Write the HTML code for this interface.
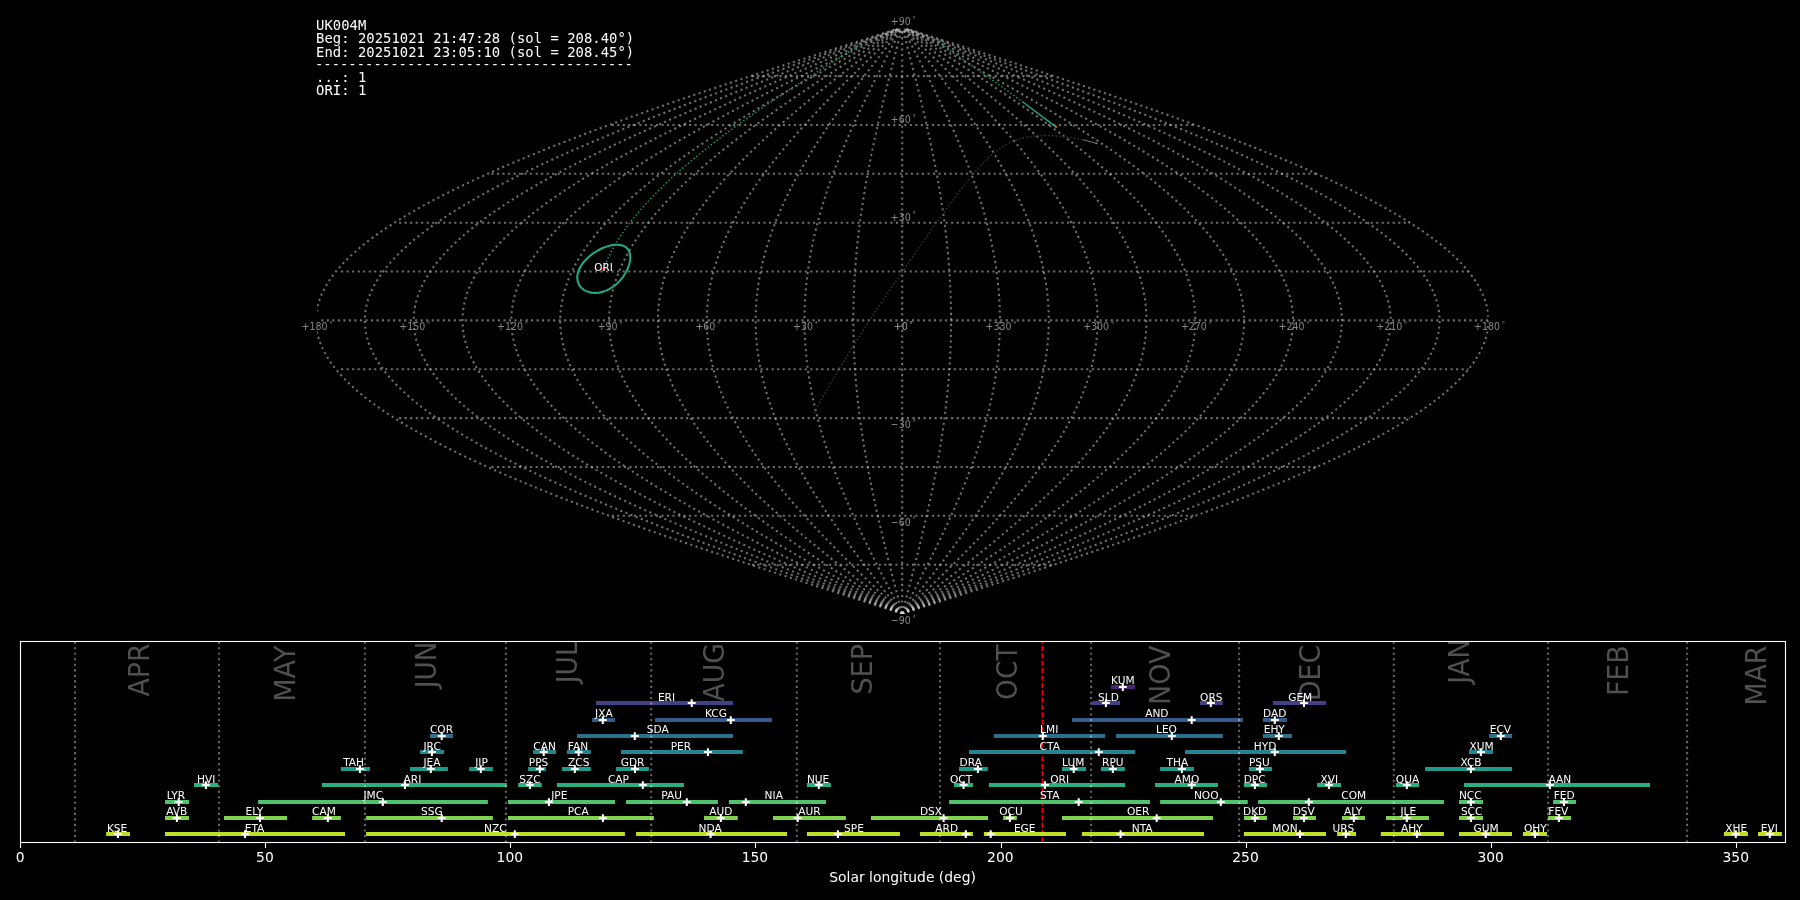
<!DOCTYPE html>
<html><head><meta charset="utf-8"><title>UK004M shower association</title>
<style>html,body{margin:0;padding:0;background:#000;overflow:hidden}svg{display:block;will-change:transform}</style></head>
<body>
<svg width="1800" height="900" viewBox="0 0 1800 900">
<rect width="1800" height="900" fill="#000"/>
<defs><clipPath id="ct"><rect x="317" y="26.8" width="1171.7" height="587.2"/></clipPath><clipPath id="cb"><rect x="20.5" y="641.5" width="1765" height="201"/></clipPath></defs>
<g clip-path="url(#ct)" fill="none" stroke="#d2d2d2" stroke-opacity="0.53" stroke-width="2.083" stroke-dasharray="2.083 3.437">
<path d="M902.20,613.53 L897.08,611.90 L891.97,610.27 L886.85,608.64 L881.74,607.02 L876.63,605.39 L871.52,603.76 L866.41,602.13 L861.30,600.50 L856.20,598.87 L851.10,597.25 L846.01,595.62 L840.92,593.99 L835.83,592.36 L830.75,590.73 L825.68,589.10 L820.61,587.47 L815.55,585.85 L810.49,584.22 L805.44,582.59 L800.40,580.96 L795.36,579.33 L790.34,577.70 L785.32,576.07 L780.31,574.45 L775.31,572.82 L770.32,571.19 L765.34,569.56 L760.37,567.93 L755.41,566.30 L750.46,564.67 L745.53,563.05 L740.60,561.42 L735.69,559.79 L730.79,558.16 L725.91,556.53 L721.04,554.90 L716.18,553.28 L711.33,551.65 L706.50,550.02 L701.69,548.39 L696.89,546.76 L692.10,545.13 L687.33,543.50 L682.58,541.88 L677.85,540.25 L673.13,538.62 L668.43,536.99 L663.75,535.36 L659.08,533.73 L654.44,532.11 L649.81,530.48 L645.20,528.85 L640.61,527.22 L636.04,525.59 L631.50,523.96 L626.97,522.33 L622.46,520.71 L617.98,519.08 L613.51,517.45 L609.07,515.82 L604.65,514.19 L600.25,512.56 L595.88,510.93 L591.53,509.31 L587.20,507.68 L582.90,506.05 L578.62,504.42 L574.37,502.79 L570.14,501.16 L565.94,499.53 L561.76,497.91 L557.61,496.28 L553.48,494.65 L549.38,493.02 L545.31,491.39 L541.26,489.76 L537.24,488.14 L533.25,486.51 L529.29,484.88 L525.36,483.25 L521.45,481.62 L517.58,479.99 L513.73,478.36 L509.92,476.74 L506.13,475.11 L502.37,473.48 L498.65,471.85 L494.95,470.22 L491.28,468.59 L487.65,466.96 L484.05,465.34 L480.48,463.71 L476.94,462.08 L473.44,460.45 L469.96,458.82 L466.52,457.19 L463.12,455.57 L459.74,453.94 L456.40,452.31 L453.10,450.68 L449.83,449.05 L446.59,447.42 L443.39,445.79 L440.22,444.17 L437.09,442.54 L433.99,440.91 L430.93,439.28 L427.91,437.65 L424.92,436.02 L421.96,434.39 L419.05,432.77 L416.17,431.14 L413.33,429.51 L410.52,427.88 L407.75,426.25 L405.02,424.62 L402.33,423.00 L399.68,421.37 L397.06,419.74 L394.48,418.11 L391.95,416.48 L389.45,414.85 L386.98,413.22 L384.56,411.60 L382.18,409.97 L379.84,408.34 L377.54,406.71 L375.27,405.08 L373.05,403.45 L370.87,401.82 L368.73,400.20 L366.62,398.57 L364.56,396.94 L362.54,395.31 L360.57,393.68 L358.63,392.05 L356.73,390.43 L354.88,388.80 L353.07,387.17 L351.30,385.54 L349.57,383.91 L347.88,382.28 L346.24,380.65 L344.63,379.03 L343.07,377.40 L341.56,375.77 L340.08,374.14 L338.65,372.51 L337.26,370.88 L335.92,369.25 L334.61,367.63 L333.35,366.00 L332.14,364.37 L330.97,362.74 L329.84,361.11 L328.75,359.48 L327.71,357.86 L326.71,356.23 L325.76,354.60 L324.85,352.97 L323.98,351.34 L323.16,349.71 L322.38,348.08 L321.65,346.46 L320.96,344.83 L320.31,343.20 L319.71,341.57 L319.15,339.94 L318.64,338.31 L318.17,336.69 L317.75,335.06 L317.37,333.43 L317.03,331.80 L316.74,330.17 L316.50,328.54 L316.30,326.91 L316.14,325.29 L316.03,323.66 L315.96,322.03 L315.94,320.40 L315.96,318.77 L316.03,317.14 L316.14,315.51 L316.30,313.89 L316.50,312.26 L316.74,310.63 L317.03,309.00 L317.37,307.37 L317.75,305.74 L318.17,304.11 L318.64,302.49 L319.15,300.86 L319.71,299.23 L320.31,297.60 L320.96,295.97 L321.65,294.34 L322.38,292.72 L323.16,291.09 L323.98,289.46 L324.85,287.83 L325.76,286.20 L326.71,284.57 L327.71,282.94 L328.75,281.32 L329.84,279.69 L330.97,278.06 L332.14,276.43 L333.35,274.80 L334.61,273.17 L335.92,271.54 L337.26,269.92 L338.65,268.29 L340.08,266.66 L341.56,265.03 L343.07,263.40 L344.63,261.77 L346.24,260.15 L347.88,258.52 L349.57,256.89 L351.30,255.26 L353.07,253.63 L354.88,252.00 L356.73,250.37 L358.63,248.75 L360.57,247.12 L362.54,245.49 L364.56,243.86 L366.62,242.23 L368.73,240.60 L370.87,238.97 L373.05,237.35 L375.27,235.72 L377.54,234.09 L379.84,232.46 L382.18,230.83 L384.56,229.20 L386.98,227.58 L389.45,225.95 L391.95,224.32 L394.48,222.69 L397.06,221.06 L399.68,219.43 L402.33,217.80 L405.02,216.18 L407.75,214.55 L410.52,212.92 L413.33,211.29 L416.17,209.66 L419.05,208.03 L421.96,206.40 L424.92,204.78 L427.91,203.15 L430.93,201.52 L433.99,199.89 L437.09,198.26 L440.22,196.63 L443.39,195.01 L446.59,193.38 L449.83,191.75 L453.10,190.12 L456.40,188.49 L459.74,186.86 L463.12,185.23 L466.52,183.61 L469.96,181.98 L473.44,180.35 L476.94,178.72 L480.48,177.09 L484.05,175.46 L487.65,173.83 L491.28,172.21 L494.95,170.58 L498.65,168.95 L502.37,167.32 L506.13,165.69 L509.92,164.06 L513.73,162.44 L517.58,160.81 L521.45,159.18 L525.36,157.55 L529.29,155.92 L533.25,154.29 L537.24,152.66 L541.26,151.04 L545.31,149.41 L549.38,147.78 L553.48,146.15 L557.61,144.52 L561.76,142.89 L565.94,141.26 L570.14,139.64 L574.37,138.01 L578.62,136.38 L582.90,134.75 L587.20,133.12 L591.53,131.49 L595.88,129.87 L600.25,128.24 L604.65,126.61 L609.07,124.98 L613.51,123.35 L617.98,121.72 L622.46,120.09 L626.97,118.47 L631.50,116.84 L636.04,115.21 L640.61,113.58 L645.20,111.95 L649.81,110.32 L654.44,108.69 L659.08,107.07 L663.75,105.44 L668.43,103.81 L673.13,102.18 L677.85,100.55 L682.58,98.92 L687.33,97.30 L692.10,95.67 L696.89,94.04 L701.69,92.41 L706.50,90.78 L711.33,89.15 L716.18,87.52 L721.04,85.90 L725.91,84.27 L730.79,82.64 L735.69,81.01 L740.60,79.38 L745.53,77.75 L750.46,76.12 L755.41,74.50 L760.37,72.87 L765.34,71.24 L770.32,69.61 L775.31,67.98 L780.31,66.35 L785.32,64.73 L790.34,63.10 L795.36,61.47 L800.40,59.84 L805.44,58.21 L810.49,56.58 L815.55,54.95 L820.61,53.33 L825.68,51.70 L830.75,50.07 L835.83,48.44 L840.92,46.81 L846.01,45.18 L851.10,43.55 L856.20,41.93 L861.30,40.30 L866.41,38.67 L871.52,37.04 L876.63,35.41 L881.74,33.78 L886.85,32.16 L891.97,30.53 L897.08,28.90"/>
<path d="M902.20,613.53 L897.51,611.90 L892.82,610.27 L888.13,608.64 L883.44,607.02 L878.76,605.39 L874.07,603.76 L869.39,602.13 L864.71,600.50 L860.04,598.87 L855.36,597.25 L850.69,595.62 L846.03,593.99 L841.36,592.36 L836.71,590.73 L832.05,589.10 L827.41,587.47 L822.77,585.85 L818.13,584.22 L813.50,582.59 L808.88,580.96 L804.27,579.33 L799.66,577.70 L795.06,576.07 L790.47,574.45 L785.88,572.82 L781.31,571.19 L776.75,569.56 L772.19,567.93 L767.64,566.30 L763.11,564.67 L758.58,563.05 L754.07,561.42 L749.57,559.79 L745.08,558.16 L740.60,556.53 L736.13,554.90 L731.68,553.28 L727.24,551.65 L722.81,550.02 L718.40,548.39 L714.00,546.76 L709.61,545.13 L705.24,543.50 L700.88,541.88 L696.54,540.25 L692.22,538.62 L687.91,536.99 L683.62,535.36 L679.34,533.73 L675.08,532.11 L670.84,530.48 L666.62,528.85 L662.41,527.22 L658.22,525.59 L654.05,523.96 L649.90,522.33 L645.77,520.71 L641.66,519.08 L637.57,517.45 L633.50,515.82 L629.45,514.19 L625.42,512.56 L621.41,510.93 L617.42,509.31 L613.45,507.68 L609.51,506.05 L605.59,504.42 L601.69,502.79 L597.81,501.16 L593.96,499.53 L590.13,497.91 L586.32,496.28 L582.54,494.65 L578.78,493.02 L575.05,491.39 L571.34,489.76 L567.66,488.14 L564.00,486.51 L560.37,484.88 L556.76,483.25 L553.18,481.62 L549.63,479.99 L546.10,478.36 L542.61,476.74 L539.13,475.11 L535.69,473.48 L532.27,471.85 L528.89,470.22 L525.53,468.59 L522.20,466.96 L518.90,465.34 L515.62,463.71 L512.38,462.08 L509.17,460.45 L505.98,458.82 L502.83,457.19 L499.71,455.57 L496.62,453.94 L493.55,452.31 L490.52,450.68 L487.53,449.05 L484.56,447.42 L481.62,445.79 L478.72,444.17 L475.85,442.54 L473.01,440.91 L470.20,439.28 L467.43,437.65 L464.69,436.02 L461.98,434.39 L459.31,432.77 L456.67,431.14 L454.07,429.51 L451.49,427.88 L448.96,426.25 L446.45,424.62 L443.99,423.00 L441.55,421.37 L439.16,419.74 L436.79,418.11 L434.47,416.48 L432.17,414.85 L429.92,413.22 L427.70,411.60 L425.52,409.97 L423.37,408.34 L421.26,406.71 L419.18,405.08 L417.15,403.45 L415.15,401.82 L413.18,400.20 L411.26,398.57 L409.37,396.94 L407.52,395.31 L405.70,393.68 L403.93,392.05 L402.19,390.43 L400.49,388.80 L398.83,387.17 L397.20,385.54 L395.62,383.91 L394.07,382.28 L392.57,380.65 L391.10,379.03 L389.67,377.40 L388.28,375.77 L386.93,374.14 L385.61,372.51 L384.34,370.88 L383.11,369.25 L381.91,367.63 L380.76,366.00 L379.64,364.37 L378.57,362.74 L377.53,361.11 L376.54,359.48 L375.58,357.86 L374.67,356.23 L373.79,354.60 L372.96,352.97 L372.17,351.34 L371.41,349.71 L370.70,348.08 L370.02,346.46 L369.39,344.83 L368.80,343.20 L368.25,341.57 L367.74,339.94 L367.27,338.31 L366.84,336.69 L366.45,335.06 L366.10,333.43 L365.80,331.80 L365.53,330.17 L365.31,328.54 L365.12,326.91 L364.98,325.29 L364.88,323.66 L364.82,322.03 L364.80,320.40 L364.82,318.77 L364.88,317.14 L364.98,315.51 L365.12,313.89 L365.31,312.26 L365.53,310.63 L365.80,309.00 L366.10,307.37 L366.45,305.74 L366.84,304.11 L367.27,302.49 L367.74,300.86 L368.25,299.23 L368.80,297.60 L369.39,295.97 L370.02,294.34 L370.70,292.72 L371.41,291.09 L372.17,289.46 L372.96,287.83 L373.79,286.20 L374.67,284.57 L375.58,282.94 L376.54,281.32 L377.53,279.69 L378.57,278.06 L379.64,276.43 L380.76,274.80 L381.91,273.17 L383.11,271.54 L384.34,269.92 L385.61,268.29 L386.93,266.66 L388.28,265.03 L389.67,263.40 L391.10,261.77 L392.57,260.15 L394.07,258.52 L395.62,256.89 L397.20,255.26 L398.83,253.63 L400.49,252.00 L402.19,250.37 L403.93,248.75 L405.70,247.12 L407.52,245.49 L409.37,243.86 L411.26,242.23 L413.18,240.60 L415.15,238.97 L417.15,237.35 L419.18,235.72 L421.26,234.09 L423.37,232.46 L425.52,230.83 L427.70,229.20 L429.92,227.58 L432.17,225.95 L434.47,224.32 L436.79,222.69 L439.16,221.06 L441.55,219.43 L443.99,217.80 L446.45,216.18 L448.96,214.55 L451.49,212.92 L454.07,211.29 L456.67,209.66 L459.31,208.03 L461.98,206.40 L464.69,204.78 L467.43,203.15 L470.20,201.52 L473.01,199.89 L475.85,198.26 L478.72,196.63 L481.62,195.01 L484.56,193.38 L487.53,191.75 L490.52,190.12 L493.55,188.49 L496.62,186.86 L499.71,185.23 L502.83,183.61 L505.98,181.98 L509.17,180.35 L512.38,178.72 L515.62,177.09 L518.90,175.46 L522.20,173.83 L525.53,172.21 L528.89,170.58 L532.27,168.95 L535.69,167.32 L539.13,165.69 L542.61,164.06 L546.10,162.44 L549.63,160.81 L553.18,159.18 L556.76,157.55 L560.37,155.92 L564.00,154.29 L567.66,152.66 L571.34,151.04 L575.05,149.41 L578.78,147.78 L582.54,146.15 L586.32,144.52 L590.13,142.89 L593.96,141.26 L597.81,139.64 L601.69,138.01 L605.59,136.38 L609.51,134.75 L613.45,133.12 L617.42,131.49 L621.41,129.87 L625.42,128.24 L629.45,126.61 L633.50,124.98 L637.57,123.35 L641.66,121.72 L645.77,120.09 L649.90,118.47 L654.05,116.84 L658.22,115.21 L662.41,113.58 L666.62,111.95 L670.84,110.32 L675.08,108.69 L679.34,107.07 L683.62,105.44 L687.91,103.81 L692.22,102.18 L696.54,100.55 L700.88,98.92 L705.24,97.30 L709.61,95.67 L714.00,94.04 L718.40,92.41 L722.81,90.78 L727.24,89.15 L731.68,87.52 L736.13,85.90 L740.60,84.27 L745.08,82.64 L749.57,81.01 L754.07,79.38 L758.58,77.75 L763.11,76.12 L767.64,74.50 L772.19,72.87 L776.75,71.24 L781.31,69.61 L785.88,67.98 L790.47,66.35 L795.06,64.73 L799.66,63.10 L804.27,61.47 L808.88,59.84 L813.50,58.21 L818.13,56.58 L822.77,54.95 L827.41,53.33 L832.05,51.70 L836.71,50.07 L841.36,48.44 L846.03,46.81 L850.69,45.18 L855.36,43.55 L860.04,41.93 L864.71,40.30 L869.39,38.67 L874.07,37.04 L878.76,35.41 L883.44,33.78 L888.13,32.16 L892.82,30.53 L897.51,28.90"/>
<path d="M902.20,613.53 L897.94,611.90 L893.67,610.27 L889.41,608.64 L885.15,607.02 L880.89,605.39 L876.63,603.76 L872.37,602.13 L868.12,600.50 L863.87,598.87 L859.62,597.25 L855.37,595.62 L851.13,593.99 L846.89,592.36 L842.66,590.73 L838.43,589.10 L834.21,587.47 L829.99,585.85 L825.77,584.22 L821.57,582.59 L817.36,580.96 L813.17,579.33 L808.98,577.70 L804.80,576.07 L800.62,574.45 L796.46,572.82 L792.30,571.19 L788.15,569.56 L784.01,567.93 L779.88,566.30 L775.75,564.67 L771.64,563.05 L767.54,561.42 L763.44,559.79 L759.36,558.16 L755.29,556.53 L751.23,554.90 L747.18,553.28 L743.14,551.65 L739.12,550.02 L735.11,548.39 L731.11,546.76 L727.12,545.13 L723.15,543.50 L719.19,541.88 L715.24,540.25 L711.31,538.62 L707.39,536.99 L703.49,535.36 L699.60,533.73 L695.73,532.11 L691.87,530.48 L688.03,528.85 L684.21,527.22 L680.40,525.59 L676.61,523.96 L672.84,522.33 L669.08,520.71 L665.35,519.08 L661.63,517.45 L657.92,515.82 L654.24,514.19 L650.58,512.56 L646.93,510.93 L643.31,509.31 L639.70,507.68 L636.12,506.05 L632.55,504.42 L629.01,502.79 L625.48,501.16 L621.98,499.53 L618.50,497.91 L615.04,496.28 L611.60,494.65 L608.18,493.02 L604.79,491.39 L601.42,489.76 L598.07,488.14 L594.75,486.51 L591.44,484.88 L588.17,483.25 L584.91,481.62 L581.68,479.99 L578.48,478.36 L575.30,476.74 L572.14,475.11 L569.01,473.48 L565.90,471.85 L562.82,470.22 L559.77,468.59 L556.74,466.96 L553.74,465.34 L550.77,463.71 L547.82,462.08 L544.90,460.45 L542.00,458.82 L539.14,457.19 L536.30,455.57 L533.49,453.94 L530.70,452.31 L527.95,450.68 L525.22,449.05 L522.53,447.42 L519.86,445.79 L517.22,444.17 L514.61,442.54 L512.03,440.91 L509.48,439.28 L506.95,437.65 L504.46,436.02 L502.00,434.39 L499.57,432.77 L497.17,431.14 L494.81,429.51 L492.47,427.88 L490.16,426.25 L487.89,424.62 L485.64,423.00 L483.43,421.37 L481.25,419.74 L479.10,418.11 L476.99,416.48 L474.90,414.85 L472.85,413.22 L470.84,411.60 L468.85,409.97 L466.90,408.34 L464.98,406.71 L463.09,405.08 L461.24,403.45 L459.42,401.82 L457.64,400.20 L455.89,398.57 L454.17,396.94 L452.49,395.31 L450.84,393.68 L449.22,392.05 L447.64,390.43 L446.10,388.80 L444.59,387.17 L443.11,385.54 L441.67,383.91 L440.27,382.28 L438.90,380.65 L437.56,379.03 L436.26,377.40 L435.00,375.77 L433.77,374.14 L432.58,372.51 L431.42,370.88 L430.30,369.25 L429.21,367.63 L428.16,366.00 L427.15,364.37 L426.17,362.74 L425.23,361.11 L424.33,359.48 L423.46,357.86 L422.63,356.23 L421.83,354.60 L421.07,352.97 L420.35,351.34 L419.66,349.71 L419.02,348.08 L418.40,346.46 L417.83,344.83 L417.29,343.20 L416.79,341.57 L416.33,339.94 L415.90,338.31 L415.51,336.69 L415.16,335.06 L414.84,333.43 L414.56,331.80 L414.32,330.17 L414.11,328.54 L413.95,326.91 L413.82,325.29 L413.72,323.66 L413.67,322.03 L413.65,320.40 L413.67,318.77 L413.72,317.14 L413.82,315.51 L413.95,313.89 L414.11,312.26 L414.32,310.63 L414.56,309.00 L414.84,307.37 L415.16,305.74 L415.51,304.11 L415.90,302.49 L416.33,300.86 L416.79,299.23 L417.29,297.60 L417.83,295.97 L418.40,294.34 L419.02,292.72 L419.66,291.09 L420.35,289.46 L421.07,287.83 L421.83,286.20 L422.63,284.57 L423.46,282.94 L424.33,281.32 L425.23,279.69 L426.17,278.06 L427.15,276.43 L428.16,274.80 L429.21,273.17 L430.30,271.54 L431.42,269.92 L432.58,268.29 L433.77,266.66 L435.00,265.03 L436.26,263.40 L437.56,261.77 L438.90,260.15 L440.27,258.52 L441.67,256.89 L443.11,255.26 L444.59,253.63 L446.10,252.00 L447.64,250.37 L449.22,248.75 L450.84,247.12 L452.49,245.49 L454.17,243.86 L455.89,242.23 L457.64,240.60 L459.42,238.97 L461.24,237.35 L463.09,235.72 L464.98,234.09 L466.90,232.46 L468.85,230.83 L470.84,229.20 L472.85,227.58 L474.90,225.95 L476.99,224.32 L479.10,222.69 L481.25,221.06 L483.43,219.43 L485.64,217.80 L487.89,216.18 L490.16,214.55 L492.47,212.92 L494.81,211.29 L497.17,209.66 L499.57,208.03 L502.00,206.40 L504.46,204.78 L506.95,203.15 L509.48,201.52 L512.03,199.89 L514.61,198.26 L517.22,196.63 L519.86,195.01 L522.53,193.38 L525.22,191.75 L527.95,190.12 L530.70,188.49 L533.49,186.86 L536.30,185.23 L539.14,183.61 L542.00,181.98 L544.90,180.35 L547.82,178.72 L550.77,177.09 L553.74,175.46 L556.74,173.83 L559.77,172.21 L562.82,170.58 L565.90,168.95 L569.01,167.32 L572.14,165.69 L575.30,164.06 L578.48,162.44 L581.68,160.81 L584.91,159.18 L588.17,157.55 L591.44,155.92 L594.75,154.29 L598.07,152.66 L601.42,151.04 L604.79,149.41 L608.18,147.78 L611.60,146.15 L615.04,144.52 L618.50,142.89 L621.98,141.26 L625.48,139.64 L629.01,138.01 L632.55,136.38 L636.12,134.75 L639.70,133.12 L643.31,131.49 L646.93,129.87 L650.58,128.24 L654.24,126.61 L657.92,124.98 L661.63,123.35 L665.35,121.72 L669.08,120.09 L672.84,118.47 L676.61,116.84 L680.40,115.21 L684.21,113.58 L688.03,111.95 L691.87,110.32 L695.73,108.69 L699.60,107.07 L703.49,105.44 L707.39,103.81 L711.31,102.18 L715.24,100.55 L719.19,98.92 L723.15,97.30 L727.12,95.67 L731.11,94.04 L735.11,92.41 L739.12,90.78 L743.14,89.15 L747.18,87.52 L751.23,85.90 L755.29,84.27 L759.36,82.64 L763.44,81.01 L767.54,79.38 L771.64,77.75 L775.75,76.12 L779.88,74.50 L784.01,72.87 L788.15,71.24 L792.30,69.61 L796.46,67.98 L800.62,66.35 L804.80,64.73 L808.98,63.10 L813.17,61.47 L817.36,59.84 L821.57,58.21 L825.77,56.58 L829.99,54.95 L834.21,53.33 L838.43,51.70 L842.66,50.07 L846.89,48.44 L851.13,46.81 L855.37,45.18 L859.62,43.55 L863.87,41.93 L868.12,40.30 L872.37,38.67 L876.63,37.04 L880.89,35.41 L885.15,33.78 L889.41,32.16 L893.67,30.53 L897.94,28.90"/>
<path d="M902.20,613.53 L898.36,611.90 L894.53,610.27 L890.69,608.64 L886.85,607.02 L883.02,605.39 L879.19,603.76 L875.36,602.13 L871.53,600.50 L867.70,598.87 L863.88,597.25 L860.06,595.62 L856.24,593.99 L852.43,592.36 L848.61,590.73 L844.81,589.10 L841.01,587.47 L837.21,585.85 L833.42,584.22 L829.63,582.59 L825.85,580.96 L822.07,579.33 L818.30,577.70 L814.54,576.07 L810.78,574.45 L807.03,572.82 L803.29,571.19 L799.56,569.56 L795.83,567.93 L792.11,566.30 L788.40,564.67 L784.70,563.05 L781.00,561.42 L777.32,559.79 L773.65,558.16 L769.98,556.53 L766.33,554.90 L762.68,553.28 L759.05,551.65 L755.43,550.02 L751.82,548.39 L748.22,546.76 L744.63,545.13 L741.05,543.50 L737.49,541.88 L733.94,540.25 L730.40,538.62 L726.87,536.99 L723.36,535.36 L719.86,533.73 L716.38,532.11 L712.91,530.48 L709.45,528.85 L706.01,527.22 L702.58,525.59 L699.17,523.96 L695.78,522.33 L692.40,520.71 L689.03,519.08 L685.68,517.45 L682.35,515.82 L679.04,514.19 L675.74,512.56 L672.46,510.93 L669.20,509.31 L665.95,507.68 L662.72,506.05 L659.52,504.42 L656.33,502.79 L653.15,501.16 L650.00,499.53 L646.87,497.91 L643.75,496.28 L640.66,494.65 L637.58,493.02 L634.53,491.39 L631.50,489.76 L628.48,488.14 L625.49,486.51 L622.52,484.88 L619.57,483.25 L616.64,481.62 L613.73,479.99 L610.85,478.36 L607.99,476.74 L605.15,475.11 L602.33,473.48 L599.53,471.85 L596.76,470.22 L594.01,468.59 L591.29,466.96 L588.59,465.34 L585.91,463.71 L583.26,462.08 L580.63,460.45 L578.02,458.82 L575.44,457.19 L572.89,455.57 L570.36,453.94 L567.85,452.31 L565.37,450.68 L562.92,449.05 L560.49,447.42 L558.09,445.79 L555.72,444.17 L553.37,442.54 L551.04,440.91 L548.75,439.28 L546.48,437.65 L544.24,436.02 L542.02,434.39 L539.84,432.77 L537.68,431.14 L535.54,429.51 L533.44,427.88 L531.36,426.25 L529.32,424.62 L527.30,423.00 L525.31,421.37 L523.35,419.74 L521.41,418.11 L519.51,416.48 L517.63,414.85 L515.79,413.22 L513.97,411.60 L512.19,409.97 L510.43,408.34 L508.70,406.71 L507.00,405.08 L505.34,403.45 L503.70,401.82 L502.09,400.20 L500.52,398.57 L498.97,396.94 L497.46,395.31 L495.97,393.68 L494.52,392.05 L493.10,390.43 L491.71,388.80 L490.35,387.17 L489.02,385.54 L487.73,383.91 L486.46,382.28 L485.23,380.65 L484.03,379.03 L482.86,377.40 L481.72,375.77 L480.61,374.14 L479.54,372.51 L478.50,370.88 L477.49,369.25 L476.51,367.63 L475.57,366.00 L474.65,364.37 L473.77,362.74 L472.93,361.11 L472.11,359.48 L471.33,357.86 L470.58,356.23 L469.87,354.60 L469.18,352.97 L468.54,351.34 L467.92,349.71 L467.33,348.08 L466.78,346.46 L466.27,344.83 L465.78,343.20 L465.33,341.57 L464.91,339.94 L464.53,338.31 L464.18,336.69 L463.86,335.06 L463.58,333.43 L463.33,331.80 L463.11,330.17 L462.92,328.54 L462.77,326.91 L462.66,325.29 L462.57,323.66 L462.52,322.03 L462.51,320.40 L462.52,318.77 L462.57,317.14 L462.66,315.51 L462.77,313.89 L462.92,312.26 L463.11,310.63 L463.33,309.00 L463.58,307.37 L463.86,305.74 L464.18,304.11 L464.53,302.49 L464.91,300.86 L465.33,299.23 L465.78,297.60 L466.27,295.97 L466.78,294.34 L467.33,292.72 L467.92,291.09 L468.54,289.46 L469.18,287.83 L469.87,286.20 L470.58,284.57 L471.33,282.94 L472.11,281.32 L472.93,279.69 L473.77,278.06 L474.65,276.43 L475.57,274.80 L476.51,273.17 L477.49,271.54 L478.50,269.92 L479.54,268.29 L480.61,266.66 L481.72,265.03 L482.86,263.40 L484.03,261.77 L485.23,260.15 L486.46,258.52 L487.73,256.89 L489.02,255.26 L490.35,253.63 L491.71,252.00 L493.10,250.37 L494.52,248.75 L495.97,247.12 L497.46,245.49 L498.97,243.86 L500.52,242.23 L502.09,240.60 L503.70,238.97 L505.34,237.35 L507.00,235.72 L508.70,234.09 L510.43,232.46 L512.19,230.83 L513.97,229.20 L515.79,227.58 L517.63,225.95 L519.51,224.32 L521.41,222.69 L523.35,221.06 L525.31,219.43 L527.30,217.80 L529.32,216.18 L531.36,214.55 L533.44,212.92 L535.54,211.29 L537.68,209.66 L539.84,208.03 L542.02,206.40 L544.24,204.78 L546.48,203.15 L548.75,201.52 L551.04,199.89 L553.37,198.26 L555.72,196.63 L558.09,195.01 L560.49,193.38 L562.92,191.75 L565.37,190.12 L567.85,188.49 L570.36,186.86 L572.89,185.23 L575.44,183.61 L578.02,181.98 L580.63,180.35 L583.26,178.72 L585.91,177.09 L588.59,175.46 L591.29,173.83 L594.01,172.21 L596.76,170.58 L599.53,168.95 L602.33,167.32 L605.15,165.69 L607.99,164.06 L610.85,162.44 L613.73,160.81 L616.64,159.18 L619.57,157.55 L622.52,155.92 L625.49,154.29 L628.48,152.66 L631.50,151.04 L634.53,149.41 L637.58,147.78 L640.66,146.15 L643.75,144.52 L646.87,142.89 L650.00,141.26 L653.15,139.64 L656.33,138.01 L659.52,136.38 L662.72,134.75 L665.95,133.12 L669.20,131.49 L672.46,129.87 L675.74,128.24 L679.04,126.61 L682.35,124.98 L685.68,123.35 L689.03,121.72 L692.40,120.09 L695.78,118.47 L699.17,116.84 L702.58,115.21 L706.01,113.58 L709.45,111.95 L712.91,110.32 L716.38,108.69 L719.86,107.07 L723.36,105.44 L726.87,103.81 L730.40,102.18 L733.94,100.55 L737.49,98.92 L741.05,97.30 L744.63,95.67 L748.22,94.04 L751.82,92.41 L755.43,90.78 L759.05,89.15 L762.68,87.52 L766.33,85.90 L769.98,84.27 L773.65,82.64 L777.32,81.01 L781.00,79.38 L784.70,77.75 L788.40,76.12 L792.11,74.50 L795.83,72.87 L799.56,71.24 L803.29,69.61 L807.03,67.98 L810.78,66.35 L814.54,64.73 L818.30,63.10 L822.07,61.47 L825.85,59.84 L829.63,58.21 L833.42,56.58 L837.21,54.95 L841.01,53.33 L844.81,51.70 L848.61,50.07 L852.43,48.44 L856.24,46.81 L860.06,45.18 L863.88,43.55 L867.70,41.93 L871.53,40.30 L875.36,38.67 L879.19,37.04 L883.02,35.41 L886.85,33.78 L890.69,32.16 L894.53,30.53 L898.36,28.90"/>
<path d="M902.20,613.53 L898.79,611.90 L895.38,610.27 L891.97,608.64 L888.56,607.02 L885.15,605.39 L881.75,603.76 L878.34,602.13 L874.94,600.50 L871.54,598.87 L868.14,597.25 L864.74,595.62 L861.35,593.99 L857.96,592.36 L854.57,590.73 L851.19,589.10 L847.81,587.47 L844.43,585.85 L841.06,584.22 L837.69,582.59 L834.33,580.96 L830.98,579.33 L827.62,577.70 L824.28,576.07 L820.94,574.45 L817.61,572.82 L814.28,571.19 L810.96,569.56 L807.65,567.93 L804.34,566.30 L801.04,564.67 L797.75,563.05 L794.47,561.42 L791.20,559.79 L787.93,558.16 L784.67,556.53 L781.42,554.90 L778.18,553.28 L774.95,551.65 L771.73,550.02 L768.52,548.39 L765.32,546.76 L762.14,545.13 L758.96,543.50 L755.79,541.88 L752.63,540.25 L749.49,538.62 L746.35,536.99 L743.23,535.36 L740.12,533.73 L737.02,532.11 L733.94,530.48 L730.87,528.85 L727.81,527.22 L724.76,525.59 L721.73,523.96 L718.71,522.33 L715.71,520.71 L712.72,519.08 L709.74,517.45 L706.78,515.82 L703.83,514.19 L700.90,512.56 L697.99,510.93 L695.09,509.31 L692.20,507.68 L689.33,506.05 L686.48,504.42 L683.65,502.79 L680.83,501.16 L678.02,499.53 L675.24,497.91 L672.47,496.28 L669.72,494.65 L666.99,493.02 L664.27,491.39 L661.57,489.76 L658.90,488.14 L656.24,486.51 L653.60,484.88 L650.97,483.25 L648.37,481.62 L645.79,479.99 L643.22,478.36 L640.68,476.74 L638.15,475.11 L635.65,473.48 L633.16,471.85 L630.70,470.22 L628.26,468.59 L625.83,466.96 L623.43,465.34 L621.05,463.71 L618.69,462.08 L616.36,460.45 L614.04,458.82 L611.75,457.19 L609.48,455.57 L607.23,453.94 L605.00,452.31 L602.80,450.68 L600.62,449.05 L598.46,447.42 L596.33,445.79 L594.21,444.17 L592.13,442.54 L590.06,440.91 L588.02,439.28 L586.00,437.65 L584.01,436.02 L582.04,434.39 L580.10,432.77 L578.18,431.14 L576.28,429.51 L574.41,427.88 L572.57,426.25 L570.75,424.62 L568.95,423.00 L567.18,421.37 L565.44,419.74 L563.72,418.11 L562.03,416.48 L560.36,414.85 L558.72,413.22 L557.11,411.60 L555.52,409.97 L553.96,408.34 L552.42,406.71 L550.92,405.08 L549.43,403.45 L547.98,401.82 L546.55,400.20 L545.15,398.57 L543.78,396.94 L542.43,395.31 L541.11,393.68 L539.82,392.05 L538.56,390.43 L537.32,388.80 L536.11,387.17 L534.93,385.54 L533.78,383.91 L532.65,382.28 L531.56,380.65 L530.49,379.03 L529.45,377.40 L528.44,375.77 L527.45,374.14 L526.50,372.51 L525.57,370.88 L524.68,369.25 L523.81,367.63 L522.97,366.00 L522.16,364.37 L521.38,362.74 L520.62,361.11 L519.90,359.48 L519.21,357.86 L518.54,356.23 L517.90,354.60 L517.30,352.97 L516.72,351.34 L516.17,349.71 L515.65,348.08 L515.16,346.46 L514.70,344.83 L514.27,343.20 L513.87,341.57 L513.50,339.94 L513.16,338.31 L512.85,336.69 L512.56,335.06 L512.31,333.43 L512.09,331.80 L511.90,330.17 L511.73,328.54 L511.60,326.91 L511.49,325.29 L511.42,323.66 L511.37,322.03 L511.36,320.40 L511.37,318.77 L511.42,317.14 L511.49,315.51 L511.60,313.89 L511.73,312.26 L511.90,310.63 L512.09,309.00 L512.31,307.37 L512.56,305.74 L512.85,304.11 L513.16,302.49 L513.50,300.86 L513.87,299.23 L514.27,297.60 L514.70,295.97 L515.16,294.34 L515.65,292.72 L516.17,291.09 L516.72,289.46 L517.30,287.83 L517.90,286.20 L518.54,284.57 L519.21,282.94 L519.90,281.32 L520.62,279.69 L521.38,278.06 L522.16,276.43 L522.97,274.80 L523.81,273.17 L524.68,271.54 L525.57,269.92 L526.50,268.29 L527.45,266.66 L528.44,265.03 L529.45,263.40 L530.49,261.77 L531.56,260.15 L532.65,258.52 L533.78,256.89 L534.93,255.26 L536.11,253.63 L537.32,252.00 L538.56,250.37 L539.82,248.75 L541.11,247.12 L542.43,245.49 L543.78,243.86 L545.15,242.23 L546.55,240.60 L547.98,238.97 L549.43,237.35 L550.92,235.72 L552.42,234.09 L553.96,232.46 L555.52,230.83 L557.11,229.20 L558.72,227.58 L560.36,225.95 L562.03,224.32 L563.72,222.69 L565.44,221.06 L567.18,219.43 L568.95,217.80 L570.75,216.18 L572.57,214.55 L574.41,212.92 L576.28,211.29 L578.18,209.66 L580.10,208.03 L582.04,206.40 L584.01,204.78 L586.00,203.15 L588.02,201.52 L590.06,199.89 L592.13,198.26 L594.21,196.63 L596.33,195.01 L598.46,193.38 L600.62,191.75 L602.80,190.12 L605.00,188.49 L607.23,186.86 L609.48,185.23 L611.75,183.61 L614.04,181.98 L616.36,180.35 L618.69,178.72 L621.05,177.09 L623.43,175.46 L625.83,173.83 L628.26,172.21 L630.70,170.58 L633.16,168.95 L635.65,167.32 L638.15,165.69 L640.68,164.06 L643.22,162.44 L645.79,160.81 L648.37,159.18 L650.97,157.55 L653.60,155.92 L656.24,154.29 L658.90,152.66 L661.57,151.04 L664.27,149.41 L666.99,147.78 L669.72,146.15 L672.47,144.52 L675.24,142.89 L678.02,141.26 L680.83,139.64 L683.65,138.01 L686.48,136.38 L689.33,134.75 L692.20,133.12 L695.09,131.49 L697.99,129.87 L700.90,128.24 L703.83,126.61 L706.78,124.98 L709.74,123.35 L712.72,121.72 L715.71,120.09 L718.71,118.47 L721.73,116.84 L724.76,115.21 L727.81,113.58 L730.87,111.95 L733.94,110.32 L737.02,108.69 L740.12,107.07 L743.23,105.44 L746.35,103.81 L749.49,102.18 L752.63,100.55 L755.79,98.92 L758.96,97.30 L762.14,95.67 L765.32,94.04 L768.52,92.41 L771.73,90.78 L774.95,89.15 L778.18,87.52 L781.42,85.90 L784.67,84.27 L787.93,82.64 L791.20,81.01 L794.47,79.38 L797.75,77.75 L801.04,76.12 L804.34,74.50 L807.65,72.87 L810.96,71.24 L814.28,69.61 L817.61,67.98 L820.94,66.35 L824.28,64.73 L827.62,63.10 L830.98,61.47 L834.33,59.84 L837.69,58.21 L841.06,56.58 L844.43,54.95 L847.81,53.33 L851.19,51.70 L854.57,50.07 L857.96,48.44 L861.35,46.81 L864.74,45.18 L868.14,43.55 L871.54,41.93 L874.94,40.30 L878.34,38.67 L881.75,37.04 L885.15,35.41 L888.56,33.78 L891.97,32.16 L895.38,30.53 L898.79,28.90"/>
<path d="M902.20,613.53 L899.22,611.90 L896.23,610.27 L893.25,608.64 L890.26,607.02 L887.28,605.39 L884.30,603.76 L881.32,602.13 L878.34,600.50 L875.37,598.87 L872.39,597.25 L869.42,595.62 L866.45,593.99 L863.49,592.36 L860.52,590.73 L857.56,589.10 L854.60,587.47 L851.65,585.85 L848.70,584.22 L845.76,582.59 L842.81,580.96 L839.88,579.33 L836.95,577.70 L834.02,576.07 L831.10,574.45 L828.18,572.82 L825.27,571.19 L822.37,569.56 L819.47,567.93 L816.57,566.30 L813.69,564.67 L810.81,563.05 L807.94,561.42 L805.07,559.79 L802.21,558.16 L799.36,556.53 L796.52,554.90 L793.69,553.28 L790.86,551.65 L788.04,550.02 L785.23,548.39 L782.43,546.76 L779.64,545.13 L776.86,543.50 L774.09,541.88 L771.33,540.25 L768.58,538.62 L765.83,536.99 L763.10,535.36 L760.38,533.73 L757.67,532.11 L754.97,530.48 L752.28,528.85 L749.61,527.22 L746.94,525.59 L744.29,523.96 L741.65,522.33 L739.02,520.71 L736.40,519.08 L733.80,517.45 L731.21,515.82 L728.63,514.19 L726.06,512.56 L723.51,510.93 L720.98,509.31 L718.45,507.68 L715.94,506.05 L713.45,504.42 L710.96,502.79 L708.50,501.16 L706.05,499.53 L703.61,497.91 L701.19,496.28 L698.78,494.65 L696.39,493.02 L694.01,491.39 L691.65,489.76 L689.31,488.14 L686.98,486.51 L684.67,484.88 L682.38,483.25 L680.10,481.62 L677.84,479.99 L675.59,478.36 L673.37,476.74 L671.16,475.11 L668.97,473.48 L666.79,471.85 L664.64,470.22 L662.50,468.59 L660.38,466.96 L658.28,465.34 L656.20,463.71 L654.13,462.08 L652.09,460.45 L650.06,458.82 L648.06,457.19 L646.07,455.57 L644.10,453.94 L642.15,452.31 L640.22,450.68 L638.32,449.05 L636.43,447.42 L634.56,445.79 L632.71,444.17 L630.89,442.54 L629.08,440.91 L627.29,439.28 L625.53,437.65 L623.78,436.02 L622.06,434.39 L620.36,432.77 L618.68,431.14 L617.02,429.51 L615.39,427.88 L613.77,426.25 L612.18,424.62 L610.61,423.00 L609.06,421.37 L607.54,419.74 L606.03,418.11 L604.55,416.48 L603.09,414.85 L601.66,413.22 L600.25,411.60 L598.86,409.97 L597.49,408.34 L596.15,406.71 L594.83,405.08 L593.53,403.45 L592.26,401.82 L591.01,400.20 L589.78,398.57 L588.58,396.94 L587.40,395.31 L586.25,393.68 L585.12,392.05 L584.01,390.43 L582.93,388.80 L581.87,387.17 L580.84,385.54 L579.83,383.91 L578.85,382.28 L577.89,380.65 L576.95,379.03 L576.04,377.40 L575.16,375.77 L574.30,374.14 L573.46,372.51 L572.65,370.88 L571.87,369.25 L571.11,367.63 L570.37,366.00 L569.66,364.37 L568.98,362.74 L568.32,361.11 L567.69,359.48 L567.08,357.86 L566.50,356.23 L565.94,354.60 L565.41,352.97 L564.91,351.34 L564.43,349.71 L563.97,348.08 L563.54,346.46 L563.14,344.83 L562.76,343.20 L562.41,341.57 L562.09,339.94 L561.79,338.31 L561.52,336.69 L561.27,335.06 L561.05,333.43 L560.85,331.80 L560.68,330.17 L560.54,328.54 L560.42,326.91 L560.33,325.29 L560.27,323.66 L560.23,322.03 L560.22,320.40 L560.23,318.77 L560.27,317.14 L560.33,315.51 L560.42,313.89 L560.54,312.26 L560.68,310.63 L560.85,309.00 L561.05,307.37 L561.27,305.74 L561.52,304.11 L561.79,302.49 L562.09,300.86 L562.41,299.23 L562.76,297.60 L563.14,295.97 L563.54,294.34 L563.97,292.72 L564.43,291.09 L564.91,289.46 L565.41,287.83 L565.94,286.20 L566.50,284.57 L567.08,282.94 L567.69,281.32 L568.32,279.69 L568.98,278.06 L569.66,276.43 L570.37,274.80 L571.11,273.17 L571.87,271.54 L572.65,269.92 L573.46,268.29 L574.30,266.66 L575.16,265.03 L576.04,263.40 L576.95,261.77 L577.89,260.15 L578.85,258.52 L579.83,256.89 L580.84,255.26 L581.87,253.63 L582.93,252.00 L584.01,250.37 L585.12,248.75 L586.25,247.12 L587.40,245.49 L588.58,243.86 L589.78,242.23 L591.01,240.60 L592.26,238.97 L593.53,237.35 L594.83,235.72 L596.15,234.09 L597.49,232.46 L598.86,230.83 L600.25,229.20 L601.66,227.58 L603.09,225.95 L604.55,224.32 L606.03,222.69 L607.54,221.06 L609.06,219.43 L610.61,217.80 L612.18,216.18 L613.77,214.55 L615.39,212.92 L617.02,211.29 L618.68,209.66 L620.36,208.03 L622.06,206.40 L623.78,204.78 L625.53,203.15 L627.29,201.52 L629.08,199.89 L630.89,198.26 L632.71,196.63 L634.56,195.01 L636.43,193.38 L638.32,191.75 L640.22,190.12 L642.15,188.49 L644.10,186.86 L646.07,185.23 L648.06,183.61 L650.06,181.98 L652.09,180.35 L654.13,178.72 L656.20,177.09 L658.28,175.46 L660.38,173.83 L662.50,172.21 L664.64,170.58 L666.79,168.95 L668.97,167.32 L671.16,165.69 L673.37,164.06 L675.59,162.44 L677.84,160.81 L680.10,159.18 L682.38,157.55 L684.67,155.92 L686.98,154.29 L689.31,152.66 L691.65,151.04 L694.01,149.41 L696.39,147.78 L698.78,146.15 L701.19,144.52 L703.61,142.89 L706.05,141.26 L708.50,139.64 L710.96,138.01 L713.45,136.38 L715.94,134.75 L718.45,133.12 L720.98,131.49 L723.51,129.87 L726.06,128.24 L728.63,126.61 L731.21,124.98 L733.80,123.35 L736.40,121.72 L739.02,120.09 L741.65,118.47 L744.29,116.84 L746.94,115.21 L749.61,113.58 L752.28,111.95 L754.97,110.32 L757.67,108.69 L760.38,107.07 L763.10,105.44 L765.83,103.81 L768.58,102.18 L771.33,100.55 L774.09,98.92 L776.86,97.30 L779.64,95.67 L782.43,94.04 L785.23,92.41 L788.04,90.78 L790.86,89.15 L793.69,87.52 L796.52,85.90 L799.36,84.27 L802.21,82.64 L805.07,81.01 L807.94,79.38 L810.81,77.75 L813.69,76.12 L816.57,74.50 L819.47,72.87 L822.37,71.24 L825.27,69.61 L828.18,67.98 L831.10,66.35 L834.02,64.73 L836.95,63.10 L839.88,61.47 L842.81,59.84 L845.76,58.21 L848.70,56.58 L851.65,54.95 L854.60,53.33 L857.56,51.70 L860.52,50.07 L863.49,48.44 L866.45,46.81 L869.42,45.18 L872.39,43.55 L875.37,41.93 L878.34,40.30 L881.32,38.67 L884.30,37.04 L887.28,35.41 L890.26,33.78 L893.25,32.16 L896.23,30.53 L899.22,28.90"/>
<path d="M902.20,613.53 L899.64,611.90 L897.08,610.27 L894.53,608.64 L891.97,607.02 L889.41,605.39 L886.86,603.76 L884.30,602.13 L881.75,600.50 L879.20,598.87 L876.65,597.25 L874.10,595.62 L871.56,593.99 L869.02,592.36 L866.48,590.73 L863.94,589.10 L861.40,587.47 L858.87,585.85 L856.34,584.22 L853.82,582.59 L851.30,580.96 L848.78,579.33 L846.27,577.70 L843.76,576.07 L841.25,574.45 L838.76,572.82 L836.26,571.19 L833.77,569.56 L831.29,567.93 L828.81,566.30 L826.33,564.67 L823.86,563.05 L821.40,561.42 L818.95,559.79 L816.50,558.16 L814.05,556.53 L811.62,554.90 L809.19,553.28 L806.77,551.65 L804.35,550.02 L801.94,548.39 L799.54,546.76 L797.15,545.13 L794.77,543.50 L792.39,541.88 L790.02,540.25 L787.66,538.62 L785.31,536.99 L782.97,535.36 L780.64,533.73 L778.32,532.11 L776.00,530.48 L773.70,528.85 L771.41,527.22 L769.12,525.59 L766.85,523.96 L764.58,522.33 L762.33,520.71 L760.09,519.08 L757.86,517.45 L755.63,515.82 L753.43,514.19 L751.23,512.56 L749.04,510.93 L746.86,509.31 L744.70,507.68 L742.55,506.05 L740.41,504.42 L738.28,502.79 L736.17,501.16 L734.07,499.53 L731.98,497.91 L729.90,496.28 L727.84,494.65 L725.79,493.02 L723.75,491.39 L721.73,489.76 L719.72,488.14 L717.73,486.51 L715.75,484.88 L713.78,483.25 L711.83,481.62 L709.89,479.99 L707.97,478.36 L706.06,476.74 L704.16,475.11 L702.29,473.48 L700.42,471.85 L698.57,470.22 L696.74,468.59 L694.93,466.96 L693.12,465.34 L691.34,463.71 L689.57,462.08 L687.82,460.45 L686.08,458.82 L684.36,457.19 L682.66,455.57 L680.97,453.94 L679.30,452.31 L677.65,450.68 L676.01,449.05 L674.40,447.42 L672.79,445.79 L671.21,444.17 L669.64,442.54 L668.10,440.91 L666.57,439.28 L665.05,437.65 L663.56,436.02 L662.08,434.39 L660.62,432.77 L659.18,431.14 L657.76,429.51 L656.36,427.88 L654.98,426.25 L653.61,424.62 L652.27,423.00 L650.94,421.37 L649.63,419.74 L648.34,418.11 L647.07,416.48 L645.82,414.85 L644.59,413.22 L643.38,411.60 L642.19,409.97 L641.02,408.34 L639.87,406.71 L638.74,405.08 L637.63,403.45 L636.53,401.82 L635.46,400.20 L634.41,398.57 L633.38,396.94 L632.37,395.31 L631.38,393.68 L630.41,392.05 L629.47,390.43 L628.54,388.80 L627.63,387.17 L626.75,385.54 L625.88,383.91 L625.04,382.28 L624.22,380.65 L623.42,379.03 L622.64,377.40 L621.88,375.77 L621.14,374.14 L620.43,372.51 L619.73,370.88 L619.06,369.25 L618.41,367.63 L617.78,366.00 L617.17,364.37 L616.58,362.74 L616.02,361.11 L615.48,359.48 L614.95,357.86 L614.46,356.23 L613.98,354.60 L613.52,352.97 L613.09,351.34 L612.68,349.71 L612.29,348.08 L611.92,346.46 L611.58,344.83 L611.25,343.20 L610.95,341.57 L610.68,339.94 L610.42,338.31 L610.19,336.69 L609.97,335.06 L609.78,333.43 L609.62,331.80 L609.47,330.17 L609.35,328.54 L609.25,326.91 L609.17,325.29 L609.11,323.66 L609.08,322.03 L609.07,320.40 L609.08,318.77 L609.11,317.14 L609.17,315.51 L609.25,313.89 L609.35,312.26 L609.47,310.63 L609.62,309.00 L609.78,307.37 L609.97,305.74 L610.19,304.11 L610.42,302.49 L610.68,300.86 L610.95,299.23 L611.25,297.60 L611.58,295.97 L611.92,294.34 L612.29,292.72 L612.68,291.09 L613.09,289.46 L613.52,287.83 L613.98,286.20 L614.46,284.57 L614.95,282.94 L615.48,281.32 L616.02,279.69 L616.58,278.06 L617.17,276.43 L617.78,274.80 L618.41,273.17 L619.06,271.54 L619.73,269.92 L620.43,268.29 L621.14,266.66 L621.88,265.03 L622.64,263.40 L623.42,261.77 L624.22,260.15 L625.04,258.52 L625.88,256.89 L626.75,255.26 L627.63,253.63 L628.54,252.00 L629.47,250.37 L630.41,248.75 L631.38,247.12 L632.37,245.49 L633.38,243.86 L634.41,242.23 L635.46,240.60 L636.53,238.97 L637.63,237.35 L638.74,235.72 L639.87,234.09 L641.02,232.46 L642.19,230.83 L643.38,229.20 L644.59,227.58 L645.82,225.95 L647.07,224.32 L648.34,222.69 L649.63,221.06 L650.94,219.43 L652.27,217.80 L653.61,216.18 L654.98,214.55 L656.36,212.92 L657.76,211.29 L659.18,209.66 L660.62,208.03 L662.08,206.40 L663.56,204.78 L665.05,203.15 L666.57,201.52 L668.10,199.89 L669.64,198.26 L671.21,196.63 L672.79,195.01 L674.40,193.38 L676.01,191.75 L677.65,190.12 L679.30,188.49 L680.97,186.86 L682.66,185.23 L684.36,183.61 L686.08,181.98 L687.82,180.35 L689.57,178.72 L691.34,177.09 L693.12,175.46 L694.93,173.83 L696.74,172.21 L698.57,170.58 L700.42,168.95 L702.29,167.32 L704.16,165.69 L706.06,164.06 L707.97,162.44 L709.89,160.81 L711.83,159.18 L713.78,157.55 L715.75,155.92 L717.73,154.29 L719.72,152.66 L721.73,151.04 L723.75,149.41 L725.79,147.78 L727.84,146.15 L729.90,144.52 L731.98,142.89 L734.07,141.26 L736.17,139.64 L738.28,138.01 L740.41,136.38 L742.55,134.75 L744.70,133.12 L746.86,131.49 L749.04,129.87 L751.23,128.24 L753.43,126.61 L755.63,124.98 L757.86,123.35 L760.09,121.72 L762.33,120.09 L764.58,118.47 L766.85,116.84 L769.12,115.21 L771.41,113.58 L773.70,111.95 L776.00,110.32 L778.32,108.69 L780.64,107.07 L782.97,105.44 L785.31,103.81 L787.66,102.18 L790.02,100.55 L792.39,98.92 L794.77,97.30 L797.15,95.67 L799.54,94.04 L801.94,92.41 L804.35,90.78 L806.77,89.15 L809.19,87.52 L811.62,85.90 L814.05,84.27 L816.50,82.64 L818.95,81.01 L821.40,79.38 L823.86,77.75 L826.33,76.12 L828.81,74.50 L831.29,72.87 L833.77,71.24 L836.26,69.61 L838.76,67.98 L841.25,66.35 L843.76,64.73 L846.27,63.10 L848.78,61.47 L851.30,59.84 L853.82,58.21 L856.34,56.58 L858.87,54.95 L861.40,53.33 L863.94,51.70 L866.48,50.07 L869.02,48.44 L871.56,46.81 L874.10,45.18 L876.65,43.55 L879.20,41.93 L881.75,40.30 L884.30,38.67 L886.86,37.04 L889.41,35.41 L891.97,33.78 L894.53,32.16 L897.08,30.53 L899.64,28.90"/>
<path d="M902.20,613.53 L900.07,611.90 L897.94,610.27 L895.81,608.64 L893.67,607.02 L891.54,605.39 L889.42,603.76 L887.29,602.13 L885.16,600.50 L883.03,598.87 L880.91,597.25 L878.79,595.62 L876.67,593.99 L874.55,592.36 L872.43,590.73 L870.32,589.10 L868.20,587.47 L866.09,585.85 L863.99,584.22 L861.88,582.59 L859.78,580.96 L857.68,579.33 L855.59,577.70 L853.50,576.07 L851.41,574.45 L849.33,572.82 L847.25,571.19 L845.18,569.56 L843.10,567.93 L841.04,566.30 L838.98,564.67 L836.92,563.05 L834.87,561.42 L832.82,559.79 L830.78,558.16 L828.75,556.53 L826.71,554.90 L824.69,553.28 L822.67,551.65 L820.66,550.02 L818.65,548.39 L816.65,546.76 L814.66,545.13 L812.67,543.50 L810.69,541.88 L808.72,540.25 L806.75,538.62 L804.80,536.99 L802.84,535.36 L800.90,533.73 L798.96,532.11 L797.04,530.48 L795.12,528.85 L793.21,527.22 L791.30,525.59 L789.41,523.96 L787.52,522.33 L785.64,520.71 L783.77,519.08 L781.91,517.45 L780.06,515.82 L778.22,514.19 L776.39,512.56 L774.57,510.93 L772.75,509.31 L770.95,507.68 L769.16,506.05 L767.38,504.42 L765.60,502.79 L763.84,501.16 L762.09,499.53 L760.35,497.91 L758.62,496.28 L756.90,494.65 L755.19,493.02 L753.49,491.39 L751.81,489.76 L750.14,488.14 L748.47,486.51 L746.82,484.88 L745.18,483.25 L743.56,481.62 L741.94,479.99 L740.34,478.36 L738.75,476.74 L737.17,475.11 L735.60,473.48 L734.05,471.85 L732.51,470.22 L730.99,468.59 L729.47,466.96 L727.97,465.34 L726.48,463.71 L725.01,462.08 L723.55,460.45 L722.10,458.82 L720.67,457.19 L719.25,455.57 L717.84,453.94 L716.45,452.31 L715.07,450.68 L713.71,449.05 L712.36,447.42 L711.03,445.79 L709.71,444.17 L708.40,442.54 L707.11,440.91 L705.84,439.28 L704.58,437.65 L703.33,436.02 L702.10,434.39 L700.89,432.77 L699.69,431.14 L698.50,429.51 L697.33,427.88 L696.18,426.25 L695.04,424.62 L693.92,423.00 L692.82,421.37 L691.73,419.74 L690.65,418.11 L689.59,416.48 L688.55,414.85 L687.53,413.22 L686.52,411.60 L685.53,409.97 L684.55,408.34 L683.59,406.71 L682.65,405.08 L681.72,403.45 L680.81,401.82 L679.92,400.20 L679.04,398.57 L678.19,396.94 L677.34,395.31 L676.52,393.68 L675.71,392.05 L674.92,390.43 L674.15,388.80 L673.39,387.17 L672.66,385.54 L671.94,383.91 L671.23,382.28 L670.55,380.65 L669.88,379.03 L669.23,377.40 L668.60,375.77 L667.98,374.14 L667.39,372.51 L666.81,370.88 L666.25,369.25 L665.71,367.63 L665.18,366.00 L664.67,364.37 L664.19,362.74 L663.72,361.11 L663.26,359.48 L662.83,357.86 L662.41,356.23 L662.02,354.60 L661.64,352.97 L661.28,351.34 L660.93,349.71 L660.61,348.08 L660.30,346.46 L660.01,344.83 L659.75,343.20 L659.50,341.57 L659.26,339.94 L659.05,338.31 L658.85,336.69 L658.68,335.06 L658.52,333.43 L658.38,331.80 L658.26,330.17 L658.16,328.54 L658.07,326.91 L658.01,325.29 L657.96,323.66 L657.93,322.03 L657.93,320.40 L657.93,318.77 L657.96,317.14 L658.01,315.51 L658.07,313.89 L658.16,312.26 L658.26,310.63 L658.38,309.00 L658.52,307.37 L658.68,305.74 L658.85,304.11 L659.05,302.49 L659.26,300.86 L659.50,299.23 L659.75,297.60 L660.01,295.97 L660.30,294.34 L660.61,292.72 L660.93,291.09 L661.28,289.46 L661.64,287.83 L662.02,286.20 L662.41,284.57 L662.83,282.94 L663.26,281.32 L663.72,279.69 L664.19,278.06 L664.67,276.43 L665.18,274.80 L665.71,273.17 L666.25,271.54 L666.81,269.92 L667.39,268.29 L667.98,266.66 L668.60,265.03 L669.23,263.40 L669.88,261.77 L670.55,260.15 L671.23,258.52 L671.94,256.89 L672.66,255.26 L673.39,253.63 L674.15,252.00 L674.92,250.37 L675.71,248.75 L676.52,247.12 L677.34,245.49 L678.19,243.86 L679.04,242.23 L679.92,240.60 L680.81,238.97 L681.72,237.35 L682.65,235.72 L683.59,234.09 L684.55,232.46 L685.53,230.83 L686.52,229.20 L687.53,227.58 L688.55,225.95 L689.59,224.32 L690.65,222.69 L691.73,221.06 L692.82,219.43 L693.92,217.80 L695.04,216.18 L696.18,214.55 L697.33,212.92 L698.50,211.29 L699.69,209.66 L700.89,208.03 L702.10,206.40 L703.33,204.78 L704.58,203.15 L705.84,201.52 L707.11,199.89 L708.40,198.26 L709.71,196.63 L711.03,195.01 L712.36,193.38 L713.71,191.75 L715.07,190.12 L716.45,188.49 L717.84,186.86 L719.25,185.23 L720.67,183.61 L722.10,181.98 L723.55,180.35 L725.01,178.72 L726.48,177.09 L727.97,175.46 L729.47,173.83 L730.99,172.21 L732.51,170.58 L734.05,168.95 L735.60,167.32 L737.17,165.69 L738.75,164.06 L740.34,162.44 L741.94,160.81 L743.56,159.18 L745.18,157.55 L746.82,155.92 L748.47,154.29 L750.14,152.66 L751.81,151.04 L753.49,149.41 L755.19,147.78 L756.90,146.15 L758.62,144.52 L760.35,142.89 L762.09,141.26 L763.84,139.64 L765.60,138.01 L767.38,136.38 L769.16,134.75 L770.95,133.12 L772.75,131.49 L774.57,129.87 L776.39,128.24 L778.22,126.61 L780.06,124.98 L781.91,123.35 L783.77,121.72 L785.64,120.09 L787.52,118.47 L789.41,116.84 L791.30,115.21 L793.21,113.58 L795.12,111.95 L797.04,110.32 L798.96,108.69 L800.90,107.07 L802.84,105.44 L804.80,103.81 L806.75,102.18 L808.72,100.55 L810.69,98.92 L812.67,97.30 L814.66,95.67 L816.65,94.04 L818.65,92.41 L820.66,90.78 L822.67,89.15 L824.69,87.52 L826.71,85.90 L828.75,84.27 L830.78,82.64 L832.82,81.01 L834.87,79.38 L836.92,77.75 L838.98,76.12 L841.04,74.50 L843.10,72.87 L845.18,71.24 L847.25,69.61 L849.33,67.98 L851.41,66.35 L853.50,64.73 L855.59,63.10 L857.68,61.47 L859.78,59.84 L861.88,58.21 L863.99,56.58 L866.09,54.95 L868.20,53.33 L870.32,51.70 L872.43,50.07 L874.55,48.44 L876.67,46.81 L878.79,45.18 L880.91,43.55 L883.03,41.93 L885.16,40.30 L887.29,38.67 L889.42,37.04 L891.54,35.41 L893.67,33.78 L895.81,32.16 L897.94,30.53 L900.07,28.90"/>
<path d="M902.20,613.53 L900.49,611.90 L898.79,610.27 L897.08,608.64 L895.38,607.02 L893.68,605.39 L891.97,603.76 L890.27,602.13 L888.57,600.50 L886.87,598.87 L885.17,597.25 L883.47,595.62 L881.77,593.99 L880.08,592.36 L878.38,590.73 L876.69,589.10 L875.00,587.47 L873.32,585.85 L871.63,584.22 L869.95,582.59 L868.27,580.96 L866.59,579.33 L864.91,577.70 L863.24,576.07 L861.57,574.45 L859.90,572.82 L858.24,571.19 L856.58,569.56 L854.92,567.93 L853.27,566.30 L851.62,564.67 L849.98,563.05 L848.33,561.42 L846.70,559.79 L845.06,558.16 L843.44,556.53 L841.81,554.90 L840.19,553.28 L838.58,551.65 L836.97,550.02 L835.36,548.39 L833.76,546.76 L832.17,545.13 L830.58,543.50 L828.99,541.88 L827.42,540.25 L825.84,538.62 L824.28,536.99 L822.72,535.36 L821.16,533.73 L819.61,532.11 L818.07,530.48 L816.53,528.85 L815.00,527.22 L813.48,525.59 L811.97,523.96 L810.46,522.33 L808.95,520.71 L807.46,519.08 L805.97,517.45 L804.49,515.82 L803.02,514.19 L801.55,512.56 L800.09,510.93 L798.64,509.31 L797.20,507.68 L795.77,506.05 L794.34,504.42 L792.92,502.79 L791.51,501.16 L790.11,499.53 L788.72,497.91 L787.34,496.28 L785.96,494.65 L784.59,493.02 L783.24,491.39 L781.89,489.76 L780.55,488.14 L779.22,486.51 L777.90,484.88 L776.59,483.25 L775.28,481.62 L773.99,479.99 L772.71,478.36 L771.44,476.74 L770.18,475.11 L768.92,473.48 L767.68,471.85 L766.45,470.22 L765.23,468.59 L764.02,466.96 L762.82,465.34 L761.63,463.71 L760.45,462.08 L759.28,460.45 L758.12,458.82 L756.97,457.19 L755.84,455.57 L754.71,453.94 L753.60,452.31 L752.50,450.68 L751.41,449.05 L750.33,447.42 L749.26,445.79 L748.21,444.17 L747.16,442.54 L746.13,440.91 L745.11,439.28 L744.10,437.65 L743.11,436.02 L742.12,434.39 L741.15,432.77 L740.19,431.14 L739.24,429.51 L738.31,427.88 L737.38,426.25 L736.47,424.62 L735.58,423.00 L734.69,421.37 L733.82,419.74 L732.96,418.11 L732.12,416.48 L731.28,414.85 L730.46,413.22 L729.65,411.60 L728.86,409.97 L728.08,408.34 L727.31,406.71 L726.56,405.08 L725.82,403.45 L725.09,401.82 L724.38,400.20 L723.67,398.57 L722.99,396.94 L722.31,395.31 L721.66,393.68 L721.01,392.05 L720.38,390.43 L719.76,388.80 L719.16,387.17 L718.57,385.54 L717.99,383.91 L717.43,382.28 L716.88,380.65 L716.34,379.03 L715.82,377.40 L715.32,375.77 L714.83,374.14 L714.35,372.51 L713.89,370.88 L713.44,369.25 L713.00,367.63 L712.58,366.00 L712.18,364.37 L711.79,362.74 L711.41,361.11 L711.05,359.48 L710.70,357.86 L710.37,356.23 L710.05,354.60 L709.75,352.97 L709.46,351.34 L709.19,349.71 L708.93,348.08 L708.68,346.46 L708.45,344.83 L708.24,343.20 L708.04,341.57 L707.85,339.94 L707.68,338.31 L707.52,336.69 L707.38,335.06 L707.26,333.43 L707.14,331.80 L707.05,330.17 L706.97,328.54 L706.90,326.91 L706.85,325.29 L706.81,323.66 L706.79,322.03 L706.78,320.40 L706.79,318.77 L706.81,317.14 L706.85,315.51 L706.90,313.89 L706.97,312.26 L707.05,310.63 L707.14,309.00 L707.26,307.37 L707.38,305.74 L707.52,304.11 L707.68,302.49 L707.85,300.86 L708.04,299.23 L708.24,297.60 L708.45,295.97 L708.68,294.34 L708.93,292.72 L709.19,291.09 L709.46,289.46 L709.75,287.83 L710.05,286.20 L710.37,284.57 L710.70,282.94 L711.05,281.32 L711.41,279.69 L711.79,278.06 L712.18,276.43 L712.58,274.80 L713.00,273.17 L713.44,271.54 L713.89,269.92 L714.35,268.29 L714.83,266.66 L715.32,265.03 L715.82,263.40 L716.34,261.77 L716.88,260.15 L717.43,258.52 L717.99,256.89 L718.57,255.26 L719.16,253.63 L719.76,252.00 L720.38,250.37 L721.01,248.75 L721.66,247.12 L722.31,245.49 L722.99,243.86 L723.67,242.23 L724.38,240.60 L725.09,238.97 L725.82,237.35 L726.56,235.72 L727.31,234.09 L728.08,232.46 L728.86,230.83 L729.65,229.20 L730.46,227.58 L731.28,225.95 L732.12,224.32 L732.96,222.69 L733.82,221.06 L734.69,219.43 L735.58,217.80 L736.47,216.18 L737.38,214.55 L738.31,212.92 L739.24,211.29 L740.19,209.66 L741.15,208.03 L742.12,206.40 L743.11,204.78 L744.10,203.15 L745.11,201.52 L746.13,199.89 L747.16,198.26 L748.21,196.63 L749.26,195.01 L750.33,193.38 L751.41,191.75 L752.50,190.12 L753.60,188.49 L754.71,186.86 L755.84,185.23 L756.97,183.61 L758.12,181.98 L759.28,180.35 L760.45,178.72 L761.63,177.09 L762.82,175.46 L764.02,173.83 L765.23,172.21 L766.45,170.58 L767.68,168.95 L768.92,167.32 L770.18,165.69 L771.44,164.06 L772.71,162.44 L773.99,160.81 L775.28,159.18 L776.59,157.55 L777.90,155.92 L779.22,154.29 L780.55,152.66 L781.89,151.04 L783.24,149.41 L784.59,147.78 L785.96,146.15 L787.34,144.52 L788.72,142.89 L790.11,141.26 L791.51,139.64 L792.92,138.01 L794.34,136.38 L795.77,134.75 L797.20,133.12 L798.64,131.49 L800.09,129.87 L801.55,128.24 L803.02,126.61 L804.49,124.98 L805.97,123.35 L807.46,121.72 L808.95,120.09 L810.46,118.47 L811.97,116.84 L813.48,115.21 L815.00,113.58 L816.53,111.95 L818.07,110.32 L819.61,108.69 L821.16,107.07 L822.72,105.44 L824.28,103.81 L825.84,102.18 L827.42,100.55 L828.99,98.92 L830.58,97.30 L832.17,95.67 L833.76,94.04 L835.36,92.41 L836.97,90.78 L838.58,89.15 L840.19,87.52 L841.81,85.90 L843.44,84.27 L845.06,82.64 L846.70,81.01 L848.33,79.38 L849.98,77.75 L851.62,76.12 L853.27,74.50 L854.92,72.87 L856.58,71.24 L858.24,69.61 L859.90,67.98 L861.57,66.35 L863.24,64.73 L864.91,63.10 L866.59,61.47 L868.27,59.84 L869.95,58.21 L871.63,56.58 L873.32,54.95 L875.00,53.33 L876.69,51.70 L878.38,50.07 L880.08,48.44 L881.77,46.81 L883.47,45.18 L885.17,43.55 L886.87,41.93 L888.57,40.30 L890.27,38.67 L891.97,37.04 L893.68,35.41 L895.38,33.78 L897.08,32.16 L898.79,30.53 L900.49,28.90"/>
<path d="M902.20,613.53 L900.92,611.90 L899.64,610.27 L898.36,608.64 L897.08,607.02 L895.81,605.39 L894.53,603.76 L893.25,602.13 L891.98,600.50 L890.70,598.87 L889.43,597.25 L888.15,595.62 L886.88,593.99 L885.61,592.36 L884.34,590.73 L883.07,589.10 L881.80,587.47 L880.54,585.85 L879.27,584.22 L878.01,582.59 L876.75,580.96 L875.49,579.33 L874.23,577.70 L872.98,576.07 L871.73,574.45 L870.48,572.82 L869.23,571.19 L867.99,569.56 L866.74,567.93 L865.50,566.30 L864.27,564.67 L863.03,563.05 L861.80,561.42 L860.57,559.79 L859.35,558.16 L858.13,556.53 L856.91,554.90 L855.69,553.28 L854.48,551.65 L853.28,550.02 L852.07,548.39 L850.87,546.76 L849.68,545.13 L848.48,543.50 L847.30,541.88 L846.11,540.25 L844.93,538.62 L843.76,536.99 L842.59,535.36 L841.42,533.73 L840.26,532.11 L839.10,530.48 L837.95,528.85 L836.80,527.22 L835.66,525.59 L834.52,523.96 L833.39,522.33 L832.27,520.71 L831.14,519.08 L830.03,517.45 L828.92,515.82 L827.81,514.19 L826.71,512.56 L825.62,510.93 L824.53,509.31 L823.45,507.68 L822.37,506.05 L821.31,504.42 L820.24,502.79 L819.18,501.16 L818.13,499.53 L817.09,497.91 L816.05,496.28 L815.02,494.65 L813.99,493.02 L812.98,491.39 L811.97,489.76 L810.96,488.14 L809.96,486.51 L808.97,484.88 L807.99,483.25 L807.01,481.62 L806.04,479.99 L805.08,478.36 L804.13,476.74 L803.18,475.11 L802.24,473.48 L801.31,471.85 L800.39,470.22 L799.47,468.59 L798.56,466.96 L797.66,465.34 L796.77,463.71 L795.89,462.08 L795.01,460.45 L794.14,458.82 L793.28,457.19 L792.43,455.57 L791.59,453.94 L790.75,452.31 L789.92,450.68 L789.11,449.05 L788.30,447.42 L787.50,445.79 L786.71,444.17 L785.92,442.54 L785.15,440.91 L784.38,439.28 L783.63,437.65 L782.88,436.02 L782.14,434.39 L781.41,432.77 L780.69,431.14 L779.98,429.51 L779.28,427.88 L778.59,426.25 L777.91,424.62 L777.23,423.00 L776.57,421.37 L775.92,419.74 L775.27,418.11 L774.64,416.48 L774.01,414.85 L773.40,413.22 L772.79,411.60 L772.20,409.97 L771.61,408.34 L771.03,406.71 L770.47,405.08 L769.91,403.45 L769.37,401.82 L768.83,400.20 L768.31,398.57 L767.79,396.94 L767.29,395.31 L766.79,393.68 L766.31,392.05 L765.83,390.43 L765.37,388.80 L764.92,387.17 L764.47,385.54 L764.04,383.91 L763.62,382.28 L763.21,380.65 L762.81,379.03 L762.42,377.40 L762.04,375.77 L761.67,374.14 L761.31,372.51 L760.97,370.88 L760.63,369.25 L760.30,367.63 L759.99,366.00 L759.68,364.37 L759.39,362.74 L759.11,361.11 L758.84,359.48 L758.58,357.86 L758.33,356.23 L758.09,354.60 L757.86,352.97 L757.65,351.34 L757.44,349.71 L757.24,348.08 L757.06,346.46 L756.89,344.83 L756.73,343.20 L756.58,341.57 L756.44,339.94 L756.31,338.31 L756.19,336.69 L756.09,335.06 L755.99,333.43 L755.91,331.80 L755.84,330.17 L755.77,328.54 L755.72,326.91 L755.69,325.29 L755.66,323.66 L755.64,322.03 L755.63,320.40 L755.64,318.77 L755.66,317.14 L755.69,315.51 L755.72,313.89 L755.77,312.26 L755.84,310.63 L755.91,309.00 L755.99,307.37 L756.09,305.74 L756.19,304.11 L756.31,302.49 L756.44,300.86 L756.58,299.23 L756.73,297.60 L756.89,295.97 L757.06,294.34 L757.24,292.72 L757.44,291.09 L757.65,289.46 L757.86,287.83 L758.09,286.20 L758.33,284.57 L758.58,282.94 L758.84,281.32 L759.11,279.69 L759.39,278.06 L759.68,276.43 L759.99,274.80 L760.30,273.17 L760.63,271.54 L760.97,269.92 L761.31,268.29 L761.67,266.66 L762.04,265.03 L762.42,263.40 L762.81,261.77 L763.21,260.15 L763.62,258.52 L764.04,256.89 L764.47,255.26 L764.92,253.63 L765.37,252.00 L765.83,250.37 L766.31,248.75 L766.79,247.12 L767.29,245.49 L767.79,243.86 L768.31,242.23 L768.83,240.60 L769.37,238.97 L769.91,237.35 L770.47,235.72 L771.03,234.09 L771.61,232.46 L772.20,230.83 L772.79,229.20 L773.40,227.58 L774.01,225.95 L774.64,224.32 L775.27,222.69 L775.92,221.06 L776.57,219.43 L777.23,217.80 L777.91,216.18 L778.59,214.55 L779.28,212.92 L779.98,211.29 L780.69,209.66 L781.41,208.03 L782.14,206.40 L782.88,204.78 L783.63,203.15 L784.38,201.52 L785.15,199.89 L785.92,198.26 L786.71,196.63 L787.50,195.01 L788.30,193.38 L789.11,191.75 L789.92,190.12 L790.75,188.49 L791.59,186.86 L792.43,185.23 L793.28,183.61 L794.14,181.98 L795.01,180.35 L795.89,178.72 L796.77,177.09 L797.66,175.46 L798.56,173.83 L799.47,172.21 L800.39,170.58 L801.31,168.95 L802.24,167.32 L803.18,165.69 L804.13,164.06 L805.08,162.44 L806.04,160.81 L807.01,159.18 L807.99,157.55 L808.97,155.92 L809.96,154.29 L810.96,152.66 L811.97,151.04 L812.98,149.41 L813.99,147.78 L815.02,146.15 L816.05,144.52 L817.09,142.89 L818.13,141.26 L819.18,139.64 L820.24,138.01 L821.31,136.38 L822.37,134.75 L823.45,133.12 L824.53,131.49 L825.62,129.87 L826.71,128.24 L827.81,126.61 L828.92,124.98 L830.03,123.35 L831.14,121.72 L832.27,120.09 L833.39,118.47 L834.52,116.84 L835.66,115.21 L836.80,113.58 L837.95,111.95 L839.10,110.32 L840.26,108.69 L841.42,107.07 L842.59,105.44 L843.76,103.81 L844.93,102.18 L846.11,100.55 L847.30,98.92 L848.48,97.30 L849.68,95.67 L850.87,94.04 L852.07,92.41 L853.28,90.78 L854.48,89.15 L855.69,87.52 L856.91,85.90 L858.13,84.27 L859.35,82.64 L860.57,81.01 L861.80,79.38 L863.03,77.75 L864.27,76.12 L865.50,74.50 L866.74,72.87 L867.99,71.24 L869.23,69.61 L870.48,67.98 L871.73,66.35 L872.98,64.73 L874.23,63.10 L875.49,61.47 L876.75,59.84 L878.01,58.21 L879.27,56.58 L880.54,54.95 L881.80,53.33 L883.07,51.70 L884.34,50.07 L885.61,48.44 L886.88,46.81 L888.15,45.18 L889.43,43.55 L890.70,41.93 L891.98,40.30 L893.25,38.67 L894.53,37.04 L895.81,35.41 L897.08,33.78 L898.36,32.16 L899.64,30.53 L900.92,28.90"/>
<path d="M902.20,613.53 L901.35,611.90 L900.49,610.27 L899.64,608.64 L898.79,607.02 L897.94,605.39 L897.09,603.76 L896.23,602.13 L895.38,600.50 L894.53,598.87 L893.68,597.25 L892.83,595.62 L891.99,593.99 L891.14,592.36 L890.29,590.73 L889.45,589.10 L888.60,587.47 L887.76,585.85 L886.91,584.22 L886.07,582.59 L885.23,580.96 L884.39,579.33 L883.56,577.70 L882.72,576.07 L881.88,574.45 L881.05,572.82 L880.22,571.19 L879.39,569.56 L878.56,567.93 L877.74,566.30 L876.91,564.67 L876.09,563.05 L875.27,561.42 L874.45,559.79 L873.63,558.16 L872.82,556.53 L872.01,554.90 L871.20,553.28 L870.39,551.65 L869.58,550.02 L868.78,548.39 L867.98,546.76 L867.18,545.13 L866.39,543.50 L865.60,541.88 L864.81,540.25 L864.02,538.62 L863.24,536.99 L862.46,535.36 L861.68,533.73 L860.91,532.11 L860.13,530.48 L859.37,528.85 L858.60,527.22 L857.84,525.59 L857.08,523.96 L856.33,522.33 L855.58,520.71 L854.83,519.08 L854.09,517.45 L853.35,515.82 L852.61,514.19 L851.88,512.56 L851.15,510.93 L850.42,509.31 L849.70,507.68 L848.98,506.05 L848.27,504.42 L847.56,502.79 L846.86,501.16 L846.16,499.53 L845.46,497.91 L844.77,496.28 L844.08,494.65 L843.40,493.02 L842.72,491.39 L842.04,489.76 L841.37,488.14 L840.71,486.51 L840.05,484.88 L839.39,483.25 L838.74,481.62 L838.10,479.99 L837.46,478.36 L836.82,476.74 L836.19,475.11 L835.56,473.48 L834.94,471.85 L834.32,470.22 L833.71,468.59 L833.11,466.96 L832.51,465.34 L831.91,463.71 L831.32,462.08 L830.74,460.45 L830.16,458.82 L829.59,457.19 L829.02,455.57 L828.46,453.94 L827.90,452.31 L827.35,450.68 L826.80,449.05 L826.27,447.42 L825.73,445.79 L825.20,444.17 L824.68,442.54 L824.17,440.91 L823.66,439.28 L823.15,437.65 L822.65,436.02 L822.16,434.39 L821.67,432.77 L821.19,431.14 L820.72,429.51 L820.25,427.88 L819.79,426.25 L819.34,424.62 L818.89,423.00 L818.45,421.37 L818.01,419.74 L817.58,418.11 L817.16,416.48 L816.74,414.85 L816.33,413.22 L815.93,411.60 L815.53,409.97 L815.14,408.34 L814.76,406.71 L814.38,405.08 L814.01,403.45 L813.64,401.82 L813.29,400.20 L812.94,398.57 L812.59,396.94 L812.26,395.31 L811.93,393.68 L811.60,392.05 L811.29,390.43 L810.98,388.80 L810.68,387.17 L810.38,385.54 L810.09,383.91 L809.81,382.28 L809.54,380.65 L809.27,379.03 L809.01,377.40 L808.76,375.77 L808.51,374.14 L808.28,372.51 L808.04,370.88 L807.82,369.25 L807.60,367.63 L807.39,366.00 L807.19,364.37 L806.99,362.74 L806.81,361.11 L806.63,359.48 L806.45,357.86 L806.29,356.23 L806.13,354.60 L805.97,352.97 L805.83,351.34 L805.69,349.71 L805.56,348.08 L805.44,346.46 L805.33,344.83 L805.22,343.20 L805.12,341.57 L805.03,339.94 L804.94,338.31 L804.86,336.69 L804.79,335.06 L804.73,333.43 L804.67,331.80 L804.62,330.17 L804.58,328.54 L804.55,326.91 L804.52,325.29 L804.50,323.66 L804.49,322.03 L804.49,320.40 L804.49,318.77 L804.50,317.14 L804.52,315.51 L804.55,313.89 L804.58,312.26 L804.62,310.63 L804.67,309.00 L804.73,307.37 L804.79,305.74 L804.86,304.11 L804.94,302.49 L805.03,300.86 L805.12,299.23 L805.22,297.60 L805.33,295.97 L805.44,294.34 L805.56,292.72 L805.69,291.09 L805.83,289.46 L805.97,287.83 L806.13,286.20 L806.29,284.57 L806.45,282.94 L806.63,281.32 L806.81,279.69 L806.99,278.06 L807.19,276.43 L807.39,274.80 L807.60,273.17 L807.82,271.54 L808.04,269.92 L808.28,268.29 L808.51,266.66 L808.76,265.03 L809.01,263.40 L809.27,261.77 L809.54,260.15 L809.81,258.52 L810.09,256.89 L810.38,255.26 L810.68,253.63 L810.98,252.00 L811.29,250.37 L811.60,248.75 L811.93,247.12 L812.26,245.49 L812.59,243.86 L812.94,242.23 L813.29,240.60 L813.64,238.97 L814.01,237.35 L814.38,235.72 L814.76,234.09 L815.14,232.46 L815.53,230.83 L815.93,229.20 L816.33,227.58 L816.74,225.95 L817.16,224.32 L817.58,222.69 L818.01,221.06 L818.45,219.43 L818.89,217.80 L819.34,216.18 L819.79,214.55 L820.25,212.92 L820.72,211.29 L821.19,209.66 L821.67,208.03 L822.16,206.40 L822.65,204.78 L823.15,203.15 L823.66,201.52 L824.17,199.89 L824.68,198.26 L825.20,196.63 L825.73,195.01 L826.27,193.38 L826.80,191.75 L827.35,190.12 L827.90,188.49 L828.46,186.86 L829.02,185.23 L829.59,183.61 L830.16,181.98 L830.74,180.35 L831.32,178.72 L831.91,177.09 L832.51,175.46 L833.11,173.83 L833.71,172.21 L834.32,170.58 L834.94,168.95 L835.56,167.32 L836.19,165.69 L836.82,164.06 L837.46,162.44 L838.10,160.81 L838.74,159.18 L839.39,157.55 L840.05,155.92 L840.71,154.29 L841.37,152.66 L842.04,151.04 L842.72,149.41 L843.40,147.78 L844.08,146.15 L844.77,144.52 L845.46,142.89 L846.16,141.26 L846.86,139.64 L847.56,138.01 L848.27,136.38 L848.98,134.75 L849.70,133.12 L850.42,131.49 L851.15,129.87 L851.88,128.24 L852.61,126.61 L853.35,124.98 L854.09,123.35 L854.83,121.72 L855.58,120.09 L856.33,118.47 L857.08,116.84 L857.84,115.21 L858.60,113.58 L859.37,111.95 L860.13,110.32 L860.91,108.69 L861.68,107.07 L862.46,105.44 L863.24,103.81 L864.02,102.18 L864.81,100.55 L865.60,98.92 L866.39,97.30 L867.18,95.67 L867.98,94.04 L868.78,92.41 L869.58,90.78 L870.39,89.15 L871.20,87.52 L872.01,85.90 L872.82,84.27 L873.63,82.64 L874.45,81.01 L875.27,79.38 L876.09,77.75 L876.91,76.12 L877.74,74.50 L878.56,72.87 L879.39,71.24 L880.22,69.61 L881.05,67.98 L881.88,66.35 L882.72,64.73 L883.56,63.10 L884.39,61.47 L885.23,59.84 L886.07,58.21 L886.91,56.58 L887.76,54.95 L888.60,53.33 L889.45,51.70 L890.29,50.07 L891.14,48.44 L891.99,46.81 L892.83,45.18 L893.68,43.55 L894.53,41.93 L895.38,40.30 L896.23,38.67 L897.09,37.04 L897.94,35.41 L898.79,33.78 L899.64,32.16 L900.49,30.53 L901.35,28.90"/>
<path d="M902.20,613.53 L901.77,611.90 L901.35,610.27 L900.92,608.64 L900.49,607.02 L900.07,605.39 L899.64,603.76 L899.22,602.13 L898.79,600.50 L898.37,598.87 L897.94,597.25 L897.52,595.62 L897.09,593.99 L896.67,592.36 L896.25,590.73 L895.82,589.10 L895.40,587.47 L894.98,585.85 L894.56,584.22 L894.14,582.59 L893.72,580.96 L893.30,579.33 L892.88,577.70 L892.46,576.07 L892.04,574.45 L891.63,572.82 L891.21,571.19 L890.80,569.56 L890.38,567.93 L889.97,566.30 L889.56,564.67 L889.14,563.05 L888.73,561.42 L888.32,559.79 L887.92,558.16 L887.51,556.53 L887.10,554.90 L886.70,553.28 L886.29,551.65 L885.89,550.02 L885.49,548.39 L885.09,546.76 L884.69,545.13 L884.29,543.50 L883.90,541.88 L883.50,540.25 L883.11,538.62 L882.72,536.99 L882.33,535.36 L881.94,533.73 L881.55,532.11 L881.17,530.48 L880.78,528.85 L880.40,527.22 L880.02,525.59 L879.64,523.96 L879.26,522.33 L878.89,520.71 L878.51,519.08 L878.14,517.45 L877.77,515.82 L877.40,514.19 L877.04,512.56 L876.67,510.93 L876.31,509.31 L875.95,507.68 L875.59,506.05 L875.24,504.42 L874.88,502.79 L874.53,501.16 L874.18,499.53 L873.83,497.91 L873.48,496.28 L873.14,494.65 L872.80,493.02 L872.46,491.39 L872.12,489.76 L871.79,488.14 L871.45,486.51 L871.12,484.88 L870.80,483.25 L870.47,481.62 L870.15,479.99 L869.83,478.36 L869.51,476.74 L869.19,475.11 L868.88,473.48 L868.57,471.85 L868.26,470.22 L867.96,468.59 L867.65,466.96 L867.35,465.34 L867.06,463.71 L866.76,462.08 L866.47,460.45 L866.18,458.82 L865.89,457.19 L865.61,455.57 L865.33,453.94 L865.05,452.31 L864.77,450.68 L864.50,449.05 L864.23,447.42 L863.97,445.79 L863.70,444.17 L863.44,442.54 L863.18,440.91 L862.93,439.28 L862.68,437.65 L862.43,436.02 L862.18,434.39 L861.94,432.77 L861.70,431.14 L861.46,429.51 L861.23,427.88 L861.00,426.25 L860.77,424.62 L860.54,423.00 L860.32,421.37 L860.11,419.74 L859.89,418.11 L859.68,416.48 L859.47,414.85 L859.27,413.22 L859.06,411.60 L858.87,409.97 L858.67,408.34 L858.48,406.71 L858.29,405.08 L858.10,403.45 L857.92,401.82 L857.74,400.20 L857.57,398.57 L857.40,396.94 L857.23,395.31 L857.06,393.68 L856.90,392.05 L856.74,390.43 L856.59,388.80 L856.44,387.17 L856.29,385.54 L856.15,383.91 L856.01,382.28 L855.87,380.65 L855.74,379.03 L855.61,377.40 L855.48,375.77 L855.36,374.14 L855.24,372.51 L855.12,370.88 L855.01,369.25 L854.90,367.63 L854.80,366.00 L854.69,364.37 L854.60,362.74 L854.50,361.11 L854.41,359.48 L854.33,357.86 L854.24,356.23 L854.16,354.60 L854.09,352.97 L854.02,351.34 L853.95,349.71 L853.88,348.08 L853.82,346.46 L853.76,344.83 L853.71,343.20 L853.66,341.57 L853.61,339.94 L853.57,338.31 L853.53,336.69 L853.50,335.06 L853.46,333.43 L853.44,331.80 L853.41,330.17 L853.39,328.54 L853.37,326.91 L853.36,325.29 L853.35,323.66 L853.35,322.03 L853.35,320.40 L853.35,318.77 L853.35,317.14 L853.36,315.51 L853.37,313.89 L853.39,312.26 L853.41,310.63 L853.44,309.00 L853.46,307.37 L853.50,305.74 L853.53,304.11 L853.57,302.49 L853.61,300.86 L853.66,299.23 L853.71,297.60 L853.76,295.97 L853.82,294.34 L853.88,292.72 L853.95,291.09 L854.02,289.46 L854.09,287.83 L854.16,286.20 L854.24,284.57 L854.33,282.94 L854.41,281.32 L854.50,279.69 L854.60,278.06 L854.69,276.43 L854.80,274.80 L854.90,273.17 L855.01,271.54 L855.12,269.92 L855.24,268.29 L855.36,266.66 L855.48,265.03 L855.61,263.40 L855.74,261.77 L855.87,260.15 L856.01,258.52 L856.15,256.89 L856.29,255.26 L856.44,253.63 L856.59,252.00 L856.74,250.37 L856.90,248.75 L857.06,247.12 L857.23,245.49 L857.40,243.86 L857.57,242.23 L857.74,240.60 L857.92,238.97 L858.10,237.35 L858.29,235.72 L858.48,234.09 L858.67,232.46 L858.87,230.83 L859.06,229.20 L859.27,227.58 L859.47,225.95 L859.68,224.32 L859.89,222.69 L860.11,221.06 L860.32,219.43 L860.54,217.80 L860.77,216.18 L861.00,214.55 L861.23,212.92 L861.46,211.29 L861.70,209.66 L861.94,208.03 L862.18,206.40 L862.43,204.78 L862.68,203.15 L862.93,201.52 L863.18,199.89 L863.44,198.26 L863.70,196.63 L863.97,195.01 L864.23,193.38 L864.50,191.75 L864.77,190.12 L865.05,188.49 L865.33,186.86 L865.61,185.23 L865.89,183.61 L866.18,181.98 L866.47,180.35 L866.76,178.72 L867.06,177.09 L867.35,175.46 L867.65,173.83 L867.96,172.21 L868.26,170.58 L868.57,168.95 L868.88,167.32 L869.19,165.69 L869.51,164.06 L869.83,162.44 L870.15,160.81 L870.47,159.18 L870.80,157.55 L871.12,155.92 L871.45,154.29 L871.79,152.66 L872.12,151.04 L872.46,149.41 L872.80,147.78 L873.14,146.15 L873.48,144.52 L873.83,142.89 L874.18,141.26 L874.53,139.64 L874.88,138.01 L875.24,136.38 L875.59,134.75 L875.95,133.12 L876.31,131.49 L876.67,129.87 L877.04,128.24 L877.40,126.61 L877.77,124.98 L878.14,123.35 L878.51,121.72 L878.89,120.09 L879.26,118.47 L879.64,116.84 L880.02,115.21 L880.40,113.58 L880.78,111.95 L881.17,110.32 L881.55,108.69 L881.94,107.07 L882.33,105.44 L882.72,103.81 L883.11,102.18 L883.50,100.55 L883.90,98.92 L884.29,97.30 L884.69,95.67 L885.09,94.04 L885.49,92.41 L885.89,90.78 L886.29,89.15 L886.70,87.52 L887.10,85.90 L887.51,84.27 L887.92,82.64 L888.32,81.01 L888.73,79.38 L889.14,77.75 L889.56,76.12 L889.97,74.50 L890.38,72.87 L890.80,71.24 L891.21,69.61 L891.63,67.98 L892.04,66.35 L892.46,64.73 L892.88,63.10 L893.30,61.47 L893.72,59.84 L894.14,58.21 L894.56,56.58 L894.98,54.95 L895.40,53.33 L895.82,51.70 L896.25,50.07 L896.67,48.44 L897.09,46.81 L897.52,45.18 L897.94,43.55 L898.37,41.93 L898.79,40.30 L899.22,38.67 L899.64,37.04 L900.07,35.41 L900.49,33.78 L900.92,32.16 L901.35,30.53 L901.77,28.90"/>
<path d="M902.20,613.53 L902.20,611.90 L902.20,610.27 L902.20,608.64 L902.20,607.02 L902.20,605.39 L902.20,603.76 L902.20,602.13 L902.20,600.50 L902.20,598.87 L902.20,597.25 L902.20,595.62 L902.20,593.99 L902.20,592.36 L902.20,590.73 L902.20,589.10 L902.20,587.47 L902.20,585.85 L902.20,584.22 L902.20,582.59 L902.20,580.96 L902.20,579.33 L902.20,577.70 L902.20,576.07 L902.20,574.45 L902.20,572.82 L902.20,571.19 L902.20,569.56 L902.20,567.93 L902.20,566.30 L902.20,564.67 L902.20,563.05 L902.20,561.42 L902.20,559.79 L902.20,558.16 L902.20,556.53 L902.20,554.90 L902.20,553.28 L902.20,551.65 L902.20,550.02 L902.20,548.39 L902.20,546.76 L902.20,545.13 L902.20,543.50 L902.20,541.88 L902.20,540.25 L902.20,538.62 L902.20,536.99 L902.20,535.36 L902.20,533.73 L902.20,532.11 L902.20,530.48 L902.20,528.85 L902.20,527.22 L902.20,525.59 L902.20,523.96 L902.20,522.33 L902.20,520.71 L902.20,519.08 L902.20,517.45 L902.20,515.82 L902.20,514.19 L902.20,512.56 L902.20,510.93 L902.20,509.31 L902.20,507.68 L902.20,506.05 L902.20,504.42 L902.20,502.79 L902.20,501.16 L902.20,499.53 L902.20,497.91 L902.20,496.28 L902.20,494.65 L902.20,493.02 L902.20,491.39 L902.20,489.76 L902.20,488.14 L902.20,486.51 L902.20,484.88 L902.20,483.25 L902.20,481.62 L902.20,479.99 L902.20,478.36 L902.20,476.74 L902.20,475.11 L902.20,473.48 L902.20,471.85 L902.20,470.22 L902.20,468.59 L902.20,466.96 L902.20,465.34 L902.20,463.71 L902.20,462.08 L902.20,460.45 L902.20,458.82 L902.20,457.19 L902.20,455.57 L902.20,453.94 L902.20,452.31 L902.20,450.68 L902.20,449.05 L902.20,447.42 L902.20,445.79 L902.20,444.17 L902.20,442.54 L902.20,440.91 L902.20,439.28 L902.20,437.65 L902.20,436.02 L902.20,434.39 L902.20,432.77 L902.20,431.14 L902.20,429.51 L902.20,427.88 L902.20,426.25 L902.20,424.62 L902.20,423.00 L902.20,421.37 L902.20,419.74 L902.20,418.11 L902.20,416.48 L902.20,414.85 L902.20,413.22 L902.20,411.60 L902.20,409.97 L902.20,408.34 L902.20,406.71 L902.20,405.08 L902.20,403.45 L902.20,401.82 L902.20,400.20 L902.20,398.57 L902.20,396.94 L902.20,395.31 L902.20,393.68 L902.20,392.05 L902.20,390.43 L902.20,388.80 L902.20,387.17 L902.20,385.54 L902.20,383.91 L902.20,382.28 L902.20,380.65 L902.20,379.03 L902.20,377.40 L902.20,375.77 L902.20,374.14 L902.20,372.51 L902.20,370.88 L902.20,369.25 L902.20,367.63 L902.20,366.00 L902.20,364.37 L902.20,362.74 L902.20,361.11 L902.20,359.48 L902.20,357.86 L902.20,356.23 L902.20,354.60 L902.20,352.97 L902.20,351.34 L902.20,349.71 L902.20,348.08 L902.20,346.46 L902.20,344.83 L902.20,343.20 L902.20,341.57 L902.20,339.94 L902.20,338.31 L902.20,336.69 L902.20,335.06 L902.20,333.43 L902.20,331.80 L902.20,330.17 L902.20,328.54 L902.20,326.91 L902.20,325.29 L902.20,323.66 L902.20,322.03 L902.20,320.40 L902.20,318.77 L902.20,317.14 L902.20,315.51 L902.20,313.89 L902.20,312.26 L902.20,310.63 L902.20,309.00 L902.20,307.37 L902.20,305.74 L902.20,304.11 L902.20,302.49 L902.20,300.86 L902.20,299.23 L902.20,297.60 L902.20,295.97 L902.20,294.34 L902.20,292.72 L902.20,291.09 L902.20,289.46 L902.20,287.83 L902.20,286.20 L902.20,284.57 L902.20,282.94 L902.20,281.32 L902.20,279.69 L902.20,278.06 L902.20,276.43 L902.20,274.80 L902.20,273.17 L902.20,271.54 L902.20,269.92 L902.20,268.29 L902.20,266.66 L902.20,265.03 L902.20,263.40 L902.20,261.77 L902.20,260.15 L902.20,258.52 L902.20,256.89 L902.20,255.26 L902.20,253.63 L902.20,252.00 L902.20,250.37 L902.20,248.75 L902.20,247.12 L902.20,245.49 L902.20,243.86 L902.20,242.23 L902.20,240.60 L902.20,238.97 L902.20,237.35 L902.20,235.72 L902.20,234.09 L902.20,232.46 L902.20,230.83 L902.20,229.20 L902.20,227.58 L902.20,225.95 L902.20,224.32 L902.20,222.69 L902.20,221.06 L902.20,219.43 L902.20,217.80 L902.20,216.18 L902.20,214.55 L902.20,212.92 L902.20,211.29 L902.20,209.66 L902.20,208.03 L902.20,206.40 L902.20,204.78 L902.20,203.15 L902.20,201.52 L902.20,199.89 L902.20,198.26 L902.20,196.63 L902.20,195.01 L902.20,193.38 L902.20,191.75 L902.20,190.12 L902.20,188.49 L902.20,186.86 L902.20,185.23 L902.20,183.61 L902.20,181.98 L902.20,180.35 L902.20,178.72 L902.20,177.09 L902.20,175.46 L902.20,173.83 L902.20,172.21 L902.20,170.58 L902.20,168.95 L902.20,167.32 L902.20,165.69 L902.20,164.06 L902.20,162.44 L902.20,160.81 L902.20,159.18 L902.20,157.55 L902.20,155.92 L902.20,154.29 L902.20,152.66 L902.20,151.04 L902.20,149.41 L902.20,147.78 L902.20,146.15 L902.20,144.52 L902.20,142.89 L902.20,141.26 L902.20,139.64 L902.20,138.01 L902.20,136.38 L902.20,134.75 L902.20,133.12 L902.20,131.49 L902.20,129.87 L902.20,128.24 L902.20,126.61 L902.20,124.98 L902.20,123.35 L902.20,121.72 L902.20,120.09 L902.20,118.47 L902.20,116.84 L902.20,115.21 L902.20,113.58 L902.20,111.95 L902.20,110.32 L902.20,108.69 L902.20,107.07 L902.20,105.44 L902.20,103.81 L902.20,102.18 L902.20,100.55 L902.20,98.92 L902.20,97.30 L902.20,95.67 L902.20,94.04 L902.20,92.41 L902.20,90.78 L902.20,89.15 L902.20,87.52 L902.20,85.90 L902.20,84.27 L902.20,82.64 L902.20,81.01 L902.20,79.38 L902.20,77.75 L902.20,76.12 L902.20,74.50 L902.20,72.87 L902.20,71.24 L902.20,69.61 L902.20,67.98 L902.20,66.35 L902.20,64.73 L902.20,63.10 L902.20,61.47 L902.20,59.84 L902.20,58.21 L902.20,56.58 L902.20,54.95 L902.20,53.33 L902.20,51.70 L902.20,50.07 L902.20,48.44 L902.20,46.81 L902.20,45.18 L902.20,43.55 L902.20,41.93 L902.20,40.30 L902.20,38.67 L902.20,37.04 L902.20,35.41 L902.20,33.78 L902.20,32.16 L902.20,30.53 L902.20,28.90"/>
<path d="M902.20,613.53 L902.63,611.90 L903.05,610.27 L903.48,608.64 L903.91,607.02 L904.33,605.39 L904.76,603.76 L905.18,602.13 L905.61,600.50 L906.03,598.87 L906.46,597.25 L906.88,595.62 L907.31,593.99 L907.73,592.36 L908.15,590.73 L908.58,589.10 L909.00,587.47 L909.42,585.85 L909.84,584.22 L910.26,582.59 L910.68,580.96 L911.10,579.33 L911.52,577.70 L911.94,576.07 L912.36,574.45 L912.77,572.82 L913.19,571.19 L913.60,569.56 L914.02,567.93 L914.43,566.30 L914.84,564.67 L915.26,563.05 L915.67,561.42 L916.08,559.79 L916.48,558.16 L916.89,556.53 L917.30,554.90 L917.70,553.28 L918.11,551.65 L918.51,550.02 L918.91,548.39 L919.31,546.76 L919.71,545.13 L920.11,543.50 L920.50,541.88 L920.90,540.25 L921.29,538.62 L921.68,536.99 L922.07,535.36 L922.46,533.73 L922.85,532.11 L923.23,530.48 L923.62,528.85 L924.00,527.22 L924.38,525.59 L924.76,523.96 L925.14,522.33 L925.51,520.71 L925.89,519.08 L926.26,517.45 L926.63,515.82 L927.00,514.19 L927.36,512.56 L927.73,510.93 L928.09,509.31 L928.45,507.68 L928.81,506.05 L929.16,504.42 L929.52,502.79 L929.87,501.16 L930.22,499.53 L930.57,497.91 L930.92,496.28 L931.26,494.65 L931.60,493.02 L931.94,491.39 L932.28,489.76 L932.61,488.14 L932.95,486.51 L933.28,484.88 L933.60,483.25 L933.93,481.62 L934.25,479.99 L934.57,478.36 L934.89,476.74 L935.21,475.11 L935.52,473.48 L935.83,471.85 L936.14,470.22 L936.44,468.59 L936.75,466.96 L937.05,465.34 L937.34,463.71 L937.64,462.08 L937.93,460.45 L938.22,458.82 L938.51,457.19 L938.79,455.57 L939.07,453.94 L939.35,452.31 L939.63,450.68 L939.90,449.05 L940.17,447.42 L940.43,445.79 L940.70,444.17 L940.96,442.54 L941.22,440.91 L941.47,439.28 L941.72,437.65 L941.97,436.02 L942.22,434.39 L942.46,432.77 L942.70,431.14 L942.94,429.51 L943.17,427.88 L943.40,426.25 L943.63,424.62 L943.86,423.00 L944.08,421.37 L944.29,419.74 L944.51,418.11 L944.72,416.48 L944.93,414.85 L945.13,413.22 L945.34,411.60 L945.53,409.97 L945.73,408.34 L945.92,406.71 L946.11,405.08 L946.30,403.45 L946.48,401.82 L946.66,400.20 L946.83,398.57 L947.00,396.94 L947.17,395.31 L947.34,393.68 L947.50,392.05 L947.66,390.43 L947.81,388.80 L947.96,387.17 L948.11,385.54 L948.25,383.91 L948.39,382.28 L948.53,380.65 L948.66,379.03 L948.79,377.40 L948.92,375.77 L949.04,374.14 L949.16,372.51 L949.28,370.88 L949.39,369.25 L949.50,367.63 L949.60,366.00 L949.71,364.37 L949.80,362.74 L949.90,361.11 L949.99,359.48 L950.07,357.86 L950.16,356.23 L950.24,354.60 L950.31,352.97 L950.38,351.34 L950.45,349.71 L950.52,348.08 L950.58,346.46 L950.64,344.83 L950.69,343.20 L950.74,341.57 L950.79,339.94 L950.83,338.31 L950.87,336.69 L950.90,335.06 L950.94,333.43 L950.96,331.80 L950.99,330.17 L951.01,328.54 L951.03,326.91 L951.04,325.29 L951.05,323.66 L951.05,322.03 L951.06,320.40 L951.05,318.77 L951.05,317.14 L951.04,315.51 L951.03,313.89 L951.01,312.26 L950.99,310.63 L950.96,309.00 L950.94,307.37 L950.90,305.74 L950.87,304.11 L950.83,302.49 L950.79,300.86 L950.74,299.23 L950.69,297.60 L950.64,295.97 L950.58,294.34 L950.52,292.72 L950.45,291.09 L950.38,289.46 L950.31,287.83 L950.24,286.20 L950.16,284.57 L950.07,282.94 L949.99,281.32 L949.90,279.69 L949.80,278.06 L949.71,276.43 L949.60,274.80 L949.50,273.17 L949.39,271.54 L949.28,269.92 L949.16,268.29 L949.04,266.66 L948.92,265.03 L948.79,263.40 L948.66,261.77 L948.53,260.15 L948.39,258.52 L948.25,256.89 L948.11,255.26 L947.96,253.63 L947.81,252.00 L947.66,250.37 L947.50,248.75 L947.34,247.12 L947.17,245.49 L947.00,243.86 L946.83,242.23 L946.66,240.60 L946.48,238.97 L946.30,237.35 L946.11,235.72 L945.92,234.09 L945.73,232.46 L945.53,230.83 L945.34,229.20 L945.13,227.58 L944.93,225.95 L944.72,224.32 L944.51,222.69 L944.29,221.06 L944.08,219.43 L943.86,217.80 L943.63,216.18 L943.40,214.55 L943.17,212.92 L942.94,211.29 L942.70,209.66 L942.46,208.03 L942.22,206.40 L941.97,204.78 L941.72,203.15 L941.47,201.52 L941.22,199.89 L940.96,198.26 L940.70,196.63 L940.43,195.01 L940.17,193.38 L939.90,191.75 L939.63,190.12 L939.35,188.49 L939.07,186.86 L938.79,185.23 L938.51,183.61 L938.22,181.98 L937.93,180.35 L937.64,178.72 L937.34,177.09 L937.05,175.46 L936.75,173.83 L936.44,172.21 L936.14,170.58 L935.83,168.95 L935.52,167.32 L935.21,165.69 L934.89,164.06 L934.57,162.44 L934.25,160.81 L933.93,159.18 L933.60,157.55 L933.28,155.92 L932.95,154.29 L932.61,152.66 L932.28,151.04 L931.94,149.41 L931.60,147.78 L931.26,146.15 L930.92,144.52 L930.57,142.89 L930.22,141.26 L929.87,139.64 L929.52,138.01 L929.16,136.38 L928.81,134.75 L928.45,133.12 L928.09,131.49 L927.73,129.87 L927.36,128.24 L927.00,126.61 L926.63,124.98 L926.26,123.35 L925.89,121.72 L925.51,120.09 L925.14,118.47 L924.76,116.84 L924.38,115.21 L924.00,113.58 L923.62,111.95 L923.23,110.32 L922.85,108.69 L922.46,107.07 L922.07,105.44 L921.68,103.81 L921.29,102.18 L920.90,100.55 L920.50,98.92 L920.11,97.30 L919.71,95.67 L919.31,94.04 L918.91,92.41 L918.51,90.78 L918.11,89.15 L917.70,87.52 L917.30,85.90 L916.89,84.27 L916.48,82.64 L916.08,81.01 L915.67,79.38 L915.26,77.75 L914.84,76.12 L914.43,74.50 L914.02,72.87 L913.60,71.24 L913.19,69.61 L912.77,67.98 L912.36,66.35 L911.94,64.73 L911.52,63.10 L911.10,61.47 L910.68,59.84 L910.26,58.21 L909.84,56.58 L909.42,54.95 L909.00,53.33 L908.58,51.70 L908.15,50.07 L907.73,48.44 L907.31,46.81 L906.88,45.18 L906.46,43.55 L906.03,41.93 L905.61,40.30 L905.18,38.67 L904.76,37.04 L904.33,35.41 L903.91,33.78 L903.48,32.16 L903.05,30.53 L902.63,28.90"/>
<path d="M902.20,613.53 L903.05,611.90 L903.91,610.27 L904.76,608.64 L905.61,607.02 L906.46,605.39 L907.31,603.76 L908.17,602.13 L909.02,600.50 L909.87,598.87 L910.72,597.25 L911.57,595.62 L912.41,593.99 L913.26,592.36 L914.11,590.73 L914.95,589.10 L915.80,587.47 L916.64,585.85 L917.49,584.22 L918.33,582.59 L919.17,580.96 L920.01,579.33 L920.84,577.70 L921.68,576.07 L922.52,574.45 L923.35,572.82 L924.18,571.19 L925.01,569.56 L925.84,567.93 L926.66,566.30 L927.49,564.67 L928.31,563.05 L929.13,561.42 L929.95,559.79 L930.77,558.16 L931.58,556.53 L932.39,554.90 L933.20,553.28 L934.01,551.65 L934.82,550.02 L935.62,548.39 L936.42,546.76 L937.22,545.13 L938.01,543.50 L938.80,541.88 L939.59,540.25 L940.38,538.62 L941.16,536.99 L941.94,535.36 L942.72,533.73 L943.49,532.11 L944.27,530.48 L945.03,528.85 L945.80,527.22 L946.56,525.59 L947.32,523.96 L948.07,522.33 L948.82,520.71 L949.57,519.08 L950.31,517.45 L951.06,515.82 L951.79,514.19 L952.52,512.56 L953.25,510.93 L953.98,509.31 L954.70,507.68 L955.42,506.05 L956.13,504.42 L956.84,502.79 L957.54,501.16 L958.24,499.53 L958.94,497.91 L959.63,496.28 L960.32,494.65 L961.00,493.02 L961.68,491.39 L962.36,489.76 L963.03,488.14 L963.69,486.51 L964.35,484.88 L965.01,483.25 L965.66,481.62 L966.30,479.99 L966.94,478.36 L967.58,476.74 L968.21,475.11 L968.84,473.48 L969.46,471.85 L970.08,470.22 L970.69,468.59 L971.29,466.96 L971.89,465.34 L972.49,463.71 L973.08,462.08 L973.66,460.45 L974.24,458.82 L974.81,457.19 L975.38,455.57 L975.94,453.94 L976.50,452.31 L977.05,450.68 L977.60,449.05 L978.13,447.42 L978.67,445.79 L979.20,444.17 L979.72,442.54 L980.23,440.91 L980.74,439.28 L981.25,437.65 L981.75,436.02 L982.24,434.39 L982.73,432.77 L983.21,431.14 L983.68,429.51 L984.15,427.88 L984.61,426.25 L985.06,424.62 L985.51,423.00 L985.95,421.37 L986.39,419.74 L986.82,418.11 L987.24,416.48 L987.66,414.85 L988.07,413.22 L988.47,411.60 L988.87,409.97 L989.26,408.34 L989.64,406.71 L990.02,405.08 L990.39,403.45 L990.76,401.82 L991.11,400.20 L991.46,398.57 L991.81,396.94 L992.14,395.31 L992.47,393.68 L992.80,392.05 L993.11,390.43 L993.42,388.80 L993.72,387.17 L994.02,385.54 L994.31,383.91 L994.59,382.28 L994.86,380.65 L995.13,379.03 L995.39,377.40 L995.64,375.77 L995.89,374.14 L996.12,372.51 L996.36,370.88 L996.58,369.25 L996.80,367.63 L997.01,366.00 L997.21,364.37 L997.41,362.74 L997.59,361.11 L997.77,359.48 L997.95,357.86 L998.11,356.23 L998.27,354.60 L998.43,352.97 L998.57,351.34 L998.71,349.71 L998.84,348.08 L998.96,346.46 L999.07,344.83 L999.18,343.20 L999.28,341.57 L999.37,339.94 L999.46,338.31 L999.54,336.69 L999.61,335.06 L999.67,333.43 L999.73,331.80 L999.78,330.17 L999.82,328.54 L999.85,326.91 L999.88,325.29 L999.90,323.66 L999.91,322.03 L999.91,320.40 L999.91,318.77 L999.90,317.14 L999.88,315.51 L999.85,313.89 L999.82,312.26 L999.78,310.63 L999.73,309.00 L999.67,307.37 L999.61,305.74 L999.54,304.11 L999.46,302.49 L999.37,300.86 L999.28,299.23 L999.18,297.60 L999.07,295.97 L998.96,294.34 L998.84,292.72 L998.71,291.09 L998.57,289.46 L998.43,287.83 L998.27,286.20 L998.11,284.57 L997.95,282.94 L997.77,281.32 L997.59,279.69 L997.41,278.06 L997.21,276.43 L997.01,274.80 L996.80,273.17 L996.58,271.54 L996.36,269.92 L996.12,268.29 L995.89,266.66 L995.64,265.03 L995.39,263.40 L995.13,261.77 L994.86,260.15 L994.59,258.52 L994.31,256.89 L994.02,255.26 L993.72,253.63 L993.42,252.00 L993.11,250.37 L992.80,248.75 L992.47,247.12 L992.14,245.49 L991.81,243.86 L991.46,242.23 L991.11,240.60 L990.76,238.97 L990.39,237.35 L990.02,235.72 L989.64,234.09 L989.26,232.46 L988.87,230.83 L988.47,229.20 L988.07,227.58 L987.66,225.95 L987.24,224.32 L986.82,222.69 L986.39,221.06 L985.95,219.43 L985.51,217.80 L985.06,216.18 L984.61,214.55 L984.15,212.92 L983.68,211.29 L983.21,209.66 L982.73,208.03 L982.24,206.40 L981.75,204.78 L981.25,203.15 L980.74,201.52 L980.23,199.89 L979.72,198.26 L979.20,196.63 L978.67,195.01 L978.13,193.38 L977.60,191.75 L977.05,190.12 L976.50,188.49 L975.94,186.86 L975.38,185.23 L974.81,183.61 L974.24,181.98 L973.66,180.35 L973.08,178.72 L972.49,177.09 L971.89,175.46 L971.29,173.83 L970.69,172.21 L970.08,170.58 L969.46,168.95 L968.84,167.32 L968.21,165.69 L967.58,164.06 L966.94,162.44 L966.30,160.81 L965.66,159.18 L965.01,157.55 L964.35,155.92 L963.69,154.29 L963.03,152.66 L962.36,151.04 L961.68,149.41 L961.00,147.78 L960.32,146.15 L959.63,144.52 L958.94,142.89 L958.24,141.26 L957.54,139.64 L956.84,138.01 L956.13,136.38 L955.42,134.75 L954.70,133.12 L953.98,131.49 L953.25,129.87 L952.52,128.24 L951.79,126.61 L951.06,124.98 L950.31,123.35 L949.57,121.72 L948.82,120.09 L948.07,118.47 L947.32,116.84 L946.56,115.21 L945.80,113.58 L945.03,111.95 L944.27,110.32 L943.49,108.69 L942.72,107.07 L941.94,105.44 L941.16,103.81 L940.38,102.18 L939.59,100.55 L938.80,98.92 L938.01,97.30 L937.22,95.67 L936.42,94.04 L935.62,92.41 L934.82,90.78 L934.01,89.15 L933.20,87.52 L932.39,85.90 L931.58,84.27 L930.77,82.64 L929.95,81.01 L929.13,79.38 L928.31,77.75 L927.49,76.12 L926.66,74.50 L925.84,72.87 L925.01,71.24 L924.18,69.61 L923.35,67.98 L922.52,66.35 L921.68,64.73 L920.84,63.10 L920.01,61.47 L919.17,59.84 L918.33,58.21 L917.49,56.58 L916.64,54.95 L915.80,53.33 L914.95,51.70 L914.11,50.07 L913.26,48.44 L912.41,46.81 L911.57,45.18 L910.72,43.55 L909.87,41.93 L909.02,40.30 L908.17,38.67 L907.31,37.04 L906.46,35.41 L905.61,33.78 L904.76,32.16 L903.91,30.53 L903.05,28.90"/>
<path d="M902.20,613.53 L903.48,611.90 L904.76,610.27 L906.04,608.64 L907.32,607.02 L908.59,605.39 L909.87,603.76 L911.15,602.13 L912.42,600.50 L913.70,598.87 L914.97,597.25 L916.25,595.62 L917.52,593.99 L918.79,592.36 L920.06,590.73 L921.33,589.10 L922.60,587.47 L923.86,585.85 L925.13,584.22 L926.39,582.59 L927.65,580.96 L928.91,579.33 L930.17,577.70 L931.42,576.07 L932.67,574.45 L933.92,572.82 L935.17,571.19 L936.41,569.56 L937.66,567.93 L938.90,566.30 L940.13,564.67 L941.37,563.05 L942.60,561.42 L943.83,559.79 L945.05,558.16 L946.27,556.53 L947.49,554.90 L948.71,553.28 L949.92,551.65 L951.12,550.02 L952.33,548.39 L953.53,546.76 L954.72,545.13 L955.92,543.50 L957.10,541.88 L958.29,540.25 L959.47,538.62 L960.64,536.99 L961.81,535.36 L962.98,533.73 L964.14,532.11 L965.30,530.48 L966.45,528.85 L967.60,527.22 L968.74,525.59 L969.88,523.96 L971.01,522.33 L972.13,520.71 L973.26,519.08 L974.37,517.45 L975.48,515.82 L976.59,514.19 L977.69,512.56 L978.78,510.93 L979.87,509.31 L980.95,507.68 L982.03,506.05 L983.09,504.42 L984.16,502.79 L985.22,501.16 L986.27,499.53 L987.31,497.91 L988.35,496.28 L989.38,494.65 L990.41,493.02 L991.42,491.39 L992.43,489.76 L993.44,488.14 L994.44,486.51 L995.43,484.88 L996.41,483.25 L997.39,481.62 L998.36,479.99 L999.32,478.36 L1000.27,476.74 L1001.22,475.11 L1002.16,473.48 L1003.09,471.85 L1004.01,470.22 L1004.93,468.59 L1005.84,466.96 L1006.74,465.34 L1007.63,463.71 L1008.51,462.08 L1009.39,460.45 L1010.26,458.82 L1011.12,457.19 L1011.97,455.57 L1012.81,453.94 L1013.65,452.31 L1014.48,450.68 L1015.29,449.05 L1016.10,447.42 L1016.90,445.79 L1017.69,444.17 L1018.48,442.54 L1019.25,440.91 L1020.02,439.28 L1020.77,437.65 L1021.52,436.02 L1022.26,434.39 L1022.99,432.77 L1023.71,431.14 L1024.42,429.51 L1025.12,427.88 L1025.81,426.25 L1026.49,424.62 L1027.17,423.00 L1027.83,421.37 L1028.48,419.74 L1029.13,418.11 L1029.76,416.48 L1030.39,414.85 L1031.00,413.22 L1031.61,411.60 L1032.20,409.97 L1032.79,408.34 L1033.37,406.71 L1033.93,405.08 L1034.49,403.45 L1035.03,401.82 L1035.57,400.20 L1036.09,398.57 L1036.61,396.94 L1037.11,395.31 L1037.61,393.68 L1038.09,392.05 L1038.57,390.43 L1039.03,388.80 L1039.48,387.17 L1039.93,385.54 L1040.36,383.91 L1040.78,382.28 L1041.19,380.65 L1041.59,379.03 L1041.98,377.40 L1042.36,375.77 L1042.73,374.14 L1043.09,372.51 L1043.43,370.88 L1043.77,369.25 L1044.10,367.63 L1044.41,366.00 L1044.72,364.37 L1045.01,362.74 L1045.29,361.11 L1045.56,359.48 L1045.82,357.86 L1046.07,356.23 L1046.31,354.60 L1046.54,352.97 L1046.75,351.34 L1046.96,349.71 L1047.16,348.08 L1047.34,346.46 L1047.51,344.83 L1047.67,343.20 L1047.82,341.57 L1047.96,339.94 L1048.09,338.31 L1048.21,336.69 L1048.31,335.06 L1048.41,333.43 L1048.49,331.80 L1048.56,330.17 L1048.63,328.54 L1048.68,326.91 L1048.71,325.29 L1048.74,323.66 L1048.76,322.03 L1048.77,320.40 L1048.76,318.77 L1048.74,317.14 L1048.71,315.51 L1048.68,313.89 L1048.63,312.26 L1048.56,310.63 L1048.49,309.00 L1048.41,307.37 L1048.31,305.74 L1048.21,304.11 L1048.09,302.49 L1047.96,300.86 L1047.82,299.23 L1047.67,297.60 L1047.51,295.97 L1047.34,294.34 L1047.16,292.72 L1046.96,291.09 L1046.75,289.46 L1046.54,287.83 L1046.31,286.20 L1046.07,284.57 L1045.82,282.94 L1045.56,281.32 L1045.29,279.69 L1045.01,278.06 L1044.72,276.43 L1044.41,274.80 L1044.10,273.17 L1043.77,271.54 L1043.43,269.92 L1043.09,268.29 L1042.73,266.66 L1042.36,265.03 L1041.98,263.40 L1041.59,261.77 L1041.19,260.15 L1040.78,258.52 L1040.36,256.89 L1039.93,255.26 L1039.48,253.63 L1039.03,252.00 L1038.57,250.37 L1038.09,248.75 L1037.61,247.12 L1037.11,245.49 L1036.61,243.86 L1036.09,242.23 L1035.57,240.60 L1035.03,238.97 L1034.49,237.35 L1033.93,235.72 L1033.37,234.09 L1032.79,232.46 L1032.20,230.83 L1031.61,229.20 L1031.00,227.58 L1030.39,225.95 L1029.76,224.32 L1029.13,222.69 L1028.48,221.06 L1027.83,219.43 L1027.17,217.80 L1026.49,216.18 L1025.81,214.55 L1025.12,212.92 L1024.42,211.29 L1023.71,209.66 L1022.99,208.03 L1022.26,206.40 L1021.52,204.78 L1020.77,203.15 L1020.02,201.52 L1019.25,199.89 L1018.48,198.26 L1017.69,196.63 L1016.90,195.01 L1016.10,193.38 L1015.29,191.75 L1014.48,190.12 L1013.65,188.49 L1012.81,186.86 L1011.97,185.23 L1011.12,183.61 L1010.26,181.98 L1009.39,180.35 L1008.51,178.72 L1007.63,177.09 L1006.74,175.46 L1005.84,173.83 L1004.93,172.21 L1004.01,170.58 L1003.09,168.95 L1002.16,167.32 L1001.22,165.69 L1000.27,164.06 L999.32,162.44 L998.36,160.81 L997.39,159.18 L996.41,157.55 L995.43,155.92 L994.44,154.29 L993.44,152.66 L992.43,151.04 L991.42,149.41 L990.41,147.78 L989.38,146.15 L988.35,144.52 L987.31,142.89 L986.27,141.26 L985.22,139.64 L984.16,138.01 L983.09,136.38 L982.03,134.75 L980.95,133.12 L979.87,131.49 L978.78,129.87 L977.69,128.24 L976.59,126.61 L975.48,124.98 L974.37,123.35 L973.26,121.72 L972.13,120.09 L971.01,118.47 L969.88,116.84 L968.74,115.21 L967.60,113.58 L966.45,111.95 L965.30,110.32 L964.14,108.69 L962.98,107.07 L961.81,105.44 L960.64,103.81 L959.47,102.18 L958.29,100.55 L957.10,98.92 L955.92,97.30 L954.72,95.67 L953.53,94.04 L952.33,92.41 L951.12,90.78 L949.92,89.15 L948.71,87.52 L947.49,85.90 L946.27,84.27 L945.05,82.64 L943.83,81.01 L942.60,79.38 L941.37,77.75 L940.13,76.12 L938.90,74.50 L937.66,72.87 L936.41,71.24 L935.17,69.61 L933.92,67.98 L932.67,66.35 L931.42,64.73 L930.17,63.10 L928.91,61.47 L927.65,59.84 L926.39,58.21 L925.13,56.58 L923.86,54.95 L922.60,53.33 L921.33,51.70 L920.06,50.07 L918.79,48.44 L917.52,46.81 L916.25,45.18 L914.97,43.55 L913.70,41.93 L912.42,40.30 L911.15,38.67 L909.87,37.04 L908.59,35.41 L907.32,33.78 L906.04,32.16 L904.76,30.53 L903.48,28.90"/>
<path d="M902.20,613.53 L903.91,611.90 L905.61,610.27 L907.32,608.64 L909.02,607.02 L910.72,605.39 L912.43,603.76 L914.13,602.13 L915.83,600.50 L917.53,598.87 L919.23,597.25 L920.93,595.62 L922.63,593.99 L924.32,592.36 L926.02,590.73 L927.71,589.10 L929.40,587.47 L931.08,585.85 L932.77,584.22 L934.45,582.59 L936.13,580.96 L937.81,579.33 L939.49,577.70 L941.16,576.07 L942.83,574.45 L944.50,572.82 L946.16,571.19 L947.82,569.56 L949.48,567.93 L951.13,566.30 L952.78,564.67 L954.42,563.05 L956.07,561.42 L957.70,559.79 L959.34,558.16 L960.96,556.53 L962.59,554.90 L964.21,553.28 L965.82,551.65 L967.43,550.02 L969.04,548.39 L970.64,546.76 L972.23,545.13 L973.82,543.50 L975.41,541.88 L976.98,540.25 L978.56,538.62 L980.12,536.99 L981.68,535.36 L983.24,533.73 L984.79,532.11 L986.33,530.48 L987.87,528.85 L989.40,527.22 L990.92,525.59 L992.43,523.96 L993.94,522.33 L995.45,520.71 L996.94,519.08 L998.43,517.45 L999.91,515.82 L1001.38,514.19 L1002.85,512.56 L1004.31,510.93 L1005.76,509.31 L1007.20,507.68 L1008.63,506.05 L1010.06,504.42 L1011.48,502.79 L1012.89,501.16 L1014.29,499.53 L1015.68,497.91 L1017.06,496.28 L1018.44,494.65 L1019.81,493.02 L1021.16,491.39 L1022.51,489.76 L1023.85,488.14 L1025.18,486.51 L1026.50,484.88 L1027.81,483.25 L1029.12,481.62 L1030.41,479.99 L1031.69,478.36 L1032.96,476.74 L1034.22,475.11 L1035.48,473.48 L1036.72,471.85 L1037.95,470.22 L1039.17,468.59 L1040.38,466.96 L1041.58,465.34 L1042.77,463.71 L1043.95,462.08 L1045.12,460.45 L1046.28,458.82 L1047.43,457.19 L1048.56,455.57 L1049.69,453.94 L1050.80,452.31 L1051.90,450.68 L1052.99,449.05 L1054.07,447.42 L1055.14,445.79 L1056.19,444.17 L1057.24,442.54 L1058.27,440.91 L1059.29,439.28 L1060.30,437.65 L1061.29,436.02 L1062.28,434.39 L1063.25,432.77 L1064.21,431.14 L1065.16,429.51 L1066.09,427.88 L1067.02,426.25 L1067.93,424.62 L1068.82,423.00 L1069.71,421.37 L1070.58,419.74 L1071.44,418.11 L1072.28,416.48 L1073.12,414.85 L1073.94,413.22 L1074.75,411.60 L1075.54,409.97 L1076.32,408.34 L1077.09,406.71 L1077.84,405.08 L1078.58,403.45 L1079.31,401.82 L1080.02,400.20 L1080.73,398.57 L1081.41,396.94 L1082.09,395.31 L1082.74,393.68 L1083.39,392.05 L1084.02,390.43 L1084.64,388.80 L1085.24,387.17 L1085.83,385.54 L1086.41,383.91 L1086.97,382.28 L1087.52,380.65 L1088.06,379.03 L1088.58,377.40 L1089.08,375.77 L1089.57,374.14 L1090.05,372.51 L1090.51,370.88 L1090.96,369.25 L1091.40,367.63 L1091.82,366.00 L1092.22,364.37 L1092.61,362.74 L1092.99,361.11 L1093.35,359.48 L1093.70,357.86 L1094.03,356.23 L1094.35,354.60 L1094.65,352.97 L1094.94,351.34 L1095.21,349.71 L1095.47,348.08 L1095.72,346.46 L1095.95,344.83 L1096.16,343.20 L1096.36,341.57 L1096.55,339.94 L1096.72,338.31 L1096.88,336.69 L1097.02,335.06 L1097.14,333.43 L1097.26,331.80 L1097.35,330.17 L1097.43,328.54 L1097.50,326.91 L1097.55,325.29 L1097.59,323.66 L1097.61,322.03 L1097.62,320.40 L1097.61,318.77 L1097.59,317.14 L1097.55,315.51 L1097.50,313.89 L1097.43,312.26 L1097.35,310.63 L1097.26,309.00 L1097.14,307.37 L1097.02,305.74 L1096.88,304.11 L1096.72,302.49 L1096.55,300.86 L1096.36,299.23 L1096.16,297.60 L1095.95,295.97 L1095.72,294.34 L1095.47,292.72 L1095.21,291.09 L1094.94,289.46 L1094.65,287.83 L1094.35,286.20 L1094.03,284.57 L1093.70,282.94 L1093.35,281.32 L1092.99,279.69 L1092.61,278.06 L1092.22,276.43 L1091.82,274.80 L1091.40,273.17 L1090.96,271.54 L1090.51,269.92 L1090.05,268.29 L1089.57,266.66 L1089.08,265.03 L1088.58,263.40 L1088.06,261.77 L1087.52,260.15 L1086.97,258.52 L1086.41,256.89 L1085.83,255.26 L1085.24,253.63 L1084.64,252.00 L1084.02,250.37 L1083.39,248.75 L1082.74,247.12 L1082.09,245.49 L1081.41,243.86 L1080.73,242.23 L1080.02,240.60 L1079.31,238.97 L1078.58,237.35 L1077.84,235.72 L1077.09,234.09 L1076.32,232.46 L1075.54,230.83 L1074.75,229.20 L1073.94,227.58 L1073.12,225.95 L1072.28,224.32 L1071.44,222.69 L1070.58,221.06 L1069.71,219.43 L1068.82,217.80 L1067.93,216.18 L1067.02,214.55 L1066.09,212.92 L1065.16,211.29 L1064.21,209.66 L1063.25,208.03 L1062.28,206.40 L1061.29,204.78 L1060.30,203.15 L1059.29,201.52 L1058.27,199.89 L1057.24,198.26 L1056.19,196.63 L1055.14,195.01 L1054.07,193.38 L1052.99,191.75 L1051.90,190.12 L1050.80,188.49 L1049.69,186.86 L1048.56,185.23 L1047.43,183.61 L1046.28,181.98 L1045.12,180.35 L1043.95,178.72 L1042.77,177.09 L1041.58,175.46 L1040.38,173.83 L1039.17,172.21 L1037.95,170.58 L1036.72,168.95 L1035.48,167.32 L1034.22,165.69 L1032.96,164.06 L1031.69,162.44 L1030.41,160.81 L1029.12,159.18 L1027.81,157.55 L1026.50,155.92 L1025.18,154.29 L1023.85,152.66 L1022.51,151.04 L1021.16,149.41 L1019.81,147.78 L1018.44,146.15 L1017.06,144.52 L1015.68,142.89 L1014.29,141.26 L1012.89,139.64 L1011.48,138.01 L1010.06,136.38 L1008.63,134.75 L1007.20,133.12 L1005.76,131.49 L1004.31,129.87 L1002.85,128.24 L1001.38,126.61 L999.91,124.98 L998.43,123.35 L996.94,121.72 L995.45,120.09 L993.94,118.47 L992.43,116.84 L990.92,115.21 L989.40,113.58 L987.87,111.95 L986.33,110.32 L984.79,108.69 L983.24,107.07 L981.68,105.44 L980.12,103.81 L978.56,102.18 L976.98,100.55 L975.41,98.92 L973.82,97.30 L972.23,95.67 L970.64,94.04 L969.04,92.41 L967.43,90.78 L965.82,89.15 L964.21,87.52 L962.59,85.90 L960.96,84.27 L959.34,82.64 L957.70,81.01 L956.07,79.38 L954.42,77.75 L952.78,76.12 L951.13,74.50 L949.48,72.87 L947.82,71.24 L946.16,69.61 L944.50,67.98 L942.83,66.35 L941.16,64.73 L939.49,63.10 L937.81,61.47 L936.13,59.84 L934.45,58.21 L932.77,56.58 L931.08,54.95 L929.40,53.33 L927.71,51.70 L926.02,50.07 L924.32,48.44 L922.63,46.81 L920.93,45.18 L919.23,43.55 L917.53,41.93 L915.83,40.30 L914.13,38.67 L912.43,37.04 L910.72,35.41 L909.02,33.78 L907.32,32.16 L905.61,30.53 L903.91,28.90"/>
<path d="M902.20,613.53 L904.33,611.90 L906.46,610.27 L908.59,608.64 L910.73,607.02 L912.86,605.39 L914.98,603.76 L917.11,602.13 L919.24,600.50 L921.37,598.87 L923.49,597.25 L925.61,595.62 L927.73,593.99 L929.85,592.36 L931.97,590.73 L934.08,589.10 L936.20,587.47 L938.31,585.85 L940.41,584.22 L942.52,582.59 L944.62,580.96 L946.72,579.33 L948.81,577.70 L950.90,576.07 L952.99,574.45 L955.07,572.82 L957.15,571.19 L959.22,569.56 L961.30,567.93 L963.36,566.30 L965.42,564.67 L967.48,563.05 L969.53,561.42 L971.58,559.79 L973.62,558.16 L975.65,556.53 L977.69,554.90 L979.71,553.28 L981.73,551.65 L983.74,550.02 L985.75,548.39 L987.75,546.76 L989.74,545.13 L991.73,543.50 L993.71,541.88 L995.68,540.25 L997.65,538.62 L999.60,536.99 L1001.56,535.36 L1003.50,533.73 L1005.44,532.11 L1007.36,530.48 L1009.28,528.85 L1011.19,527.22 L1013.10,525.59 L1014.99,523.96 L1016.88,522.33 L1018.76,520.71 L1020.63,519.08 L1022.49,517.45 L1024.34,515.82 L1026.18,514.19 L1028.01,512.56 L1029.83,510.93 L1031.65,509.31 L1033.45,507.68 L1035.24,506.05 L1037.02,504.42 L1038.80,502.79 L1040.56,501.16 L1042.31,499.53 L1044.05,497.91 L1045.78,496.28 L1047.50,494.65 L1049.21,493.02 L1050.91,491.39 L1052.59,489.76 L1054.26,488.14 L1055.93,486.51 L1057.58,484.88 L1059.22,483.25 L1060.84,481.62 L1062.46,479.99 L1064.06,478.36 L1065.65,476.74 L1067.23,475.11 L1068.80,473.48 L1070.35,471.85 L1071.89,470.22 L1073.41,468.59 L1074.93,466.96 L1076.43,465.34 L1077.92,463.71 L1079.39,462.08 L1080.85,460.45 L1082.30,458.82 L1083.73,457.19 L1085.15,455.57 L1086.56,453.94 L1087.95,452.31 L1089.33,450.68 L1090.69,449.05 L1092.04,447.42 L1093.37,445.79 L1094.69,444.17 L1096.00,442.54 L1097.29,440.91 L1098.56,439.28 L1099.82,437.65 L1101.07,436.02 L1102.30,434.39 L1103.51,432.77 L1104.71,431.14 L1105.90,429.51 L1107.07,427.88 L1108.22,426.25 L1109.36,424.62 L1110.48,423.00 L1111.58,421.37 L1112.67,419.74 L1113.75,418.11 L1114.81,416.48 L1115.85,414.85 L1116.87,413.22 L1117.88,411.60 L1118.87,409.97 L1119.85,408.34 L1120.81,406.71 L1121.75,405.08 L1122.68,403.45 L1123.59,401.82 L1124.48,400.20 L1125.36,398.57 L1126.21,396.94 L1127.06,395.31 L1127.88,393.68 L1128.69,392.05 L1129.48,390.43 L1130.25,388.80 L1131.01,387.17 L1131.74,385.54 L1132.46,383.91 L1133.17,382.28 L1133.85,380.65 L1134.52,379.03 L1135.17,377.40 L1135.80,375.77 L1136.42,374.14 L1137.01,372.51 L1137.59,370.88 L1138.15,369.25 L1138.69,367.63 L1139.22,366.00 L1139.73,364.37 L1140.21,362.74 L1140.68,361.11 L1141.14,359.48 L1141.57,357.86 L1141.99,356.23 L1142.38,354.60 L1142.76,352.97 L1143.12,351.34 L1143.47,349.71 L1143.79,348.08 L1144.10,346.46 L1144.39,344.83 L1144.65,343.20 L1144.90,341.57 L1145.14,339.94 L1145.35,338.31 L1145.55,336.69 L1145.72,335.06 L1145.88,333.43 L1146.02,331.80 L1146.14,330.17 L1146.24,328.54 L1146.33,326.91 L1146.39,325.29 L1146.44,323.66 L1146.47,322.03 L1146.48,320.40 L1146.47,318.77 L1146.44,317.14 L1146.39,315.51 L1146.33,313.89 L1146.24,312.26 L1146.14,310.63 L1146.02,309.00 L1145.88,307.37 L1145.72,305.74 L1145.55,304.11 L1145.35,302.49 L1145.14,300.86 L1144.90,299.23 L1144.65,297.60 L1144.39,295.97 L1144.10,294.34 L1143.79,292.72 L1143.47,291.09 L1143.12,289.46 L1142.76,287.83 L1142.38,286.20 L1141.99,284.57 L1141.57,282.94 L1141.14,281.32 L1140.68,279.69 L1140.21,278.06 L1139.73,276.43 L1139.22,274.80 L1138.69,273.17 L1138.15,271.54 L1137.59,269.92 L1137.01,268.29 L1136.42,266.66 L1135.80,265.03 L1135.17,263.40 L1134.52,261.77 L1133.85,260.15 L1133.17,258.52 L1132.46,256.89 L1131.74,255.26 L1131.01,253.63 L1130.25,252.00 L1129.48,250.37 L1128.69,248.75 L1127.88,247.12 L1127.06,245.49 L1126.21,243.86 L1125.36,242.23 L1124.48,240.60 L1123.59,238.97 L1122.68,237.35 L1121.75,235.72 L1120.81,234.09 L1119.85,232.46 L1118.87,230.83 L1117.88,229.20 L1116.87,227.58 L1115.85,225.95 L1114.81,224.32 L1113.75,222.69 L1112.67,221.06 L1111.58,219.43 L1110.48,217.80 L1109.36,216.18 L1108.22,214.55 L1107.07,212.92 L1105.90,211.29 L1104.71,209.66 L1103.51,208.03 L1102.30,206.40 L1101.07,204.78 L1099.82,203.15 L1098.56,201.52 L1097.29,199.89 L1096.00,198.26 L1094.69,196.63 L1093.37,195.01 L1092.04,193.38 L1090.69,191.75 L1089.33,190.12 L1087.95,188.49 L1086.56,186.86 L1085.15,185.23 L1083.73,183.61 L1082.30,181.98 L1080.85,180.35 L1079.39,178.72 L1077.92,177.09 L1076.43,175.46 L1074.93,173.83 L1073.41,172.21 L1071.89,170.58 L1070.35,168.95 L1068.80,167.32 L1067.23,165.69 L1065.65,164.06 L1064.06,162.44 L1062.46,160.81 L1060.84,159.18 L1059.22,157.55 L1057.58,155.92 L1055.93,154.29 L1054.26,152.66 L1052.59,151.04 L1050.91,149.41 L1049.21,147.78 L1047.50,146.15 L1045.78,144.52 L1044.05,142.89 L1042.31,141.26 L1040.56,139.64 L1038.80,138.01 L1037.02,136.38 L1035.24,134.75 L1033.45,133.12 L1031.65,131.49 L1029.83,129.87 L1028.01,128.24 L1026.18,126.61 L1024.34,124.98 L1022.49,123.35 L1020.63,121.72 L1018.76,120.09 L1016.88,118.47 L1014.99,116.84 L1013.10,115.21 L1011.19,113.58 L1009.28,111.95 L1007.36,110.32 L1005.44,108.69 L1003.50,107.07 L1001.56,105.44 L999.60,103.81 L997.65,102.18 L995.68,100.55 L993.71,98.92 L991.73,97.30 L989.74,95.67 L987.75,94.04 L985.75,92.41 L983.74,90.78 L981.73,89.15 L979.71,87.52 L977.69,85.90 L975.65,84.27 L973.62,82.64 L971.58,81.01 L969.53,79.38 L967.48,77.75 L965.42,76.12 L963.36,74.50 L961.30,72.87 L959.22,71.24 L957.15,69.61 L955.07,67.98 L952.99,66.35 L950.90,64.73 L948.81,63.10 L946.72,61.47 L944.62,59.84 L942.52,58.21 L940.41,56.58 L938.31,54.95 L936.20,53.33 L934.08,51.70 L931.97,50.07 L929.85,48.44 L927.73,46.81 L925.61,45.18 L923.49,43.55 L921.37,41.93 L919.24,40.30 L917.11,38.67 L914.98,37.04 L912.86,35.41 L910.73,33.78 L908.59,32.16 L906.46,30.53 L904.33,28.90"/>
<path d="M902.20,613.53 L904.76,611.90 L907.32,610.27 L909.87,608.64 L912.43,607.02 L914.99,605.39 L917.54,603.76 L920.10,602.13 L922.65,600.50 L925.20,598.87 L927.75,597.25 L930.30,595.62 L932.84,593.99 L935.38,592.36 L937.92,590.73 L940.46,589.10 L943.00,587.47 L945.53,585.85 L948.06,584.22 L950.58,582.59 L953.10,580.96 L955.62,579.33 L958.13,577.70 L960.64,576.07 L963.15,574.45 L965.64,572.82 L968.14,571.19 L970.63,569.56 L973.11,567.93 L975.59,566.30 L978.07,564.67 L980.54,563.05 L983.00,561.42 L985.45,559.79 L987.90,558.16 L990.35,556.53 L992.78,554.90 L995.21,553.28 L997.63,551.65 L1000.05,550.02 L1002.46,548.39 L1004.86,546.76 L1007.25,545.13 L1009.63,543.50 L1012.01,541.88 L1014.38,540.25 L1016.74,538.62 L1019.09,536.99 L1021.43,535.36 L1023.76,533.73 L1026.08,532.11 L1028.40,530.48 L1030.70,528.85 L1032.99,527.22 L1035.28,525.59 L1037.55,523.96 L1039.82,522.33 L1042.07,520.71 L1044.31,519.08 L1046.54,517.45 L1048.77,515.82 L1050.97,514.19 L1053.17,512.56 L1055.36,510.93 L1057.54,509.31 L1059.70,507.68 L1061.85,506.05 L1063.99,504.42 L1066.12,502.79 L1068.23,501.16 L1070.33,499.53 L1072.42,497.91 L1074.50,496.28 L1076.56,494.65 L1078.61,493.02 L1080.65,491.39 L1082.67,489.76 L1084.68,488.14 L1086.67,486.51 L1088.65,484.88 L1090.62,483.25 L1092.57,481.62 L1094.51,479.99 L1096.43,478.36 L1098.34,476.74 L1100.24,475.11 L1102.11,473.48 L1103.98,471.85 L1105.83,470.22 L1107.66,468.59 L1109.47,466.96 L1111.28,465.34 L1113.06,463.71 L1114.83,462.08 L1116.58,460.45 L1118.32,458.82 L1120.04,457.19 L1121.74,455.57 L1123.43,453.94 L1125.10,452.31 L1126.75,450.68 L1128.39,449.05 L1130.00,447.42 L1131.61,445.79 L1133.19,444.17 L1134.76,442.54 L1136.30,440.91 L1137.83,439.28 L1139.35,437.65 L1140.84,436.02 L1142.32,434.39 L1143.78,432.77 L1145.22,431.14 L1146.64,429.51 L1148.04,427.88 L1149.42,426.25 L1150.79,424.62 L1152.13,423.00 L1153.46,421.37 L1154.77,419.74 L1156.06,418.11 L1157.33,416.48 L1158.58,414.85 L1159.81,413.22 L1161.02,411.60 L1162.21,409.97 L1163.38,408.34 L1164.53,406.71 L1165.66,405.08 L1166.77,403.45 L1167.87,401.82 L1168.94,400.20 L1169.99,398.57 L1171.02,396.94 L1172.03,395.31 L1173.02,393.68 L1173.99,392.05 L1174.93,390.43 L1175.86,388.80 L1176.77,387.17 L1177.65,385.54 L1178.52,383.91 L1179.36,382.28 L1180.18,380.65 L1180.98,379.03 L1181.76,377.40 L1182.52,375.77 L1183.26,374.14 L1183.97,372.51 L1184.67,370.88 L1185.34,369.25 L1185.99,367.63 L1186.62,366.00 L1187.23,364.37 L1187.82,362.74 L1188.38,361.11 L1188.92,359.48 L1189.45,357.86 L1189.94,356.23 L1190.42,354.60 L1190.88,352.97 L1191.31,351.34 L1191.72,349.71 L1192.11,348.08 L1192.48,346.46 L1192.82,344.83 L1193.15,343.20 L1193.45,341.57 L1193.72,339.94 L1193.98,338.31 L1194.21,336.69 L1194.43,335.06 L1194.62,333.43 L1194.78,331.80 L1194.93,330.17 L1195.05,328.54 L1195.15,326.91 L1195.23,325.29 L1195.29,323.66 L1195.32,322.03 L1195.33,320.40 L1195.32,318.77 L1195.29,317.14 L1195.23,315.51 L1195.15,313.89 L1195.05,312.26 L1194.93,310.63 L1194.78,309.00 L1194.62,307.37 L1194.43,305.74 L1194.21,304.11 L1193.98,302.49 L1193.72,300.86 L1193.45,299.23 L1193.15,297.60 L1192.82,295.97 L1192.48,294.34 L1192.11,292.72 L1191.72,291.09 L1191.31,289.46 L1190.88,287.83 L1190.42,286.20 L1189.94,284.57 L1189.45,282.94 L1188.92,281.32 L1188.38,279.69 L1187.82,278.06 L1187.23,276.43 L1186.62,274.80 L1185.99,273.17 L1185.34,271.54 L1184.67,269.92 L1183.97,268.29 L1183.26,266.66 L1182.52,265.03 L1181.76,263.40 L1180.98,261.77 L1180.18,260.15 L1179.36,258.52 L1178.52,256.89 L1177.65,255.26 L1176.77,253.63 L1175.86,252.00 L1174.93,250.37 L1173.99,248.75 L1173.02,247.12 L1172.03,245.49 L1171.02,243.86 L1169.99,242.23 L1168.94,240.60 L1167.87,238.97 L1166.77,237.35 L1165.66,235.72 L1164.53,234.09 L1163.38,232.46 L1162.21,230.83 L1161.02,229.20 L1159.81,227.58 L1158.58,225.95 L1157.33,224.32 L1156.06,222.69 L1154.77,221.06 L1153.46,219.43 L1152.13,217.80 L1150.79,216.18 L1149.42,214.55 L1148.04,212.92 L1146.64,211.29 L1145.22,209.66 L1143.78,208.03 L1142.32,206.40 L1140.84,204.78 L1139.35,203.15 L1137.83,201.52 L1136.30,199.89 L1134.76,198.26 L1133.19,196.63 L1131.61,195.01 L1130.00,193.38 L1128.39,191.75 L1126.75,190.12 L1125.10,188.49 L1123.43,186.86 L1121.74,185.23 L1120.04,183.61 L1118.32,181.98 L1116.58,180.35 L1114.83,178.72 L1113.06,177.09 L1111.28,175.46 L1109.47,173.83 L1107.66,172.21 L1105.83,170.58 L1103.98,168.95 L1102.11,167.32 L1100.24,165.69 L1098.34,164.06 L1096.43,162.44 L1094.51,160.81 L1092.57,159.18 L1090.62,157.55 L1088.65,155.92 L1086.67,154.29 L1084.68,152.66 L1082.67,151.04 L1080.65,149.41 L1078.61,147.78 L1076.56,146.15 L1074.50,144.52 L1072.42,142.89 L1070.33,141.26 L1068.23,139.64 L1066.12,138.01 L1063.99,136.38 L1061.85,134.75 L1059.70,133.12 L1057.54,131.49 L1055.36,129.87 L1053.17,128.24 L1050.97,126.61 L1048.77,124.98 L1046.54,123.35 L1044.31,121.72 L1042.07,120.09 L1039.82,118.47 L1037.55,116.84 L1035.28,115.21 L1032.99,113.58 L1030.70,111.95 L1028.40,110.32 L1026.08,108.69 L1023.76,107.07 L1021.43,105.44 L1019.09,103.81 L1016.74,102.18 L1014.38,100.55 L1012.01,98.92 L1009.63,97.30 L1007.25,95.67 L1004.86,94.04 L1002.46,92.41 L1000.05,90.78 L997.63,89.15 L995.21,87.52 L992.78,85.90 L990.35,84.27 L987.90,82.64 L985.45,81.01 L983.00,79.38 L980.54,77.75 L978.07,76.12 L975.59,74.50 L973.11,72.87 L970.63,71.24 L968.14,69.61 L965.64,67.98 L963.15,66.35 L960.64,64.73 L958.13,63.10 L955.62,61.47 L953.10,59.84 L950.58,58.21 L948.06,56.58 L945.53,54.95 L943.00,53.33 L940.46,51.70 L937.92,50.07 L935.38,48.44 L932.84,46.81 L930.30,45.18 L927.75,43.55 L925.20,41.93 L922.65,40.30 L920.10,38.67 L917.54,37.04 L914.99,35.41 L912.43,33.78 L909.87,32.16 L907.32,30.53 L904.76,28.90"/>
<path d="M902.20,613.53 L905.18,611.90 L908.17,610.27 L911.15,608.64 L914.14,607.02 L917.12,605.39 L920.10,603.76 L923.08,602.13 L926.06,600.50 L929.03,598.87 L932.01,597.25 L934.98,595.62 L937.95,593.99 L940.91,592.36 L943.88,590.73 L946.84,589.10 L949.80,587.47 L952.75,585.85 L955.70,584.22 L958.64,582.59 L961.59,580.96 L964.52,579.33 L967.45,577.70 L970.38,576.07 L973.30,574.45 L976.22,572.82 L979.13,571.19 L982.03,569.56 L984.93,567.93 L987.83,566.30 L990.71,564.67 L993.59,563.05 L996.46,561.42 L999.33,559.79 L1002.19,558.16 L1005.04,556.53 L1007.88,554.90 L1010.71,553.28 L1013.54,551.65 L1016.36,550.02 L1019.17,548.39 L1021.97,546.76 L1024.76,545.13 L1027.54,543.50 L1030.31,541.88 L1033.07,540.25 L1035.82,538.62 L1038.57,536.99 L1041.30,535.36 L1044.02,533.73 L1046.73,532.11 L1049.43,530.48 L1052.12,528.85 L1054.79,527.22 L1057.46,525.59 L1060.11,523.96 L1062.75,522.33 L1065.38,520.71 L1068.00,519.08 L1070.60,517.45 L1073.19,515.82 L1075.77,514.19 L1078.34,512.56 L1080.89,510.93 L1083.42,509.31 L1085.95,507.68 L1088.46,506.05 L1090.95,504.42 L1093.44,502.79 L1095.90,501.16 L1098.35,499.53 L1100.79,497.91 L1103.21,496.28 L1105.62,494.65 L1108.01,493.02 L1110.39,491.39 L1112.75,489.76 L1115.09,488.14 L1117.42,486.51 L1119.73,484.88 L1122.02,483.25 L1124.30,481.62 L1126.56,479.99 L1128.81,478.36 L1131.03,476.74 L1133.24,475.11 L1135.43,473.48 L1137.61,471.85 L1139.76,470.22 L1141.90,468.59 L1144.02,466.96 L1146.12,465.34 L1148.20,463.71 L1150.27,462.08 L1152.31,460.45 L1154.34,458.82 L1156.34,457.19 L1158.33,455.57 L1160.30,453.94 L1162.25,452.31 L1164.18,450.68 L1166.08,449.05 L1167.97,447.42 L1169.84,445.79 L1171.69,444.17 L1173.51,442.54 L1175.32,440.91 L1177.11,439.28 L1178.87,437.65 L1180.62,436.02 L1182.34,434.39 L1184.04,432.77 L1185.72,431.14 L1187.38,429.51 L1189.01,427.88 L1190.63,426.25 L1192.22,424.62 L1193.79,423.00 L1195.34,421.37 L1196.86,419.74 L1198.37,418.11 L1199.85,416.48 L1201.31,414.85 L1202.74,413.22 L1204.15,411.60 L1205.54,409.97 L1206.91,408.34 L1208.25,406.71 L1209.57,405.08 L1210.87,403.45 L1212.14,401.82 L1213.39,400.20 L1214.62,398.57 L1215.82,396.94 L1217.00,395.31 L1218.15,393.68 L1219.28,392.05 L1220.39,390.43 L1221.47,388.80 L1222.53,387.17 L1223.56,385.54 L1224.57,383.91 L1225.55,382.28 L1226.51,380.65 L1227.45,379.03 L1228.36,377.40 L1229.24,375.77 L1230.10,374.14 L1230.94,372.51 L1231.75,370.88 L1232.53,369.25 L1233.29,367.63 L1234.03,366.00 L1234.74,364.37 L1235.42,362.74 L1236.08,361.11 L1236.71,359.48 L1237.32,357.86 L1237.90,356.23 L1238.46,354.60 L1238.99,352.97 L1239.49,351.34 L1239.97,349.71 L1240.43,348.08 L1240.86,346.46 L1241.26,344.83 L1241.64,343.20 L1241.99,341.57 L1242.31,339.94 L1242.61,338.31 L1242.88,336.69 L1243.13,335.06 L1243.35,333.43 L1243.55,331.80 L1243.72,330.17 L1243.86,328.54 L1243.98,326.91 L1244.07,325.29 L1244.13,323.66 L1244.17,322.03 L1244.18,320.40 L1244.17,318.77 L1244.13,317.14 L1244.07,315.51 L1243.98,313.89 L1243.86,312.26 L1243.72,310.63 L1243.55,309.00 L1243.35,307.37 L1243.13,305.74 L1242.88,304.11 L1242.61,302.49 L1242.31,300.86 L1241.99,299.23 L1241.64,297.60 L1241.26,295.97 L1240.86,294.34 L1240.43,292.72 L1239.97,291.09 L1239.49,289.46 L1238.99,287.83 L1238.46,286.20 L1237.90,284.57 L1237.32,282.94 L1236.71,281.32 L1236.08,279.69 L1235.42,278.06 L1234.74,276.43 L1234.03,274.80 L1233.29,273.17 L1232.53,271.54 L1231.75,269.92 L1230.94,268.29 L1230.10,266.66 L1229.24,265.03 L1228.36,263.40 L1227.45,261.77 L1226.51,260.15 L1225.55,258.52 L1224.57,256.89 L1223.56,255.26 L1222.53,253.63 L1221.47,252.00 L1220.39,250.37 L1219.28,248.75 L1218.15,247.12 L1217.00,245.49 L1215.82,243.86 L1214.62,242.23 L1213.39,240.60 L1212.14,238.97 L1210.87,237.35 L1209.57,235.72 L1208.25,234.09 L1206.91,232.46 L1205.54,230.83 L1204.15,229.20 L1202.74,227.58 L1201.31,225.95 L1199.85,224.32 L1198.37,222.69 L1196.86,221.06 L1195.34,219.43 L1193.79,217.80 L1192.22,216.18 L1190.63,214.55 L1189.01,212.92 L1187.38,211.29 L1185.72,209.66 L1184.04,208.03 L1182.34,206.40 L1180.62,204.78 L1178.87,203.15 L1177.11,201.52 L1175.32,199.89 L1173.51,198.26 L1171.69,196.63 L1169.84,195.01 L1167.97,193.38 L1166.08,191.75 L1164.18,190.12 L1162.25,188.49 L1160.30,186.86 L1158.33,185.23 L1156.34,183.61 L1154.34,181.98 L1152.31,180.35 L1150.27,178.72 L1148.20,177.09 L1146.12,175.46 L1144.02,173.83 L1141.90,172.21 L1139.76,170.58 L1137.61,168.95 L1135.43,167.32 L1133.24,165.69 L1131.03,164.06 L1128.81,162.44 L1126.56,160.81 L1124.30,159.18 L1122.02,157.55 L1119.73,155.92 L1117.42,154.29 L1115.09,152.66 L1112.75,151.04 L1110.39,149.41 L1108.01,147.78 L1105.62,146.15 L1103.21,144.52 L1100.79,142.89 L1098.35,141.26 L1095.90,139.64 L1093.44,138.01 L1090.95,136.38 L1088.46,134.75 L1085.95,133.12 L1083.42,131.49 L1080.89,129.87 L1078.34,128.24 L1075.77,126.61 L1073.19,124.98 L1070.60,123.35 L1068.00,121.72 L1065.38,120.09 L1062.75,118.47 L1060.11,116.84 L1057.46,115.21 L1054.79,113.58 L1052.12,111.95 L1049.43,110.32 L1046.73,108.69 L1044.02,107.07 L1041.30,105.44 L1038.57,103.81 L1035.82,102.18 L1033.07,100.55 L1030.31,98.92 L1027.54,97.30 L1024.76,95.67 L1021.97,94.04 L1019.17,92.41 L1016.36,90.78 L1013.54,89.15 L1010.71,87.52 L1007.88,85.90 L1005.04,84.27 L1002.19,82.64 L999.33,81.01 L996.46,79.38 L993.59,77.75 L990.71,76.12 L987.83,74.50 L984.93,72.87 L982.03,71.24 L979.13,69.61 L976.22,67.98 L973.30,66.35 L970.38,64.73 L967.45,63.10 L964.52,61.47 L961.59,59.84 L958.64,58.21 L955.70,56.58 L952.75,54.95 L949.80,53.33 L946.84,51.70 L943.88,50.07 L940.91,48.44 L937.95,46.81 L934.98,45.18 L932.01,43.55 L929.03,41.93 L926.06,40.30 L923.08,38.67 L920.10,37.04 L917.12,35.41 L914.14,33.78 L911.15,32.16 L908.17,30.53 L905.18,28.90"/>
<path d="M902.20,613.53 L905.61,611.90 L909.02,610.27 L912.43,608.64 L915.84,607.02 L919.25,605.39 L922.65,603.76 L926.06,602.13 L929.46,600.50 L932.86,598.87 L936.26,597.25 L939.66,595.62 L943.05,593.99 L946.44,592.36 L949.83,590.73 L953.21,589.10 L956.59,587.47 L959.97,585.85 L963.34,584.22 L966.71,582.59 L970.07,580.96 L973.42,579.33 L976.78,577.70 L980.12,576.07 L983.46,574.45 L986.79,572.82 L990.12,571.19 L993.44,569.56 L996.75,567.93 L1000.06,566.30 L1003.36,564.67 L1006.65,563.05 L1009.93,561.42 L1013.20,559.79 L1016.47,558.16 L1019.73,556.53 L1022.98,554.90 L1026.22,553.28 L1029.45,551.65 L1032.67,550.02 L1035.88,548.39 L1039.08,546.76 L1042.26,545.13 L1045.44,543.50 L1048.61,541.88 L1051.77,540.25 L1054.91,538.62 L1058.05,536.99 L1061.17,535.36 L1064.28,533.73 L1067.38,532.11 L1070.46,530.48 L1073.53,528.85 L1076.59,527.22 L1079.64,525.59 L1082.67,523.96 L1085.69,522.33 L1088.69,520.71 L1091.68,519.08 L1094.66,517.45 L1097.62,515.82 L1100.57,514.19 L1103.50,512.56 L1106.41,510.93 L1109.31,509.31 L1112.20,507.68 L1115.07,506.05 L1117.92,504.42 L1120.75,502.79 L1123.57,501.16 L1126.38,499.53 L1129.16,497.91 L1131.93,496.28 L1134.68,494.65 L1137.41,493.02 L1140.13,491.39 L1142.83,489.76 L1145.50,488.14 L1148.16,486.51 L1150.80,484.88 L1153.43,483.25 L1156.03,481.62 L1158.61,479.99 L1161.18,478.36 L1163.72,476.74 L1166.25,475.11 L1168.75,473.48 L1171.24,471.85 L1173.70,470.22 L1176.14,468.59 L1178.57,466.96 L1180.97,465.34 L1183.35,463.71 L1185.71,462.08 L1188.04,460.45 L1190.36,458.82 L1192.65,457.19 L1194.92,455.57 L1197.17,453.94 L1199.40,452.31 L1201.60,450.68 L1203.78,449.05 L1205.94,447.42 L1208.07,445.79 L1210.19,444.17 L1212.27,442.54 L1214.34,440.91 L1216.38,439.28 L1218.40,437.65 L1220.39,436.02 L1222.36,434.39 L1224.30,432.77 L1226.22,431.14 L1228.12,429.51 L1229.99,427.88 L1231.83,426.25 L1233.65,424.62 L1235.45,423.00 L1237.22,421.37 L1238.96,419.74 L1240.68,418.11 L1242.37,416.48 L1244.04,414.85 L1245.68,413.22 L1247.29,411.60 L1248.88,409.97 L1250.44,408.34 L1251.98,406.71 L1253.48,405.08 L1254.97,403.45 L1256.42,401.82 L1257.85,400.20 L1259.25,398.57 L1260.62,396.94 L1261.97,395.31 L1263.29,393.68 L1264.58,392.05 L1265.84,390.43 L1267.08,388.80 L1268.29,387.17 L1269.47,385.54 L1270.62,383.91 L1271.75,382.28 L1272.84,380.65 L1273.91,379.03 L1274.95,377.40 L1275.96,375.77 L1276.95,374.14 L1277.90,372.51 L1278.83,370.88 L1279.72,369.25 L1280.59,367.63 L1281.43,366.00 L1282.24,364.37 L1283.02,362.74 L1283.78,361.11 L1284.50,359.48 L1285.19,357.86 L1285.86,356.23 L1286.50,354.60 L1287.10,352.97 L1287.68,351.34 L1288.23,349.71 L1288.75,348.08 L1289.24,346.46 L1289.70,344.83 L1290.13,343.20 L1290.53,341.57 L1290.90,339.94 L1291.24,338.31 L1291.55,336.69 L1291.84,335.06 L1292.09,333.43 L1292.31,331.80 L1292.50,330.17 L1292.67,328.54 L1292.80,326.91 L1292.91,325.29 L1292.98,323.66 L1293.03,322.03 L1293.04,320.40 L1293.03,318.77 L1292.98,317.14 L1292.91,315.51 L1292.80,313.89 L1292.67,312.26 L1292.50,310.63 L1292.31,309.00 L1292.09,307.37 L1291.84,305.74 L1291.55,304.11 L1291.24,302.49 L1290.90,300.86 L1290.53,299.23 L1290.13,297.60 L1289.70,295.97 L1289.24,294.34 L1288.75,292.72 L1288.23,291.09 L1287.68,289.46 L1287.10,287.83 L1286.50,286.20 L1285.86,284.57 L1285.19,282.94 L1284.50,281.32 L1283.78,279.69 L1283.02,278.06 L1282.24,276.43 L1281.43,274.80 L1280.59,273.17 L1279.72,271.54 L1278.83,269.92 L1277.90,268.29 L1276.95,266.66 L1275.96,265.03 L1274.95,263.40 L1273.91,261.77 L1272.84,260.15 L1271.75,258.52 L1270.62,256.89 L1269.47,255.26 L1268.29,253.63 L1267.08,252.00 L1265.84,250.37 L1264.58,248.75 L1263.29,247.12 L1261.97,245.49 L1260.62,243.86 L1259.25,242.23 L1257.85,240.60 L1256.42,238.97 L1254.97,237.35 L1253.48,235.72 L1251.98,234.09 L1250.44,232.46 L1248.88,230.83 L1247.29,229.20 L1245.68,227.58 L1244.04,225.95 L1242.37,224.32 L1240.68,222.69 L1238.96,221.06 L1237.22,219.43 L1235.45,217.80 L1233.65,216.18 L1231.83,214.55 L1229.99,212.92 L1228.12,211.29 L1226.22,209.66 L1224.30,208.03 L1222.36,206.40 L1220.39,204.78 L1218.40,203.15 L1216.38,201.52 L1214.34,199.89 L1212.27,198.26 L1210.19,196.63 L1208.07,195.01 L1205.94,193.38 L1203.78,191.75 L1201.60,190.12 L1199.40,188.49 L1197.17,186.86 L1194.92,185.23 L1192.65,183.61 L1190.36,181.98 L1188.04,180.35 L1185.71,178.72 L1183.35,177.09 L1180.97,175.46 L1178.57,173.83 L1176.14,172.21 L1173.70,170.58 L1171.24,168.95 L1168.75,167.32 L1166.25,165.69 L1163.72,164.06 L1161.18,162.44 L1158.61,160.81 L1156.03,159.18 L1153.43,157.55 L1150.80,155.92 L1148.16,154.29 L1145.50,152.66 L1142.83,151.04 L1140.13,149.41 L1137.41,147.78 L1134.68,146.15 L1131.93,144.52 L1129.16,142.89 L1126.38,141.26 L1123.57,139.64 L1120.75,138.01 L1117.92,136.38 L1115.07,134.75 L1112.20,133.12 L1109.31,131.49 L1106.41,129.87 L1103.50,128.24 L1100.57,126.61 L1097.62,124.98 L1094.66,123.35 L1091.68,121.72 L1088.69,120.09 L1085.69,118.47 L1082.67,116.84 L1079.64,115.21 L1076.59,113.58 L1073.53,111.95 L1070.46,110.32 L1067.38,108.69 L1064.28,107.07 L1061.17,105.44 L1058.05,103.81 L1054.91,102.18 L1051.77,100.55 L1048.61,98.92 L1045.44,97.30 L1042.26,95.67 L1039.08,94.04 L1035.88,92.41 L1032.67,90.78 L1029.45,89.15 L1026.22,87.52 L1022.98,85.90 L1019.73,84.27 L1016.47,82.64 L1013.20,81.01 L1009.93,79.38 L1006.65,77.75 L1003.36,76.12 L1000.06,74.50 L996.75,72.87 L993.44,71.24 L990.12,69.61 L986.79,67.98 L983.46,66.35 L980.12,64.73 L976.78,63.10 L973.42,61.47 L970.07,59.84 L966.71,58.21 L963.34,56.58 L959.97,54.95 L956.59,53.33 L953.21,51.70 L949.83,50.07 L946.44,48.44 L943.05,46.81 L939.66,45.18 L936.26,43.55 L932.86,41.93 L929.46,40.30 L926.06,38.67 L922.65,37.04 L919.25,35.41 L915.84,33.78 L912.43,32.16 L909.02,30.53 L905.61,28.90"/>
<path d="M902.20,613.53 L906.04,611.90 L909.87,610.27 L913.71,608.64 L917.55,607.02 L921.38,605.39 L925.21,603.76 L929.04,602.13 L932.87,600.50 L936.70,598.87 L940.52,597.25 L944.34,595.62 L948.16,593.99 L951.97,592.36 L955.79,590.73 L959.59,589.10 L963.39,587.47 L967.19,585.85 L970.98,584.22 L974.77,582.59 L978.55,580.96 L982.33,579.33 L986.10,577.70 L989.86,576.07 L993.62,574.45 L997.37,572.82 L1001.11,571.19 L1004.84,569.56 L1008.57,567.93 L1012.29,566.30 L1016.00,564.67 L1019.70,563.05 L1023.40,561.42 L1027.08,559.79 L1030.75,558.16 L1034.42,556.53 L1038.07,554.90 L1041.72,553.28 L1045.35,551.65 L1048.97,550.02 L1052.58,548.39 L1056.18,546.76 L1059.77,545.13 L1063.35,543.50 L1066.91,541.88 L1070.46,540.25 L1074.00,538.62 L1077.53,536.99 L1081.04,535.36 L1084.54,533.73 L1088.02,532.11 L1091.49,530.48 L1094.95,528.85 L1098.39,527.22 L1101.82,525.59 L1105.23,523.96 L1108.62,522.33 L1112.00,520.71 L1115.37,519.08 L1118.72,517.45 L1122.05,515.82 L1125.36,514.19 L1128.66,512.56 L1131.94,510.93 L1135.20,509.31 L1138.45,507.68 L1141.68,506.05 L1144.88,504.42 L1148.07,502.79 L1151.25,501.16 L1154.40,499.53 L1157.53,497.91 L1160.65,496.28 L1163.74,494.65 L1166.82,493.02 L1169.87,491.39 L1172.90,489.76 L1175.92,488.14 L1178.91,486.51 L1181.88,484.88 L1184.83,483.25 L1187.76,481.62 L1190.67,479.99 L1193.55,478.36 L1196.41,476.74 L1199.25,475.11 L1202.07,473.48 L1204.87,471.85 L1207.64,470.22 L1210.39,468.59 L1213.11,466.96 L1215.81,465.34 L1218.49,463.71 L1221.14,462.08 L1223.77,460.45 L1226.38,458.82 L1228.96,457.19 L1231.51,455.57 L1234.04,453.94 L1236.55,452.31 L1239.03,450.68 L1241.48,449.05 L1243.91,447.42 L1246.31,445.79 L1248.68,444.17 L1251.03,442.54 L1253.36,440.91 L1255.65,439.28 L1257.92,437.65 L1260.16,436.02 L1262.38,434.39 L1264.56,432.77 L1266.72,431.14 L1268.86,429.51 L1270.96,427.88 L1273.04,426.25 L1275.08,424.62 L1277.10,423.00 L1279.09,421.37 L1281.05,419.74 L1282.99,418.11 L1284.89,416.48 L1286.77,414.85 L1288.61,413.22 L1290.43,411.60 L1292.21,409.97 L1293.97,408.34 L1295.70,406.71 L1297.40,405.08 L1299.06,403.45 L1300.70,401.82 L1302.31,400.20 L1303.88,398.57 L1305.43,396.94 L1306.94,395.31 L1308.43,393.68 L1309.88,392.05 L1311.30,390.43 L1312.69,388.80 L1314.05,387.17 L1315.38,385.54 L1316.67,383.91 L1317.94,382.28 L1319.17,380.65 L1320.37,379.03 L1321.54,377.40 L1322.68,375.77 L1323.79,374.14 L1324.86,372.51 L1325.90,370.88 L1326.91,369.25 L1327.89,367.63 L1328.83,366.00 L1329.75,364.37 L1330.63,362.74 L1331.47,361.11 L1332.29,359.48 L1333.07,357.86 L1333.82,356.23 L1334.53,354.60 L1335.22,352.97 L1335.86,351.34 L1336.48,349.71 L1337.07,348.08 L1337.62,346.46 L1338.13,344.83 L1338.62,343.20 L1339.07,341.57 L1339.49,339.94 L1339.87,338.31 L1340.22,336.69 L1340.54,335.06 L1340.82,333.43 L1341.07,331.80 L1341.29,330.17 L1341.48,328.54 L1341.63,326.91 L1341.74,325.29 L1341.83,323.66 L1341.88,322.03 L1341.89,320.40 L1341.88,318.77 L1341.83,317.14 L1341.74,315.51 L1341.63,313.89 L1341.48,312.26 L1341.29,310.63 L1341.07,309.00 L1340.82,307.37 L1340.54,305.74 L1340.22,304.11 L1339.87,302.49 L1339.49,300.86 L1339.07,299.23 L1338.62,297.60 L1338.13,295.97 L1337.62,294.34 L1337.07,292.72 L1336.48,291.09 L1335.86,289.46 L1335.22,287.83 L1334.53,286.20 L1333.82,284.57 L1333.07,282.94 L1332.29,281.32 L1331.47,279.69 L1330.63,278.06 L1329.75,276.43 L1328.83,274.80 L1327.89,273.17 L1326.91,271.54 L1325.90,269.92 L1324.86,268.29 L1323.79,266.66 L1322.68,265.03 L1321.54,263.40 L1320.37,261.77 L1319.17,260.15 L1317.94,258.52 L1316.67,256.89 L1315.38,255.26 L1314.05,253.63 L1312.69,252.00 L1311.30,250.37 L1309.88,248.75 L1308.43,247.12 L1306.94,245.49 L1305.43,243.86 L1303.88,242.23 L1302.31,240.60 L1300.70,238.97 L1299.06,237.35 L1297.40,235.72 L1295.70,234.09 L1293.97,232.46 L1292.21,230.83 L1290.43,229.20 L1288.61,227.58 L1286.77,225.95 L1284.89,224.32 L1282.99,222.69 L1281.05,221.06 L1279.09,219.43 L1277.10,217.80 L1275.08,216.18 L1273.04,214.55 L1270.96,212.92 L1268.86,211.29 L1266.72,209.66 L1264.56,208.03 L1262.38,206.40 L1260.16,204.78 L1257.92,203.15 L1255.65,201.52 L1253.36,199.89 L1251.03,198.26 L1248.68,196.63 L1246.31,195.01 L1243.91,193.38 L1241.48,191.75 L1239.03,190.12 L1236.55,188.49 L1234.04,186.86 L1231.51,185.23 L1228.96,183.61 L1226.38,181.98 L1223.77,180.35 L1221.14,178.72 L1218.49,177.09 L1215.81,175.46 L1213.11,173.83 L1210.39,172.21 L1207.64,170.58 L1204.87,168.95 L1202.07,167.32 L1199.25,165.69 L1196.41,164.06 L1193.55,162.44 L1190.67,160.81 L1187.76,159.18 L1184.83,157.55 L1181.88,155.92 L1178.91,154.29 L1175.92,152.66 L1172.90,151.04 L1169.87,149.41 L1166.82,147.78 L1163.74,146.15 L1160.65,144.52 L1157.53,142.89 L1154.40,141.26 L1151.25,139.64 L1148.07,138.01 L1144.88,136.38 L1141.68,134.75 L1138.45,133.12 L1135.20,131.49 L1131.94,129.87 L1128.66,128.24 L1125.36,126.61 L1122.05,124.98 L1118.72,123.35 L1115.37,121.72 L1112.00,120.09 L1108.62,118.47 L1105.23,116.84 L1101.82,115.21 L1098.39,113.58 L1094.95,111.95 L1091.49,110.32 L1088.02,108.69 L1084.54,107.07 L1081.04,105.44 L1077.53,103.81 L1074.00,102.18 L1070.46,100.55 L1066.91,98.92 L1063.35,97.30 L1059.77,95.67 L1056.18,94.04 L1052.58,92.41 L1048.97,90.78 L1045.35,89.15 L1041.72,87.52 L1038.07,85.90 L1034.42,84.27 L1030.75,82.64 L1027.08,81.01 L1023.40,79.38 L1019.70,77.75 L1016.00,76.12 L1012.29,74.50 L1008.57,72.87 L1004.84,71.24 L1001.11,69.61 L997.37,67.98 L993.62,66.35 L989.86,64.73 L986.10,63.10 L982.33,61.47 L978.55,59.84 L974.77,58.21 L970.98,56.58 L967.19,54.95 L963.39,53.33 L959.59,51.70 L955.79,50.07 L951.97,48.44 L948.16,46.81 L944.34,45.18 L940.52,43.55 L936.70,41.93 L932.87,40.30 L929.04,38.67 L925.21,37.04 L921.38,35.41 L917.55,33.78 L913.71,32.16 L909.87,30.53 L906.04,28.90"/>
<path d="M902.20,613.53 L906.46,611.90 L910.73,610.27 L914.99,608.64 L919.25,607.02 L923.51,605.39 L927.77,603.76 L932.03,602.13 L936.28,600.50 L940.53,598.87 L944.78,597.25 L949.03,595.62 L953.27,593.99 L957.51,592.36 L961.74,590.73 L965.97,589.10 L970.19,587.47 L974.41,585.85 L978.63,584.22 L982.83,582.59 L987.04,580.96 L991.23,579.33 L995.42,577.70 L999.60,576.07 L1003.78,574.45 L1007.94,572.82 L1012.10,571.19 L1016.25,569.56 L1020.39,567.93 L1024.52,566.30 L1028.65,564.67 L1032.76,563.05 L1036.86,561.42 L1040.96,559.79 L1045.04,558.16 L1049.11,556.53 L1053.17,554.90 L1057.22,553.28 L1061.26,551.65 L1065.28,550.02 L1069.29,548.39 L1073.29,546.76 L1077.28,545.13 L1081.25,543.50 L1085.21,541.88 L1089.16,540.25 L1093.09,538.62 L1097.01,536.99 L1100.91,535.36 L1104.80,533.73 L1108.67,532.11 L1112.53,530.48 L1116.37,528.85 L1120.19,527.22 L1124.00,525.59 L1127.79,523.96 L1131.56,522.33 L1135.32,520.71 L1139.05,519.08 L1142.77,517.45 L1146.48,515.82 L1150.16,514.19 L1153.82,512.56 L1157.47,510.93 L1161.09,509.31 L1164.70,507.68 L1168.28,506.05 L1171.85,504.42 L1175.39,502.79 L1178.92,501.16 L1182.42,499.53 L1185.90,497.91 L1189.36,496.28 L1192.80,494.65 L1196.22,493.02 L1199.61,491.39 L1202.98,489.76 L1206.33,488.14 L1209.65,486.51 L1212.96,484.88 L1216.23,483.25 L1219.49,481.62 L1222.72,479.99 L1225.92,478.36 L1229.10,476.74 L1232.26,475.11 L1235.39,473.48 L1238.50,471.85 L1241.58,470.22 L1244.63,468.59 L1247.66,466.96 L1250.66,465.34 L1253.63,463.71 L1256.58,462.08 L1259.50,460.45 L1262.40,458.82 L1265.26,457.19 L1268.10,455.57 L1270.91,453.94 L1273.70,452.31 L1276.45,450.68 L1279.18,449.05 L1281.87,447.42 L1284.54,445.79 L1287.18,444.17 L1289.79,442.54 L1292.37,440.91 L1294.92,439.28 L1297.45,437.65 L1299.94,436.02 L1302.40,434.39 L1304.83,432.77 L1307.23,431.14 L1309.59,429.51 L1311.93,427.88 L1314.24,426.25 L1316.51,424.62 L1318.76,423.00 L1320.97,421.37 L1323.15,419.74 L1325.30,418.11 L1327.41,416.48 L1329.50,414.85 L1331.55,413.22 L1333.56,411.60 L1335.55,409.97 L1337.50,408.34 L1339.42,406.71 L1341.31,405.08 L1343.16,403.45 L1344.98,401.82 L1346.76,400.20 L1348.51,398.57 L1350.23,396.94 L1351.91,395.31 L1353.56,393.68 L1355.18,392.05 L1356.76,390.43 L1358.30,388.80 L1359.81,387.17 L1361.29,385.54 L1362.73,383.91 L1364.13,382.28 L1365.50,380.65 L1366.84,379.03 L1368.14,377.40 L1369.40,375.77 L1370.63,374.14 L1371.82,372.51 L1372.98,370.88 L1374.10,369.25 L1375.19,367.63 L1376.24,366.00 L1377.25,364.37 L1378.23,362.74 L1379.17,361.11 L1380.07,359.48 L1380.94,357.86 L1381.77,356.23 L1382.57,354.60 L1383.33,352.97 L1384.05,351.34 L1384.74,349.71 L1385.38,348.08 L1386.00,346.46 L1386.57,344.83 L1387.11,343.20 L1387.61,341.57 L1388.07,339.94 L1388.50,338.31 L1388.89,336.69 L1389.24,335.06 L1389.56,333.43 L1389.84,331.80 L1390.08,330.17 L1390.29,328.54 L1390.45,326.91 L1390.58,325.29 L1390.68,323.66 L1390.73,322.03 L1390.75,320.40 L1390.73,318.77 L1390.68,317.14 L1390.58,315.51 L1390.45,313.89 L1390.29,312.26 L1390.08,310.63 L1389.84,309.00 L1389.56,307.37 L1389.24,305.74 L1388.89,304.11 L1388.50,302.49 L1388.07,300.86 L1387.61,299.23 L1387.11,297.60 L1386.57,295.97 L1386.00,294.34 L1385.38,292.72 L1384.74,291.09 L1384.05,289.46 L1383.33,287.83 L1382.57,286.20 L1381.77,284.57 L1380.94,282.94 L1380.07,281.32 L1379.17,279.69 L1378.23,278.06 L1377.25,276.43 L1376.24,274.80 L1375.19,273.17 L1374.10,271.54 L1372.98,269.92 L1371.82,268.29 L1370.63,266.66 L1369.40,265.03 L1368.14,263.40 L1366.84,261.77 L1365.50,260.15 L1364.13,258.52 L1362.73,256.89 L1361.29,255.26 L1359.81,253.63 L1358.30,252.00 L1356.76,250.37 L1355.18,248.75 L1353.56,247.12 L1351.91,245.49 L1350.23,243.86 L1348.51,242.23 L1346.76,240.60 L1344.98,238.97 L1343.16,237.35 L1341.31,235.72 L1339.42,234.09 L1337.50,232.46 L1335.55,230.83 L1333.56,229.20 L1331.55,227.58 L1329.50,225.95 L1327.41,224.32 L1325.30,222.69 L1323.15,221.06 L1320.97,219.43 L1318.76,217.80 L1316.51,216.18 L1314.24,214.55 L1311.93,212.92 L1309.59,211.29 L1307.23,209.66 L1304.83,208.03 L1302.40,206.40 L1299.94,204.78 L1297.45,203.15 L1294.92,201.52 L1292.37,199.89 L1289.79,198.26 L1287.18,196.63 L1284.54,195.01 L1281.87,193.38 L1279.18,191.75 L1276.45,190.12 L1273.70,188.49 L1270.91,186.86 L1268.10,185.23 L1265.26,183.61 L1262.40,181.98 L1259.50,180.35 L1256.58,178.72 L1253.63,177.09 L1250.66,175.46 L1247.66,173.83 L1244.63,172.21 L1241.58,170.58 L1238.50,168.95 L1235.39,167.32 L1232.26,165.69 L1229.10,164.06 L1225.92,162.44 L1222.72,160.81 L1219.49,159.18 L1216.23,157.55 L1212.96,155.92 L1209.65,154.29 L1206.33,152.66 L1202.98,151.04 L1199.61,149.41 L1196.22,147.78 L1192.80,146.15 L1189.36,144.52 L1185.90,142.89 L1182.42,141.26 L1178.92,139.64 L1175.39,138.01 L1171.85,136.38 L1168.28,134.75 L1164.70,133.12 L1161.09,131.49 L1157.47,129.87 L1153.82,128.24 L1150.16,126.61 L1146.48,124.98 L1142.77,123.35 L1139.05,121.72 L1135.32,120.09 L1131.56,118.47 L1127.79,116.84 L1124.00,115.21 L1120.19,113.58 L1116.37,111.95 L1112.53,110.32 L1108.67,108.69 L1104.80,107.07 L1100.91,105.44 L1097.01,103.81 L1093.09,102.18 L1089.16,100.55 L1085.21,98.92 L1081.25,97.30 L1077.28,95.67 L1073.29,94.04 L1069.29,92.41 L1065.28,90.78 L1061.26,89.15 L1057.22,87.52 L1053.17,85.90 L1049.11,84.27 L1045.04,82.64 L1040.96,81.01 L1036.86,79.38 L1032.76,77.75 L1028.65,76.12 L1024.52,74.50 L1020.39,72.87 L1016.25,71.24 L1012.10,69.61 L1007.94,67.98 L1003.78,66.35 L999.60,64.73 L995.42,63.10 L991.23,61.47 L987.04,59.84 L982.83,58.21 L978.63,56.58 L974.41,54.95 L970.19,53.33 L965.97,51.70 L961.74,50.07 L957.51,48.44 L953.27,46.81 L949.03,45.18 L944.78,43.55 L940.53,41.93 L936.28,40.30 L932.03,38.67 L927.77,37.04 L923.51,35.41 L919.25,33.78 L914.99,32.16 L910.73,30.53 L906.46,28.90"/>
<path d="M902.20,613.53 L906.89,611.90 L911.58,610.27 L916.27,608.64 L920.96,607.02 L925.64,605.39 L930.33,603.76 L935.01,602.13 L939.69,600.50 L944.36,598.87 L949.04,597.25 L953.71,595.62 L958.37,593.99 L963.04,592.36 L967.69,590.73 L972.35,589.10 L976.99,587.47 L981.63,585.85 L986.27,584.22 L990.90,582.59 L995.52,580.96 L1000.13,579.33 L1004.74,577.70 L1009.34,576.07 L1013.93,574.45 L1018.52,572.82 L1023.09,571.19 L1027.65,569.56 L1032.21,567.93 L1036.76,566.30 L1041.29,564.67 L1045.82,563.05 L1050.33,561.42 L1054.83,559.79 L1059.32,558.16 L1063.80,556.53 L1068.27,554.90 L1072.72,553.28 L1077.16,551.65 L1081.59,550.02 L1086.00,548.39 L1090.40,546.76 L1094.79,545.13 L1099.16,543.50 L1103.52,541.88 L1107.86,540.25 L1112.18,538.62 L1116.49,536.99 L1120.78,535.36 L1125.06,533.73 L1129.32,532.11 L1133.56,530.48 L1137.78,528.85 L1141.99,527.22 L1146.18,525.59 L1150.35,523.96 L1154.50,522.33 L1158.63,520.71 L1162.74,519.08 L1166.83,517.45 L1170.90,515.82 L1174.95,514.19 L1178.98,512.56 L1182.99,510.93 L1186.98,509.31 L1190.95,507.68 L1194.89,506.05 L1198.81,504.42 L1202.71,502.79 L1206.59,501.16 L1210.44,499.53 L1214.27,497.91 L1218.08,496.28 L1221.86,494.65 L1225.62,493.02 L1229.35,491.39 L1233.06,489.76 L1236.74,488.14 L1240.40,486.51 L1244.03,484.88 L1247.64,483.25 L1251.22,481.62 L1254.77,479.99 L1258.30,478.36 L1261.79,476.74 L1265.27,475.11 L1268.71,473.48 L1272.13,471.85 L1275.51,470.22 L1278.87,468.59 L1282.20,466.96 L1285.50,465.34 L1288.78,463.71 L1292.02,462.08 L1295.23,460.45 L1298.42,458.82 L1301.57,457.19 L1304.69,455.57 L1307.78,453.94 L1310.85,452.31 L1313.88,450.68 L1316.87,449.05 L1319.84,447.42 L1322.78,445.79 L1325.68,444.17 L1328.55,442.54 L1331.39,440.91 L1334.20,439.28 L1336.97,437.65 L1339.71,436.02 L1342.42,434.39 L1345.09,432.77 L1347.73,431.14 L1350.33,429.51 L1352.91,427.88 L1355.44,426.25 L1357.95,424.62 L1360.41,423.00 L1362.85,421.37 L1365.24,419.74 L1367.61,418.11 L1369.93,416.48 L1372.23,414.85 L1374.48,413.22 L1376.70,411.60 L1378.88,409.97 L1381.03,408.34 L1383.14,406.71 L1385.22,405.08 L1387.25,403.45 L1389.25,401.82 L1391.22,400.20 L1393.14,398.57 L1395.03,396.94 L1396.88,395.31 L1398.70,393.68 L1400.47,392.05 L1402.21,390.43 L1403.91,388.80 L1405.57,387.17 L1407.20,385.54 L1408.78,383.91 L1410.33,382.28 L1411.83,380.65 L1413.30,379.03 L1414.73,377.40 L1416.12,375.77 L1417.47,374.14 L1418.79,372.51 L1420.06,370.88 L1421.29,369.25 L1422.49,367.63 L1423.64,366.00 L1424.76,364.37 L1425.83,362.74 L1426.87,361.11 L1427.86,359.48 L1428.82,357.86 L1429.73,356.23 L1430.61,354.60 L1431.44,352.97 L1432.23,351.34 L1432.99,349.71 L1433.70,348.08 L1434.38,346.46 L1435.01,344.83 L1435.60,343.20 L1436.15,341.57 L1436.66,339.94 L1437.13,338.31 L1437.56,336.69 L1437.95,335.06 L1438.30,333.43 L1438.60,331.80 L1438.87,330.17 L1439.09,328.54 L1439.28,326.91 L1439.42,325.29 L1439.52,323.66 L1439.58,322.03 L1439.61,320.40 L1439.58,318.77 L1439.52,317.14 L1439.42,315.51 L1439.28,313.89 L1439.09,312.26 L1438.87,310.63 L1438.60,309.00 L1438.30,307.37 L1437.95,305.74 L1437.56,304.11 L1437.13,302.49 L1436.66,300.86 L1436.15,299.23 L1435.60,297.60 L1435.01,295.97 L1434.38,294.34 L1433.70,292.72 L1432.99,291.09 L1432.23,289.46 L1431.44,287.83 L1430.61,286.20 L1429.73,284.57 L1428.82,282.94 L1427.86,281.32 L1426.87,279.69 L1425.83,278.06 L1424.76,276.43 L1423.64,274.80 L1422.49,273.17 L1421.29,271.54 L1420.06,269.92 L1418.79,268.29 L1417.47,266.66 L1416.12,265.03 L1414.73,263.40 L1413.30,261.77 L1411.83,260.15 L1410.33,258.52 L1408.78,256.89 L1407.20,255.26 L1405.57,253.63 L1403.91,252.00 L1402.21,250.37 L1400.47,248.75 L1398.70,247.12 L1396.88,245.49 L1395.03,243.86 L1393.14,242.23 L1391.22,240.60 L1389.25,238.97 L1387.25,237.35 L1385.22,235.72 L1383.14,234.09 L1381.03,232.46 L1378.88,230.83 L1376.70,229.20 L1374.48,227.58 L1372.23,225.95 L1369.93,224.32 L1367.61,222.69 L1365.24,221.06 L1362.85,219.43 L1360.41,217.80 L1357.95,216.18 L1355.44,214.55 L1352.91,212.92 L1350.33,211.29 L1347.73,209.66 L1345.09,208.03 L1342.42,206.40 L1339.71,204.78 L1336.97,203.15 L1334.20,201.52 L1331.39,199.89 L1328.55,198.26 L1325.68,196.63 L1322.78,195.01 L1319.84,193.38 L1316.87,191.75 L1313.88,190.12 L1310.85,188.49 L1307.78,186.86 L1304.69,185.23 L1301.57,183.61 L1298.42,181.98 L1295.23,180.35 L1292.02,178.72 L1288.78,177.09 L1285.50,175.46 L1282.20,173.83 L1278.87,172.21 L1275.51,170.58 L1272.13,168.95 L1268.71,167.32 L1265.27,165.69 L1261.79,164.06 L1258.30,162.44 L1254.77,160.81 L1251.22,159.18 L1247.64,157.55 L1244.03,155.92 L1240.40,154.29 L1236.74,152.66 L1233.06,151.04 L1229.35,149.41 L1225.62,147.78 L1221.86,146.15 L1218.08,144.52 L1214.27,142.89 L1210.44,141.26 L1206.59,139.64 L1202.71,138.01 L1198.81,136.38 L1194.89,134.75 L1190.95,133.12 L1186.98,131.49 L1182.99,129.87 L1178.98,128.24 L1174.95,126.61 L1170.90,124.98 L1166.83,123.35 L1162.74,121.72 L1158.63,120.09 L1154.50,118.47 L1150.35,116.84 L1146.18,115.21 L1141.99,113.58 L1137.78,111.95 L1133.56,110.32 L1129.32,108.69 L1125.06,107.07 L1120.78,105.44 L1116.49,103.81 L1112.18,102.18 L1107.86,100.55 L1103.52,98.92 L1099.16,97.30 L1094.79,95.67 L1090.40,94.04 L1086.00,92.41 L1081.59,90.78 L1077.16,89.15 L1072.72,87.52 L1068.27,85.90 L1063.80,84.27 L1059.32,82.64 L1054.83,81.01 L1050.33,79.38 L1045.82,77.75 L1041.29,76.12 L1036.76,74.50 L1032.21,72.87 L1027.65,71.24 L1023.09,69.61 L1018.52,67.98 L1013.93,66.35 L1009.34,64.73 L1004.74,63.10 L1000.13,61.47 L995.52,59.84 L990.90,58.21 L986.27,56.58 L981.63,54.95 L976.99,53.33 L972.35,51.70 L967.69,50.07 L963.04,48.44 L958.37,46.81 L953.71,45.18 L949.04,43.55 L944.36,41.93 L939.69,40.30 L935.01,38.67 L930.33,37.04 L925.64,35.41 L920.96,33.78 L916.27,32.16 L911.58,30.53 L906.89,28.90"/>
<path d="M902.20,613.53 L907.32,611.90 L912.43,610.27 L917.55,608.64 L922.66,607.02 L927.77,605.39 L932.88,603.76 L937.99,602.13 L943.10,600.50 L948.20,598.87 L953.30,597.25 L958.39,595.62 L963.48,593.99 L968.57,592.36 L973.65,590.73 L978.72,589.10 L983.79,587.47 L988.85,585.85 L993.91,584.22 L998.96,582.59 L1004.00,580.96 L1009.04,579.33 L1014.06,577.70 L1019.08,576.07 L1024.09,574.45 L1029.09,572.82 L1034.08,571.19 L1039.06,569.56 L1044.03,567.93 L1048.99,566.30 L1053.94,564.67 L1058.87,563.05 L1063.80,561.42 L1068.71,559.79 L1073.61,558.16 L1078.49,556.53 L1083.36,554.90 L1088.22,553.28 L1093.07,551.65 L1097.90,550.02 L1102.71,548.39 L1107.51,546.76 L1112.30,545.13 L1117.07,543.50 L1121.82,541.88 L1126.55,540.25 L1131.27,538.62 L1135.97,536.99 L1140.65,535.36 L1145.32,533.73 L1149.96,532.11 L1154.59,530.48 L1159.20,528.85 L1163.79,527.22 L1168.36,525.59 L1172.90,523.96 L1177.43,522.33 L1181.94,520.71 L1186.42,519.08 L1190.89,517.45 L1195.33,515.82 L1199.75,514.19 L1204.15,512.56 L1208.52,510.93 L1212.87,509.31 L1217.20,507.68 L1221.50,506.05 L1225.78,504.42 L1230.03,502.79 L1234.26,501.16 L1238.46,499.53 L1242.64,497.91 L1246.79,496.28 L1250.92,494.65 L1255.02,493.02 L1259.09,491.39 L1263.14,489.76 L1267.16,488.14 L1271.15,486.51 L1275.11,484.88 L1279.04,483.25 L1282.95,481.62 L1286.82,479.99 L1290.67,478.36 L1294.48,476.74 L1298.27,475.11 L1302.03,473.48 L1305.75,471.85 L1309.45,470.22 L1313.12,468.59 L1316.75,466.96 L1320.35,465.34 L1323.92,463.71 L1327.46,462.08 L1330.96,460.45 L1334.44,458.82 L1337.88,457.19 L1341.28,455.57 L1344.66,453.94 L1348.00,452.31 L1351.30,450.68 L1354.57,449.05 L1357.81,447.42 L1361.01,445.79 L1364.18,444.17 L1367.31,442.54 L1370.41,440.91 L1373.47,439.28 L1376.49,437.65 L1379.48,436.02 L1382.44,434.39 L1385.35,432.77 L1388.23,431.14 L1391.07,429.51 L1393.88,427.88 L1396.65,426.25 L1399.38,424.62 L1402.07,423.00 L1404.72,421.37 L1407.34,419.74 L1409.92,418.11 L1412.45,416.48 L1414.95,414.85 L1417.42,413.22 L1419.84,411.60 L1422.22,409.97 L1424.56,408.34 L1426.86,406.71 L1429.13,405.08 L1431.35,403.45 L1433.53,401.82 L1435.67,400.20 L1437.78,398.57 L1439.84,396.94 L1441.86,395.31 L1443.83,393.68 L1445.77,392.05 L1447.67,390.43 L1449.52,388.80 L1451.33,387.17 L1453.10,385.54 L1454.83,383.91 L1456.52,382.28 L1458.16,380.65 L1459.77,379.03 L1461.33,377.40 L1462.84,375.77 L1464.32,374.14 L1465.75,372.51 L1467.14,370.88 L1468.48,369.25 L1469.79,367.63 L1471.05,366.00 L1472.26,364.37 L1473.43,362.74 L1474.56,361.11 L1475.65,359.48 L1476.69,357.86 L1477.69,356.23 L1478.64,354.60 L1479.55,352.97 L1480.42,351.34 L1481.24,349.71 L1482.02,348.08 L1482.75,346.46 L1483.44,344.83 L1484.09,343.20 L1484.69,341.57 L1485.25,339.94 L1485.76,338.31 L1486.23,336.69 L1486.65,335.06 L1487.03,333.43 L1487.37,331.80 L1487.66,330.17 L1487.90,328.54 L1488.10,326.91 L1488.26,325.29 L1488.37,323.66 L1488.44,322.03 L1488.46,320.40 L1488.44,318.77 L1488.37,317.14 L1488.26,315.51 L1488.10,313.89 L1487.90,312.26 L1487.66,310.63 L1487.37,309.00 L1487.03,307.37 L1486.65,305.74 L1486.23,304.11 L1485.76,302.49 L1485.25,300.86 L1484.69,299.23 L1484.09,297.60 L1483.44,295.97 L1482.75,294.34 L1482.02,292.72 L1481.24,291.09 L1480.42,289.46 L1479.55,287.83 L1478.64,286.20 L1477.69,284.57 L1476.69,282.94 L1475.65,281.32 L1474.56,279.69 L1473.43,278.06 L1472.26,276.43 L1471.05,274.80 L1469.79,273.17 L1468.48,271.54 L1467.14,269.92 L1465.75,268.29 L1464.32,266.66 L1462.84,265.03 L1461.33,263.40 L1459.77,261.77 L1458.16,260.15 L1456.52,258.52 L1454.83,256.89 L1453.10,255.26 L1451.33,253.63 L1449.52,252.00 L1447.67,250.37 L1445.77,248.75 L1443.83,247.12 L1441.86,245.49 L1439.84,243.86 L1437.78,242.23 L1435.67,240.60 L1433.53,238.97 L1431.35,237.35 L1429.13,235.72 L1426.86,234.09 L1424.56,232.46 L1422.22,230.83 L1419.84,229.20 L1417.42,227.58 L1414.95,225.95 L1412.45,224.32 L1409.92,222.69 L1407.34,221.06 L1404.72,219.43 L1402.07,217.80 L1399.38,216.18 L1396.65,214.55 L1393.88,212.92 L1391.07,211.29 L1388.23,209.66 L1385.35,208.03 L1382.44,206.40 L1379.48,204.78 L1376.49,203.15 L1373.47,201.52 L1370.41,199.89 L1367.31,198.26 L1364.18,196.63 L1361.01,195.01 L1357.81,193.38 L1354.57,191.75 L1351.30,190.12 L1348.00,188.49 L1344.66,186.86 L1341.28,185.23 L1337.88,183.61 L1334.44,181.98 L1330.96,180.35 L1327.46,178.72 L1323.92,177.09 L1320.35,175.46 L1316.75,173.83 L1313.12,172.21 L1309.45,170.58 L1305.75,168.95 L1302.03,167.32 L1298.27,165.69 L1294.48,164.06 L1290.67,162.44 L1286.82,160.81 L1282.95,159.18 L1279.04,157.55 L1275.11,155.92 L1271.15,154.29 L1267.16,152.66 L1263.14,151.04 L1259.09,149.41 L1255.02,147.78 L1250.92,146.15 L1246.79,144.52 L1242.64,142.89 L1238.46,141.26 L1234.26,139.64 L1230.03,138.01 L1225.78,136.38 L1221.50,134.75 L1217.20,133.12 L1212.87,131.49 L1208.52,129.87 L1204.15,128.24 L1199.75,126.61 L1195.33,124.98 L1190.89,123.35 L1186.42,121.72 L1181.94,120.09 L1177.43,118.47 L1172.90,116.84 L1168.36,115.21 L1163.79,113.58 L1159.20,111.95 L1154.59,110.32 L1149.96,108.69 L1145.32,107.07 L1140.65,105.44 L1135.97,103.81 L1131.27,102.18 L1126.55,100.55 L1121.82,98.92 L1117.07,97.30 L1112.30,95.67 L1107.51,94.04 L1102.71,92.41 L1097.90,90.78 L1093.07,89.15 L1088.22,87.52 L1083.36,85.90 L1078.49,84.27 L1073.61,82.64 L1068.71,81.01 L1063.80,79.38 L1058.87,77.75 L1053.94,76.12 L1048.99,74.50 L1044.03,72.87 L1039.06,71.24 L1034.08,69.61 L1029.09,67.98 L1024.09,66.35 L1019.08,64.73 L1014.06,63.10 L1009.04,61.47 L1004.00,59.84 L998.96,58.21 L993.91,56.58 L988.85,54.95 L983.79,53.33 L978.72,51.70 L973.65,50.07 L968.57,48.44 L963.48,46.81 L958.39,45.18 L953.30,43.55 L948.20,41.93 L943.10,40.30 L937.99,38.67 L932.88,37.04 L927.77,35.41 L922.66,33.78 L917.55,32.16 L912.43,30.53 L907.32,28.90"/>
<path d="M751.85,564.67 L752.15,564.67 L752.99,564.67 L753.84,564.67 L754.68,564.67 L755.52,564.67 L756.37,564.67 L757.21,564.67 L758.05,564.67 L758.89,564.67 L759.74,564.67 L760.58,564.67 L761.42,564.67 L762.27,564.67 L763.11,564.67 L763.95,564.67 L764.80,564.67 L765.64,564.67 L766.48,564.67 L767.32,564.67 L768.17,564.67 L769.01,564.67 L769.85,564.67 L770.70,564.67 L771.54,564.67 L772.38,564.67 L773.23,564.67 L774.07,564.67 L774.91,564.67 L775.75,564.67 L776.60,564.67 L777.44,564.67 L778.28,564.67 L779.13,564.67 L779.97,564.67 L780.81,564.67 L781.65,564.67 L782.50,564.67 L783.34,564.67 L784.18,564.67 L785.03,564.67 L785.87,564.67 L786.71,564.67 L787.56,564.67 L788.40,564.67 L789.24,564.67 L790.08,564.67 L790.93,564.67 L791.77,564.67 L792.61,564.67 L793.46,564.67 L794.30,564.67 L795.14,564.67 L795.99,564.67 L796.83,564.67 L797.67,564.67 L798.51,564.67 L799.36,564.67 L800.20,564.67 L801.04,564.67 L801.89,564.67 L802.73,564.67 L803.57,564.67 L804.42,564.67 L805.26,564.67 L806.10,564.67 L806.94,564.67 L807.79,564.67 L808.63,564.67 L809.47,564.67 L810.32,564.67 L811.16,564.67 L812.00,564.67 L812.84,564.67 L813.69,564.67 L814.53,564.67 L815.37,564.67 L816.22,564.67 L817.06,564.67 L817.90,564.67 L818.75,564.67 L819.59,564.67 L820.43,564.67 L821.27,564.67 L822.12,564.67 L822.96,564.67 L823.80,564.67 L824.65,564.67 L825.49,564.67 L826.33,564.67 L827.18,564.67 L828.02,564.67 L828.86,564.67 L829.70,564.67 L830.55,564.67 L831.39,564.67 L832.23,564.67 L833.08,564.67 L833.92,564.67 L834.76,564.67 L835.61,564.67 L836.45,564.67 L837.29,564.67 L838.13,564.67 L838.98,564.67 L839.82,564.67 L840.66,564.67 L841.51,564.67 L842.35,564.67 L843.19,564.67 L844.03,564.67 L844.88,564.67 L845.72,564.67 L846.56,564.67 L847.41,564.67 L848.25,564.67 L849.09,564.67 L849.94,564.67 L850.78,564.67 L851.62,564.67 L852.46,564.67 L853.31,564.67 L854.15,564.67 L854.99,564.67 L855.84,564.67 L856.68,564.67 L857.52,564.67 L858.37,564.67 L859.21,564.67 L860.05,564.67 L860.89,564.67 L861.74,564.67 L862.58,564.67 L863.42,564.67 L864.27,564.67 L865.11,564.67 L865.95,564.67 L866.80,564.67 L867.64,564.67 L868.48,564.67 L869.32,564.67 L870.17,564.67 L871.01,564.67 L871.85,564.67 L872.70,564.67 L873.54,564.67 L874.38,564.67 L875.22,564.67 L876.07,564.67 L876.91,564.67 L877.75,564.67 L878.60,564.67 L879.44,564.67 L880.28,564.67 L881.13,564.67 L881.97,564.67 L882.81,564.67 L883.65,564.67 L884.50,564.67 L885.34,564.67 L886.18,564.67 L887.03,564.67 L887.87,564.67 L888.71,564.67 L889.56,564.67 L890.40,564.67 L891.24,564.67 L892.08,564.67 L892.93,564.67 L893.77,564.67 L894.61,564.67 L895.46,564.67 L896.30,564.67 L897.14,564.67 L897.99,564.67 L898.83,564.67 L899.67,564.67 L900.51,564.67 L901.36,564.67 L902.20,564.67 L903.04,564.67 L903.89,564.67 L904.73,564.67 L905.57,564.67 L906.41,564.67 L907.26,564.67 L908.10,564.67 L908.94,564.67 L909.79,564.67 L910.63,564.67 L911.47,564.67 L912.32,564.67 L913.16,564.67 L914.00,564.67 L914.84,564.67 L915.69,564.67 L916.53,564.67 L917.37,564.67 L918.22,564.67 L919.06,564.67 L919.90,564.67 L920.75,564.67 L921.59,564.67 L922.43,564.67 L923.27,564.67 L924.12,564.67 L924.96,564.67 L925.80,564.67 L926.65,564.67 L927.49,564.67 L928.33,564.67 L929.18,564.67 L930.02,564.67 L930.86,564.67 L931.70,564.67 L932.55,564.67 L933.39,564.67 L934.23,564.67 L935.08,564.67 L935.92,564.67 L936.76,564.67 L937.60,564.67 L938.45,564.67 L939.29,564.67 L940.13,564.67 L940.98,564.67 L941.82,564.67 L942.66,564.67 L943.51,564.67 L944.35,564.67 L945.19,564.67 L946.03,564.67 L946.88,564.67 L947.72,564.67 L948.56,564.67 L949.41,564.67 L950.25,564.67 L951.09,564.67 L951.94,564.67 L952.78,564.67 L953.62,564.67 L954.46,564.67 L955.31,564.67 L956.15,564.67 L956.99,564.67 L957.84,564.67 L958.68,564.67 L959.52,564.67 L960.37,564.67 L961.21,564.67 L962.05,564.67 L962.89,564.67 L963.74,564.67 L964.58,564.67 L965.42,564.67 L966.27,564.67 L967.11,564.67 L967.95,564.67 L968.79,564.67 L969.64,564.67 L970.48,564.67 L971.32,564.67 L972.17,564.67 L973.01,564.67 L973.85,564.67 L974.70,564.67 L975.54,564.67 L976.38,564.67 L977.22,564.67 L978.07,564.67 L978.91,564.67 L979.75,564.67 L980.60,564.67 L981.44,564.67 L982.28,564.67 L983.13,564.67 L983.97,564.67 L984.81,564.67 L985.65,564.67 L986.50,564.67 L987.34,564.67 L988.18,564.67 L989.03,564.67 L989.87,564.67 L990.71,564.67 L991.56,564.67 L992.40,564.67 L993.24,564.67 L994.08,564.67 L994.93,564.67 L995.77,564.67 L996.61,564.67 L997.46,564.67 L998.30,564.67 L999.14,564.67 L999.98,564.67 L1000.83,564.67 L1001.67,564.67 L1002.51,564.67 L1003.36,564.67 L1004.20,564.67 L1005.04,564.67 L1005.89,564.67 L1006.73,564.67 L1007.57,564.67 L1008.41,564.67 L1009.26,564.67 L1010.10,564.67 L1010.94,564.67 L1011.79,564.67 L1012.63,564.67 L1013.47,564.67 L1014.32,564.67 L1015.16,564.67 L1016.00,564.67 L1016.84,564.67 L1017.69,564.67 L1018.53,564.67 L1019.37,564.67 L1020.22,564.67 L1021.06,564.67 L1021.90,564.67 L1022.75,564.67 L1023.59,564.67 L1024.43,564.67 L1025.27,564.67 L1026.12,564.67 L1026.96,564.67 L1027.80,564.67 L1028.65,564.67 L1029.49,564.67 L1030.33,564.67 L1031.17,564.67 L1032.02,564.67 L1032.86,564.67 L1033.70,564.67 L1034.55,564.67 L1035.39,564.67 L1036.23,564.67 L1037.08,564.67 L1037.92,564.67 L1038.76,564.67 L1039.60,564.67 L1040.45,564.67 L1041.29,564.67 L1042.13,564.67 L1042.98,564.67 L1043.82,564.67 L1044.66,564.67 L1045.51,564.67 L1046.35,564.67 L1047.19,564.67 L1048.03,564.67 L1048.88,564.67 L1049.72,564.67 L1050.56,564.67 L1051.41,564.67 L1052.25,564.67 L1053.09,564.67 L1053.94,564.67"/>
<path d="M611.74,515.82 L612.33,515.82 L613.96,515.82 L615.58,515.82 L617.21,515.82 L618.84,515.82 L620.47,515.82 L622.10,515.82 L623.73,515.82 L625.36,515.82 L626.98,515.82 L628.61,515.82 L630.24,515.82 L631.87,515.82 L633.50,515.82 L635.13,515.82 L636.75,515.82 L638.38,515.82 L640.01,515.82 L641.64,515.82 L643.27,515.82 L644.90,515.82 L646.53,515.82 L648.15,515.82 L649.78,515.82 L651.41,515.82 L653.04,515.82 L654.67,515.82 L656.30,515.82 L657.92,515.82 L659.55,515.82 L661.18,515.82 L662.81,515.82 L664.44,515.82 L666.07,515.82 L667.70,515.82 L669.32,515.82 L670.95,515.82 L672.58,515.82 L674.21,515.82 L675.84,515.82 L677.47,515.82 L679.10,515.82 L680.72,515.82 L682.35,515.82 L683.98,515.82 L685.61,515.82 L687.24,515.82 L688.87,515.82 L690.50,515.82 L692.12,515.82 L693.75,515.82 L695.38,515.82 L697.01,515.82 L698.64,515.82 L700.27,515.82 L701.89,515.82 L703.52,515.82 L705.15,515.82 L706.78,515.82 L708.41,515.82 L710.04,515.82 L711.67,515.82 L713.29,515.82 L714.92,515.82 L716.55,515.82 L718.18,515.82 L719.81,515.82 L721.44,515.82 L723.07,515.82 L724.69,515.82 L726.32,515.82 L727.95,515.82 L729.58,515.82 L731.21,515.82 L732.84,515.82 L734.46,515.82 L736.09,515.82 L737.72,515.82 L739.35,515.82 L740.98,515.82 L742.61,515.82 L744.24,515.82 L745.86,515.82 L747.49,515.82 L749.12,515.82 L750.75,515.82 L752.38,515.82 L754.01,515.82 L755.63,515.82 L757.26,515.82 L758.89,515.82 L760.52,515.82 L762.15,515.82 L763.78,515.82 L765.41,515.82 L767.03,515.82 L768.66,515.82 L770.29,515.82 L771.92,515.82 L773.55,515.82 L775.18,515.82 L776.81,515.82 L778.43,515.82 L780.06,515.82 L781.69,515.82 L783.32,515.82 L784.95,515.82 L786.58,515.82 L788.21,515.82 L789.83,515.82 L791.46,515.82 L793.09,515.82 L794.72,515.82 L796.35,515.82 L797.98,515.82 L799.60,515.82 L801.23,515.82 L802.86,515.82 L804.49,515.82 L806.12,515.82 L807.75,515.82 L809.38,515.82 L811.00,515.82 L812.63,515.82 L814.26,515.82 L815.89,515.82 L817.52,515.82 L819.15,515.82 L820.78,515.82 L822.40,515.82 L824.03,515.82 L825.66,515.82 L827.29,515.82 L828.92,515.82 L830.55,515.82 L832.17,515.82 L833.80,515.82 L835.43,515.82 L837.06,515.82 L838.69,515.82 L840.32,515.82 L841.95,515.82 L843.57,515.82 L845.20,515.82 L846.83,515.82 L848.46,515.82 L850.09,515.82 L851.72,515.82 L853.35,515.82 L854.97,515.82 L856.60,515.82 L858.23,515.82 L859.86,515.82 L861.49,515.82 L863.12,515.82 L864.74,515.82 L866.37,515.82 L868.00,515.82 L869.63,515.82 L871.26,515.82 L872.89,515.82 L874.52,515.82 L876.14,515.82 L877.77,515.82 L879.40,515.82 L881.03,515.82 L882.66,515.82 L884.29,515.82 L885.92,515.82 L887.54,515.82 L889.17,515.82 L890.80,515.82 L892.43,515.82 L894.06,515.82 L895.69,515.82 L897.31,515.82 L898.94,515.82 L900.57,515.82 L902.20,515.82 L903.83,515.82 L905.46,515.82 L907.09,515.82 L908.71,515.82 L910.34,515.82 L911.97,515.82 L913.60,515.82 L915.23,515.82 L916.86,515.82 L918.49,515.82 L920.11,515.82 L921.74,515.82 L923.37,515.82 L925.00,515.82 L926.63,515.82 L928.26,515.82 L929.88,515.82 L931.51,515.82 L933.14,515.82 L934.77,515.82 L936.40,515.82 L938.03,515.82 L939.66,515.82 L941.28,515.82 L942.91,515.82 L944.54,515.82 L946.17,515.82 L947.80,515.82 L949.43,515.82 L951.06,515.82 L952.68,515.82 L954.31,515.82 L955.94,515.82 L957.57,515.82 L959.20,515.82 L960.83,515.82 L962.45,515.82 L964.08,515.82 L965.71,515.82 L967.34,515.82 L968.97,515.82 L970.60,515.82 L972.23,515.82 L973.85,515.82 L975.48,515.82 L977.11,515.82 L978.74,515.82 L980.37,515.82 L982.00,515.82 L983.62,515.82 L985.25,515.82 L986.88,515.82 L988.51,515.82 L990.14,515.82 L991.77,515.82 L993.40,515.82 L995.02,515.82 L996.65,515.82 L998.28,515.82 L999.91,515.82 L1001.54,515.82 L1003.17,515.82 L1004.80,515.82 L1006.42,515.82 L1008.05,515.82 L1009.68,515.82 L1011.31,515.82 L1012.94,515.82 L1014.57,515.82 L1016.20,515.82 L1017.82,515.82 L1019.45,515.82 L1021.08,515.82 L1022.71,515.82 L1024.34,515.82 L1025.97,515.82 L1027.59,515.82 L1029.22,515.82 L1030.85,515.82 L1032.48,515.82 L1034.11,515.82 L1035.74,515.82 L1037.37,515.82 L1038.99,515.82 L1040.62,515.82 L1042.25,515.82 L1043.88,515.82 L1045.51,515.82 L1047.14,515.82 L1048.77,515.82 L1050.39,515.82 L1052.02,515.82 L1053.65,515.82 L1055.28,515.82 L1056.91,515.82 L1058.54,515.82 L1060.16,515.82 L1061.79,515.82 L1063.42,515.82 L1065.05,515.82 L1066.68,515.82 L1068.31,515.82 L1069.94,515.82 L1071.56,515.82 L1073.19,515.82 L1074.82,515.82 L1076.45,515.82 L1078.08,515.82 L1079.71,515.82 L1081.34,515.82 L1082.96,515.82 L1084.59,515.82 L1086.22,515.82 L1087.85,515.82 L1089.48,515.82 L1091.11,515.82 L1092.73,515.82 L1094.36,515.82 L1095.99,515.82 L1097.62,515.82 L1099.25,515.82 L1100.88,515.82 L1102.51,515.82 L1104.13,515.82 L1105.76,515.82 L1107.39,515.82 L1109.02,515.82 L1110.65,515.82 L1112.28,515.82 L1113.91,515.82 L1115.53,515.82 L1117.16,515.82 L1118.79,515.82 L1120.42,515.82 L1122.05,515.82 L1123.68,515.82 L1125.30,515.82 L1126.93,515.82 L1128.56,515.82 L1130.19,515.82 L1131.82,515.82 L1133.45,515.82 L1135.08,515.82 L1136.70,515.82 L1138.33,515.82 L1139.96,515.82 L1141.59,515.82 L1143.22,515.82 L1144.85,515.82 L1146.48,515.82 L1148.10,515.82 L1149.73,515.82 L1151.36,515.82 L1152.99,515.82 L1154.62,515.82 L1156.25,515.82 L1157.87,515.82 L1159.50,515.82 L1161.13,515.82 L1162.76,515.82 L1164.39,515.82 L1166.02,515.82 L1167.65,515.82 L1169.27,515.82 L1170.90,515.82 L1172.53,515.82 L1174.16,515.82 L1175.79,515.82 L1177.42,515.82 L1179.05,515.82 L1180.67,515.82 L1182.30,515.82 L1183.93,515.82 L1185.56,515.82 L1187.19,515.82 L1188.82,515.82 L1190.44,515.82 L1192.07,515.82 L1193.70,515.82 L1195.33,515.82"/>
<path d="M491.43,466.96 L492.26,466.96 L494.56,466.96 L496.86,466.96 L499.17,466.96 L501.47,466.96 L503.77,466.96 L506.08,466.96 L508.38,466.96 L510.68,466.96 L512.99,466.96 L515.29,466.96 L517.59,466.96 L519.89,466.96 L522.20,466.96 L524.50,466.96 L526.80,466.96 L529.11,466.96 L531.41,466.96 L533.71,466.96 L536.02,466.96 L538.32,466.96 L540.62,466.96 L542.92,466.96 L545.23,466.96 L547.53,466.96 L549.83,466.96 L552.14,466.96 L554.44,466.96 L556.74,466.96 L559.05,466.96 L561.35,466.96 L563.65,466.96 L565.96,466.96 L568.26,466.96 L570.56,466.96 L572.86,466.96 L575.17,466.96 L577.47,466.96 L579.77,466.96 L582.08,466.96 L584.38,466.96 L586.68,466.96 L588.99,466.96 L591.29,466.96 L593.59,466.96 L595.89,466.96 L598.20,466.96 L600.50,466.96 L602.80,466.96 L605.11,466.96 L607.41,466.96 L609.71,466.96 L612.02,466.96 L614.32,466.96 L616.62,466.96 L618.93,466.96 L621.23,466.96 L623.53,466.96 L625.83,466.96 L628.14,466.96 L630.44,466.96 L632.74,466.96 L635.05,466.96 L637.35,466.96 L639.65,466.96 L641.96,466.96 L644.26,466.96 L646.56,466.96 L648.86,466.96 L651.17,466.96 L653.47,466.96 L655.77,466.96 L658.08,466.96 L660.38,466.96 L662.68,466.96 L664.99,466.96 L667.29,466.96 L669.59,466.96 L671.90,466.96 L674.20,466.96 L676.50,466.96 L678.80,466.96 L681.11,466.96 L683.41,466.96 L685.71,466.96 L688.02,466.96 L690.32,466.96 L692.62,466.96 L694.93,466.96 L697.23,466.96 L699.53,466.96 L701.83,466.96 L704.14,466.96 L706.44,466.96 L708.74,466.96 L711.05,466.96 L713.35,466.96 L715.65,466.96 L717.96,466.96 L720.26,466.96 L722.56,466.96 L724.87,466.96 L727.17,466.96 L729.47,466.96 L731.77,466.96 L734.08,466.96 L736.38,466.96 L738.68,466.96 L740.99,466.96 L743.29,466.96 L745.59,466.96 L747.90,466.96 L750.20,466.96 L752.50,466.96 L754.81,466.96 L757.11,466.96 L759.41,466.96 L761.71,466.96 L764.02,466.96 L766.32,466.96 L768.62,466.96 L770.93,466.96 L773.23,466.96 L775.53,466.96 L777.84,466.96 L780.14,466.96 L782.44,466.96 L784.74,466.96 L787.05,466.96 L789.35,466.96 L791.65,466.96 L793.96,466.96 L796.26,466.96 L798.56,466.96 L800.87,466.96 L803.17,466.96 L805.47,466.96 L807.78,466.96 L810.08,466.96 L812.38,466.96 L814.68,466.96 L816.99,466.96 L819.29,466.96 L821.59,466.96 L823.90,466.96 L826.20,466.96 L828.50,466.96 L830.81,466.96 L833.11,466.96 L835.41,466.96 L837.71,466.96 L840.02,466.96 L842.32,466.96 L844.62,466.96 L846.93,466.96 L849.23,466.96 L851.53,466.96 L853.84,466.96 L856.14,466.96 L858.44,466.96 L860.75,466.96 L863.05,466.96 L865.35,466.96 L867.65,466.96 L869.96,466.96 L872.26,466.96 L874.56,466.96 L876.87,466.96 L879.17,466.96 L881.47,466.96 L883.78,466.96 L886.08,466.96 L888.38,466.96 L890.68,466.96 L892.99,466.96 L895.29,466.96 L897.59,466.96 L899.90,466.96 L902.20,466.96 L904.50,466.96 L906.81,466.96 L909.11,466.96 L911.41,466.96 L913.72,466.96 L916.02,466.96 L918.32,466.96 L920.62,466.96 L922.93,466.96 L925.23,466.96 L927.53,466.96 L929.84,466.96 L932.14,466.96 L934.44,466.96 L936.75,466.96 L939.05,466.96 L941.35,466.96 L943.65,466.96 L945.96,466.96 L948.26,466.96 L950.56,466.96 L952.87,466.96 L955.17,466.96 L957.47,466.96 L959.78,466.96 L962.08,466.96 L964.38,466.96 L966.69,466.96 L968.99,466.96 L971.29,466.96 L973.59,466.96 L975.90,466.96 L978.20,466.96 L980.50,466.96 L982.81,466.96 L985.11,466.96 L987.41,466.96 L989.72,466.96 L992.02,466.96 L994.32,466.96 L996.62,466.96 L998.93,466.96 L1001.23,466.96 L1003.53,466.96 L1005.84,466.96 L1008.14,466.96 L1010.44,466.96 L1012.75,466.96 L1015.05,466.96 L1017.35,466.96 L1019.66,466.96 L1021.96,466.96 L1024.26,466.96 L1026.56,466.96 L1028.87,466.96 L1031.17,466.96 L1033.47,466.96 L1035.78,466.96 L1038.08,466.96 L1040.38,466.96 L1042.69,466.96 L1044.99,466.96 L1047.29,466.96 L1049.59,466.96 L1051.90,466.96 L1054.20,466.96 L1056.50,466.96 L1058.81,466.96 L1061.11,466.96 L1063.41,466.96 L1065.72,466.96 L1068.02,466.96 L1070.32,466.96 L1072.63,466.96 L1074.93,466.96 L1077.23,466.96 L1079.53,466.96 L1081.84,466.96 L1084.14,466.96 L1086.44,466.96 L1088.75,466.96 L1091.05,466.96 L1093.35,466.96 L1095.66,466.96 L1097.96,466.96 L1100.26,466.96 L1102.57,466.96 L1104.87,466.96 L1107.17,466.96 L1109.47,466.96 L1111.78,466.96 L1114.08,466.96 L1116.38,466.96 L1118.69,466.96 L1120.99,466.96 L1123.29,466.96 L1125.60,466.96 L1127.90,466.96 L1130.20,466.96 L1132.50,466.96 L1134.81,466.96 L1137.11,466.96 L1139.41,466.96 L1141.72,466.96 L1144.02,466.96 L1146.32,466.96 L1148.63,466.96 L1150.93,466.96 L1153.23,466.96 L1155.54,466.96 L1157.84,466.96 L1160.14,466.96 L1162.44,466.96 L1164.75,466.96 L1167.05,466.96 L1169.35,466.96 L1171.66,466.96 L1173.96,466.96 L1176.26,466.96 L1178.57,466.96 L1180.87,466.96 L1183.17,466.96 L1185.47,466.96 L1187.78,466.96 L1190.08,466.96 L1192.38,466.96 L1194.69,466.96 L1196.99,466.96 L1199.29,466.96 L1201.60,466.96 L1203.90,466.96 L1206.20,466.96 L1208.51,466.96 L1210.81,466.96 L1213.11,466.96 L1215.41,466.96 L1217.72,466.96 L1220.02,466.96 L1222.32,466.96 L1224.63,466.96 L1226.93,466.96 L1229.23,466.96 L1231.54,466.96 L1233.84,466.96 L1236.14,466.96 L1238.44,466.96 L1240.75,466.96 L1243.05,466.96 L1245.35,466.96 L1247.66,466.96 L1249.96,466.96 L1252.26,466.96 L1254.57,466.96 L1256.87,466.96 L1259.17,466.96 L1261.48,466.96 L1263.78,466.96 L1266.08,466.96 L1268.38,466.96 L1270.69,466.96 L1272.99,466.96 L1275.29,466.96 L1277.60,466.96 L1279.90,466.96 L1282.20,466.96 L1284.51,466.96 L1286.81,466.96 L1289.11,466.96 L1291.41,466.96 L1293.72,466.96 L1296.02,466.96 L1298.32,466.96 L1300.63,466.96 L1302.93,466.96 L1305.23,466.96 L1307.54,466.96 L1309.84,466.96 L1312.14,466.96 L1314.45,466.96 L1316.75,466.96"/>
<path d="M399.11,418.11 L400.13,418.11 L402.95,418.11 L405.77,418.11 L408.59,418.11 L411.41,418.11 L414.23,418.11 L417.05,418.11 L419.87,418.11 L422.69,418.11 L425.51,418.11 L428.33,418.11 L431.15,418.11 L433.97,418.11 L436.79,418.11 L439.61,418.11 L442.43,418.11 L445.26,418.11 L448.08,418.11 L450.90,418.11 L453.72,418.11 L456.54,418.11 L459.36,418.11 L462.18,418.11 L465.00,418.11 L467.82,418.11 L470.64,418.11 L473.46,418.11 L476.28,418.11 L479.10,418.11 L481.92,418.11 L484.74,418.11 L487.57,418.11 L490.39,418.11 L493.21,418.11 L496.03,418.11 L498.85,418.11 L501.67,418.11 L504.49,418.11 L507.31,418.11 L510.13,418.11 L512.95,418.11 L515.77,418.11 L518.59,418.11 L521.41,418.11 L524.23,418.11 L527.05,418.11 L529.87,418.11 L532.70,418.11 L535.52,418.11 L538.34,418.11 L541.16,418.11 L543.98,418.11 L546.80,418.11 L549.62,418.11 L552.44,418.11 L555.26,418.11 L558.08,418.11 L560.90,418.11 L563.72,418.11 L566.54,418.11 L569.36,418.11 L572.18,418.11 L575.01,418.11 L577.83,418.11 L580.65,418.11 L583.47,418.11 L586.29,418.11 L589.11,418.11 L591.93,418.11 L594.75,418.11 L597.57,418.11 L600.39,418.11 L603.21,418.11 L606.03,418.11 L608.85,418.11 L611.67,418.11 L614.49,418.11 L617.31,418.11 L620.14,418.11 L622.96,418.11 L625.78,418.11 L628.60,418.11 L631.42,418.11 L634.24,418.11 L637.06,418.11 L639.88,418.11 L642.70,418.11 L645.52,418.11 L648.34,418.11 L651.16,418.11 L653.98,418.11 L656.80,418.11 L659.62,418.11 L662.45,418.11 L665.27,418.11 L668.09,418.11 L670.91,418.11 L673.73,418.11 L676.55,418.11 L679.37,418.11 L682.19,418.11 L685.01,418.11 L687.83,418.11 L690.65,418.11 L693.47,418.11 L696.29,418.11 L699.11,418.11 L701.93,418.11 L704.75,418.11 L707.58,418.11 L710.40,418.11 L713.22,418.11 L716.04,418.11 L718.86,418.11 L721.68,418.11 L724.50,418.11 L727.32,418.11 L730.14,418.11 L732.96,418.11 L735.78,418.11 L738.60,418.11 L741.42,418.11 L744.24,418.11 L747.06,418.11 L749.89,418.11 L752.71,418.11 L755.53,418.11 L758.35,418.11 L761.17,418.11 L763.99,418.11 L766.81,418.11 L769.63,418.11 L772.45,418.11 L775.27,418.11 L778.09,418.11 L780.91,418.11 L783.73,418.11 L786.55,418.11 L789.37,418.11 L792.19,418.11 L795.02,418.11 L797.84,418.11 L800.66,418.11 L803.48,418.11 L806.30,418.11 L809.12,418.11 L811.94,418.11 L814.76,418.11 L817.58,418.11 L820.40,418.11 L823.22,418.11 L826.04,418.11 L828.86,418.11 L831.68,418.11 L834.50,418.11 L837.33,418.11 L840.15,418.11 L842.97,418.11 L845.79,418.11 L848.61,418.11 L851.43,418.11 L854.25,418.11 L857.07,418.11 L859.89,418.11 L862.71,418.11 L865.53,418.11 L868.35,418.11 L871.17,418.11 L873.99,418.11 L876.81,418.11 L879.63,418.11 L882.46,418.11 L885.28,418.11 L888.10,418.11 L890.92,418.11 L893.74,418.11 L896.56,418.11 L899.38,418.11 L902.20,418.11 L905.02,418.11 L907.84,418.11 L910.66,418.11 L913.48,418.11 L916.30,418.11 L919.12,418.11 L921.94,418.11 L924.77,418.11 L927.59,418.11 L930.41,418.11 L933.23,418.11 L936.05,418.11 L938.87,418.11 L941.69,418.11 L944.51,418.11 L947.33,418.11 L950.15,418.11 L952.97,418.11 L955.79,418.11 L958.61,418.11 L961.43,418.11 L964.25,418.11 L967.07,418.11 L969.90,418.11 L972.72,418.11 L975.54,418.11 L978.36,418.11 L981.18,418.11 L984.00,418.11 L986.82,418.11 L989.64,418.11 L992.46,418.11 L995.28,418.11 L998.10,418.11 L1000.92,418.11 L1003.74,418.11 L1006.56,418.11 L1009.38,418.11 L1012.21,418.11 L1015.03,418.11 L1017.85,418.11 L1020.67,418.11 L1023.49,418.11 L1026.31,418.11 L1029.13,418.11 L1031.95,418.11 L1034.77,418.11 L1037.59,418.11 L1040.41,418.11 L1043.23,418.11 L1046.05,418.11 L1048.87,418.11 L1051.69,418.11 L1054.51,418.11 L1057.34,418.11 L1060.16,418.11 L1062.98,418.11 L1065.80,418.11 L1068.62,418.11 L1071.44,418.11 L1074.26,418.11 L1077.08,418.11 L1079.90,418.11 L1082.72,418.11 L1085.54,418.11 L1088.36,418.11 L1091.18,418.11 L1094.00,418.11 L1096.82,418.11 L1099.65,418.11 L1102.47,418.11 L1105.29,418.11 L1108.11,418.11 L1110.93,418.11 L1113.75,418.11 L1116.57,418.11 L1119.39,418.11 L1122.21,418.11 L1125.03,418.11 L1127.85,418.11 L1130.67,418.11 L1133.49,418.11 L1136.31,418.11 L1139.13,418.11 L1141.95,418.11 L1144.78,418.11 L1147.60,418.11 L1150.42,418.11 L1153.24,418.11 L1156.06,418.11 L1158.88,418.11 L1161.70,418.11 L1164.52,418.11 L1167.34,418.11 L1170.16,418.11 L1172.98,418.11 L1175.80,418.11 L1178.62,418.11 L1181.44,418.11 L1184.26,418.11 L1187.09,418.11 L1189.91,418.11 L1192.73,418.11 L1195.55,418.11 L1198.37,418.11 L1201.19,418.11 L1204.01,418.11 L1206.83,418.11 L1209.65,418.11 L1212.47,418.11 L1215.29,418.11 L1218.11,418.11 L1220.93,418.11 L1223.75,418.11 L1226.57,418.11 L1229.39,418.11 L1232.22,418.11 L1235.04,418.11 L1237.86,418.11 L1240.68,418.11 L1243.50,418.11 L1246.32,418.11 L1249.14,418.11 L1251.96,418.11 L1254.78,418.11 L1257.60,418.11 L1260.42,418.11 L1263.24,418.11 L1266.06,418.11 L1268.88,418.11 L1271.70,418.11 L1274.53,418.11 L1277.35,418.11 L1280.17,418.11 L1282.99,418.11 L1285.81,418.11 L1288.63,418.11 L1291.45,418.11 L1294.27,418.11 L1297.09,418.11 L1299.91,418.11 L1302.73,418.11 L1305.55,418.11 L1308.37,418.11 L1311.19,418.11 L1314.01,418.11 L1316.83,418.11 L1319.66,418.11 L1322.48,418.11 L1325.30,418.11 L1328.12,418.11 L1330.94,418.11 L1333.76,418.11 L1336.58,418.11 L1339.40,418.11 L1342.22,418.11 L1345.04,418.11 L1347.86,418.11 L1350.68,418.11 L1353.50,418.11 L1356.32,418.11 L1359.14,418.11 L1361.97,418.11 L1364.79,418.11 L1367.61,418.11 L1370.43,418.11 L1373.25,418.11 L1376.07,418.11 L1378.89,418.11 L1381.71,418.11 L1384.53,418.11 L1387.35,418.11 L1390.17,418.11 L1392.99,418.11 L1395.81,418.11 L1398.63,418.11 L1401.45,418.11 L1404.27,418.11 L1407.10,418.11 L1409.92,418.11"/>
<path d="M341.08,369.25 L342.21,369.25 L345.35,369.25 L348.50,369.25 L351.65,369.25 L354.79,369.25 L357.94,369.25 L361.08,369.25 L364.23,369.25 L367.38,369.25 L370.52,369.25 L373.67,369.25 L376.81,369.25 L379.96,369.25 L383.11,369.25 L386.25,369.25 L389.40,369.25 L392.54,369.25 L395.69,369.25 L398.84,369.25 L401.98,369.25 L405.13,369.25 L408.27,369.25 L411.42,369.25 L414.57,369.25 L417.71,369.25 L420.86,369.25 L424.00,369.25 L427.15,369.25 L430.30,369.25 L433.44,369.25 L436.59,369.25 L439.73,369.25 L442.88,369.25 L446.03,369.25 L449.17,369.25 L452.32,369.25 L455.47,369.25 L458.61,369.25 L461.76,369.25 L464.90,369.25 L468.05,369.25 L471.20,369.25 L474.34,369.25 L477.49,369.25 L480.63,369.25 L483.78,369.25 L486.93,369.25 L490.07,369.25 L493.22,369.25 L496.36,369.25 L499.51,369.25 L502.66,369.25 L505.80,369.25 L508.95,369.25 L512.09,369.25 L515.24,369.25 L518.39,369.25 L521.53,369.25 L524.68,369.25 L527.82,369.25 L530.97,369.25 L534.12,369.25 L537.26,369.25 L540.41,369.25 L543.55,369.25 L546.70,369.25 L549.85,369.25 L552.99,369.25 L556.14,369.25 L559.28,369.25 L562.43,369.25 L565.58,369.25 L568.72,369.25 L571.87,369.25 L575.01,369.25 L578.16,369.25 L581.31,369.25 L584.45,369.25 L587.60,369.25 L590.74,369.25 L593.89,369.25 L597.04,369.25 L600.18,369.25 L603.33,369.25 L606.47,369.25 L609.62,369.25 L612.77,369.25 L615.91,369.25 L619.06,369.25 L622.20,369.25 L625.35,369.25 L628.50,369.25 L631.64,369.25 L634.79,369.25 L637.93,369.25 L641.08,369.25 L644.23,369.25 L647.37,369.25 L650.52,369.25 L653.66,369.25 L656.81,369.25 L659.96,369.25 L663.10,369.25 L666.25,369.25 L669.39,369.25 L672.54,369.25 L675.69,369.25 L678.83,369.25 L681.98,369.25 L685.12,369.25 L688.27,369.25 L691.42,369.25 L694.56,369.25 L697.71,369.25 L700.85,369.25 L704.00,369.25 L707.15,369.25 L710.29,369.25 L713.44,369.25 L716.58,369.25 L719.73,369.25 L722.88,369.25 L726.02,369.25 L729.17,369.25 L732.31,369.25 L735.46,369.25 L738.61,369.25 L741.75,369.25 L744.90,369.25 L748.04,369.25 L751.19,369.25 L754.34,369.25 L757.48,369.25 L760.63,369.25 L763.78,369.25 L766.92,369.25 L770.07,369.25 L773.21,369.25 L776.36,369.25 L779.51,369.25 L782.65,369.25 L785.80,369.25 L788.94,369.25 L792.09,369.25 L795.24,369.25 L798.38,369.25 L801.53,369.25 L804.67,369.25 L807.82,369.25 L810.97,369.25 L814.11,369.25 L817.26,369.25 L820.40,369.25 L823.55,369.25 L826.70,369.25 L829.84,369.25 L832.99,369.25 L836.13,369.25 L839.28,369.25 L842.43,369.25 L845.57,369.25 L848.72,369.25 L851.86,369.25 L855.01,369.25 L858.16,369.25 L861.30,369.25 L864.45,369.25 L867.59,369.25 L870.74,369.25 L873.89,369.25 L877.03,369.25 L880.18,369.25 L883.32,369.25 L886.47,369.25 L889.62,369.25 L892.76,369.25 L895.91,369.25 L899.05,369.25 L902.20,369.25 L905.35,369.25 L908.49,369.25 L911.64,369.25 L914.78,369.25 L917.93,369.25 L921.08,369.25 L924.22,369.25 L927.37,369.25 L930.51,369.25 L933.66,369.25 L936.81,369.25 L939.95,369.25 L943.10,369.25 L946.24,369.25 L949.39,369.25 L952.54,369.25 L955.68,369.25 L958.83,369.25 L961.97,369.25 L965.12,369.25 L968.27,369.25 L971.41,369.25 L974.56,369.25 L977.70,369.25 L980.85,369.25 L984.00,369.25 L987.14,369.25 L990.29,369.25 L993.43,369.25 L996.58,369.25 L999.73,369.25 L1002.87,369.25 L1006.02,369.25 L1009.16,369.25 L1012.31,369.25 L1015.46,369.25 L1018.60,369.25 L1021.75,369.25 L1024.89,369.25 L1028.04,369.25 L1031.19,369.25 L1034.33,369.25 L1037.48,369.25 L1040.62,369.25 L1043.77,369.25 L1046.92,369.25 L1050.06,369.25 L1053.21,369.25 L1056.36,369.25 L1059.50,369.25 L1062.65,369.25 L1065.79,369.25 L1068.94,369.25 L1072.09,369.25 L1075.23,369.25 L1078.38,369.25 L1081.52,369.25 L1084.67,369.25 L1087.82,369.25 L1090.96,369.25 L1094.11,369.25 L1097.25,369.25 L1100.40,369.25 L1103.55,369.25 L1106.69,369.25 L1109.84,369.25 L1112.98,369.25 L1116.13,369.25 L1119.28,369.25 L1122.42,369.25 L1125.57,369.25 L1128.71,369.25 L1131.86,369.25 L1135.01,369.25 L1138.15,369.25 L1141.30,369.25 L1144.44,369.25 L1147.59,369.25 L1150.74,369.25 L1153.88,369.25 L1157.03,369.25 L1160.17,369.25 L1163.32,369.25 L1166.47,369.25 L1169.61,369.25 L1172.76,369.25 L1175.90,369.25 L1179.05,369.25 L1182.20,369.25 L1185.34,369.25 L1188.49,369.25 L1191.63,369.25 L1194.78,369.25 L1197.93,369.25 L1201.07,369.25 L1204.22,369.25 L1207.36,369.25 L1210.51,369.25 L1213.66,369.25 L1216.80,369.25 L1219.95,369.25 L1223.09,369.25 L1226.24,369.25 L1229.39,369.25 L1232.53,369.25 L1235.68,369.25 L1238.82,369.25 L1241.97,369.25 L1245.12,369.25 L1248.26,369.25 L1251.41,369.25 L1254.55,369.25 L1257.70,369.25 L1260.85,369.25 L1263.99,369.25 L1267.14,369.25 L1270.28,369.25 L1273.43,369.25 L1276.58,369.25 L1279.72,369.25 L1282.87,369.25 L1286.01,369.25 L1289.16,369.25 L1292.31,369.25 L1295.45,369.25 L1298.60,369.25 L1301.74,369.25 L1304.89,369.25 L1308.04,369.25 L1311.18,369.25 L1314.33,369.25 L1317.47,369.25 L1320.62,369.25 L1323.77,369.25 L1326.91,369.25 L1330.06,369.25 L1333.20,369.25 L1336.35,369.25 L1339.50,369.25 L1342.64,369.25 L1345.79,369.25 L1348.93,369.25 L1352.08,369.25 L1355.23,369.25 L1358.37,369.25 L1361.52,369.25 L1364.67,369.25 L1367.81,369.25 L1370.96,369.25 L1374.10,369.25 L1377.25,369.25 L1380.40,369.25 L1383.54,369.25 L1386.69,369.25 L1389.83,369.25 L1392.98,369.25 L1396.13,369.25 L1399.27,369.25 L1402.42,369.25 L1405.56,369.25 L1408.71,369.25 L1411.86,369.25 L1415.00,369.25 L1418.15,369.25 L1421.29,369.25 L1424.44,369.25 L1427.59,369.25 L1430.73,369.25 L1433.88,369.25 L1437.02,369.25 L1440.17,369.25 L1443.32,369.25 L1446.46,369.25 L1449.61,369.25 L1452.75,369.25 L1455.90,369.25 L1459.05,369.25 L1462.19,369.25 L1465.34,369.25 L1468.48,369.25"/>
<path d="M321.28,320.40 L322.45,320.40 L325.71,320.40 L328.97,320.40 L332.23,320.40 L335.48,320.40 L338.74,320.40 L342.00,320.40 L345.25,320.40 L348.51,320.40 L351.77,320.40 L355.02,320.40 L358.28,320.40 L361.54,320.40 L364.80,320.40 L368.05,320.40 L371.31,320.40 L374.57,320.40 L377.82,320.40 L381.08,320.40 L384.34,320.40 L387.59,320.40 L390.85,320.40 L394.11,320.40 L397.37,320.40 L400.62,320.40 L403.88,320.40 L407.14,320.40 L410.39,320.40 L413.65,320.40 L416.91,320.40 L420.16,320.40 L423.42,320.40 L426.68,320.40 L429.94,320.40 L433.19,320.40 L436.45,320.40 L439.71,320.40 L442.96,320.40 L446.22,320.40 L449.48,320.40 L452.73,320.40 L455.99,320.40 L459.25,320.40 L462.51,320.40 L465.76,320.40 L469.02,320.40 L472.28,320.40 L475.53,320.40 L478.79,320.40 L482.05,320.40 L485.30,320.40 L488.56,320.40 L491.82,320.40 L495.08,320.40 L498.33,320.40 L501.59,320.40 L504.85,320.40 L508.10,320.40 L511.36,320.40 L514.62,320.40 L517.87,320.40 L521.13,320.40 L524.39,320.40 L527.64,320.40 L530.90,320.40 L534.16,320.40 L537.42,320.40 L540.67,320.40 L543.93,320.40 L547.19,320.40 L550.44,320.40 L553.70,320.40 L556.96,320.40 L560.22,320.40 L563.47,320.40 L566.73,320.40 L569.99,320.40 L573.24,320.40 L576.50,320.40 L579.76,320.40 L583.01,320.40 L586.27,320.40 L589.53,320.40 L592.79,320.40 L596.04,320.40 L599.30,320.40 L602.56,320.40 L605.81,320.40 L609.07,320.40 L612.33,320.40 L615.58,320.40 L618.84,320.40 L622.10,320.40 L625.36,320.40 L628.61,320.40 L631.87,320.40 L635.13,320.40 L638.38,320.40 L641.64,320.40 L644.90,320.40 L648.15,320.40 L651.41,320.40 L654.67,320.40 L657.93,320.40 L661.18,320.40 L664.44,320.40 L667.70,320.40 L670.95,320.40 L674.21,320.40 L677.47,320.40 L680.72,320.40 L683.98,320.40 L687.24,320.40 L690.50,320.40 L693.75,320.40 L697.01,320.40 L700.27,320.40 L703.52,320.40 L706.78,320.40 L710.04,320.40 L713.29,320.40 L716.55,320.40 L719.81,320.40 L723.07,320.40 L726.32,320.40 L729.58,320.40 L732.84,320.40 L736.09,320.40 L739.35,320.40 L742.61,320.40 L745.86,320.40 L749.12,320.40 L752.38,320.40 L755.63,320.40 L758.89,320.40 L762.15,320.40 L765.41,320.40 L768.66,320.40 L771.92,320.40 L775.18,320.40 L778.43,320.40 L781.69,320.40 L784.95,320.40 L788.21,320.40 L791.46,320.40 L794.72,320.40 L797.98,320.40 L801.23,320.40 L804.49,320.40 L807.75,320.40 L811.00,320.40 L814.26,320.40 L817.52,320.40 L820.78,320.40 L824.03,320.40 L827.29,320.40 L830.55,320.40 L833.80,320.40 L837.06,320.40 L840.32,320.40 L843.57,320.40 L846.83,320.40 L850.09,320.40 L853.35,320.40 L856.60,320.40 L859.86,320.40 L863.12,320.40 L866.37,320.40 L869.63,320.40 L872.89,320.40 L876.14,320.40 L879.40,320.40 L882.66,320.40 L885.92,320.40 L889.17,320.40 L892.43,320.40 L895.69,320.40 L898.94,320.40 L902.20,320.40 L905.46,320.40 L908.71,320.40 L911.97,320.40 L915.23,320.40 L918.49,320.40 L921.74,320.40 L925.00,320.40 L928.26,320.40 L931.51,320.40 L934.77,320.40 L938.03,320.40 L941.28,320.40 L944.54,320.40 L947.80,320.40 L951.06,320.40 L954.31,320.40 L957.57,320.40 L960.83,320.40 L964.08,320.40 L967.34,320.40 L970.60,320.40 L973.85,320.40 L977.11,320.40 L980.37,320.40 L983.62,320.40 L986.88,320.40 L990.14,320.40 L993.40,320.40 L996.65,320.40 L999.91,320.40 L1003.17,320.40 L1006.42,320.40 L1009.68,320.40 L1012.94,320.40 L1016.20,320.40 L1019.45,320.40 L1022.71,320.40 L1025.97,320.40 L1029.22,320.40 L1032.48,320.40 L1035.74,320.40 L1038.99,320.40 L1042.25,320.40 L1045.51,320.40 L1048.77,320.40 L1052.02,320.40 L1055.28,320.40 L1058.54,320.40 L1061.79,320.40 L1065.05,320.40 L1068.31,320.40 L1071.56,320.40 L1074.82,320.40 L1078.08,320.40 L1081.34,320.40 L1084.59,320.40 L1087.85,320.40 L1091.11,320.40 L1094.36,320.40 L1097.62,320.40 L1100.88,320.40 L1104.13,320.40 L1107.39,320.40 L1110.65,320.40 L1113.90,320.40 L1117.16,320.40 L1120.42,320.40 L1123.68,320.40 L1126.93,320.40 L1130.19,320.40 L1133.45,320.40 L1136.70,320.40 L1139.96,320.40 L1143.22,320.40 L1146.48,320.40 L1149.73,320.40 L1152.99,320.40 L1156.25,320.40 L1159.50,320.40 L1162.76,320.40 L1166.02,320.40 L1169.27,320.40 L1172.53,320.40 L1175.79,320.40 L1179.05,320.40 L1182.30,320.40 L1185.56,320.40 L1188.82,320.40 L1192.07,320.40 L1195.33,320.40 L1198.59,320.40 L1201.84,320.40 L1205.10,320.40 L1208.36,320.40 L1211.62,320.40 L1214.87,320.40 L1218.13,320.40 L1221.39,320.40 L1224.64,320.40 L1227.90,320.40 L1231.16,320.40 L1234.41,320.40 L1237.67,320.40 L1240.93,320.40 L1244.18,320.40 L1247.44,320.40 L1250.70,320.40 L1253.96,320.40 L1257.21,320.40 L1260.47,320.40 L1263.73,320.40 L1266.98,320.40 L1270.24,320.40 L1273.50,320.40 L1276.76,320.40 L1280.01,320.40 L1283.27,320.40 L1286.53,320.40 L1289.78,320.40 L1293.04,320.40 L1296.30,320.40 L1299.55,320.40 L1302.81,320.40 L1306.07,320.40 L1309.33,320.40 L1312.58,320.40 L1315.84,320.40 L1319.10,320.40 L1322.35,320.40 L1325.61,320.40 L1328.87,320.40 L1332.12,320.40 L1335.38,320.40 L1338.64,320.40 L1341.89,320.40 L1345.15,320.40 L1348.41,320.40 L1351.67,320.40 L1354.92,320.40 L1358.18,320.40 L1361.44,320.40 L1364.69,320.40 L1367.95,320.40 L1371.21,320.40 L1374.47,320.40 L1377.72,320.40 L1380.98,320.40 L1384.24,320.40 L1387.49,320.40 L1390.75,320.40 L1394.01,320.40 L1397.26,320.40 L1400.52,320.40 L1403.78,320.40 L1407.04,320.40 L1410.29,320.40 L1413.55,320.40 L1416.81,320.40 L1420.06,320.40 L1423.32,320.40 L1426.58,320.40 L1429.83,320.40 L1433.09,320.40 L1436.35,320.40 L1439.61,320.40 L1442.86,320.40 L1446.12,320.40 L1449.38,320.40 L1452.63,320.40 L1455.89,320.40 L1459.15,320.40 L1462.40,320.40 L1465.66,320.40 L1468.92,320.40 L1472.18,320.40 L1475.43,320.40 L1478.69,320.40 L1481.95,320.40 L1485.20,320.40 L1488.46,320.40"/>
<path d="M341.08,271.54 L342.21,271.54 L345.35,271.54 L348.50,271.54 L351.65,271.54 L354.79,271.54 L357.94,271.54 L361.08,271.54 L364.23,271.54 L367.38,271.54 L370.52,271.54 L373.67,271.54 L376.81,271.54 L379.96,271.54 L383.11,271.54 L386.25,271.54 L389.40,271.54 L392.54,271.54 L395.69,271.54 L398.84,271.54 L401.98,271.54 L405.13,271.54 L408.27,271.54 L411.42,271.54 L414.57,271.54 L417.71,271.54 L420.86,271.54 L424.00,271.54 L427.15,271.54 L430.30,271.54 L433.44,271.54 L436.59,271.54 L439.73,271.54 L442.88,271.54 L446.03,271.54 L449.17,271.54 L452.32,271.54 L455.47,271.54 L458.61,271.54 L461.76,271.54 L464.90,271.54 L468.05,271.54 L471.20,271.54 L474.34,271.54 L477.49,271.54 L480.63,271.54 L483.78,271.54 L486.93,271.54 L490.07,271.54 L493.22,271.54 L496.36,271.54 L499.51,271.54 L502.66,271.54 L505.80,271.54 L508.95,271.54 L512.09,271.54 L515.24,271.54 L518.39,271.54 L521.53,271.54 L524.68,271.54 L527.82,271.54 L530.97,271.54 L534.12,271.54 L537.26,271.54 L540.41,271.54 L543.55,271.54 L546.70,271.54 L549.85,271.54 L552.99,271.54 L556.14,271.54 L559.28,271.54 L562.43,271.54 L565.58,271.54 L568.72,271.54 L571.87,271.54 L575.01,271.54 L578.16,271.54 L581.31,271.54 L584.45,271.54 L587.60,271.54 L590.74,271.54 L593.89,271.54 L597.04,271.54 L600.18,271.54 L603.33,271.54 L606.47,271.54 L609.62,271.54 L612.77,271.54 L615.91,271.54 L619.06,271.54 L622.20,271.54 L625.35,271.54 L628.50,271.54 L631.64,271.54 L634.79,271.54 L637.93,271.54 L641.08,271.54 L644.23,271.54 L647.37,271.54 L650.52,271.54 L653.66,271.54 L656.81,271.54 L659.96,271.54 L663.10,271.54 L666.25,271.54 L669.39,271.54 L672.54,271.54 L675.69,271.54 L678.83,271.54 L681.98,271.54 L685.12,271.54 L688.27,271.54 L691.42,271.54 L694.56,271.54 L697.71,271.54 L700.85,271.54 L704.00,271.54 L707.15,271.54 L710.29,271.54 L713.44,271.54 L716.58,271.54 L719.73,271.54 L722.88,271.54 L726.02,271.54 L729.17,271.54 L732.31,271.54 L735.46,271.54 L738.61,271.54 L741.75,271.54 L744.90,271.54 L748.04,271.54 L751.19,271.54 L754.34,271.54 L757.48,271.54 L760.63,271.54 L763.78,271.54 L766.92,271.54 L770.07,271.54 L773.21,271.54 L776.36,271.54 L779.51,271.54 L782.65,271.54 L785.80,271.54 L788.94,271.54 L792.09,271.54 L795.24,271.54 L798.38,271.54 L801.53,271.54 L804.67,271.54 L807.82,271.54 L810.97,271.54 L814.11,271.54 L817.26,271.54 L820.40,271.54 L823.55,271.54 L826.70,271.54 L829.84,271.54 L832.99,271.54 L836.13,271.54 L839.28,271.54 L842.43,271.54 L845.57,271.54 L848.72,271.54 L851.86,271.54 L855.01,271.54 L858.16,271.54 L861.30,271.54 L864.45,271.54 L867.59,271.54 L870.74,271.54 L873.89,271.54 L877.03,271.54 L880.18,271.54 L883.32,271.54 L886.47,271.54 L889.62,271.54 L892.76,271.54 L895.91,271.54 L899.05,271.54 L902.20,271.54 L905.35,271.54 L908.49,271.54 L911.64,271.54 L914.78,271.54 L917.93,271.54 L921.08,271.54 L924.22,271.54 L927.37,271.54 L930.51,271.54 L933.66,271.54 L936.81,271.54 L939.95,271.54 L943.10,271.54 L946.24,271.54 L949.39,271.54 L952.54,271.54 L955.68,271.54 L958.83,271.54 L961.97,271.54 L965.12,271.54 L968.27,271.54 L971.41,271.54 L974.56,271.54 L977.70,271.54 L980.85,271.54 L984.00,271.54 L987.14,271.54 L990.29,271.54 L993.43,271.54 L996.58,271.54 L999.73,271.54 L1002.87,271.54 L1006.02,271.54 L1009.16,271.54 L1012.31,271.54 L1015.46,271.54 L1018.60,271.54 L1021.75,271.54 L1024.89,271.54 L1028.04,271.54 L1031.19,271.54 L1034.33,271.54 L1037.48,271.54 L1040.62,271.54 L1043.77,271.54 L1046.92,271.54 L1050.06,271.54 L1053.21,271.54 L1056.36,271.54 L1059.50,271.54 L1062.65,271.54 L1065.79,271.54 L1068.94,271.54 L1072.09,271.54 L1075.23,271.54 L1078.38,271.54 L1081.52,271.54 L1084.67,271.54 L1087.82,271.54 L1090.96,271.54 L1094.11,271.54 L1097.25,271.54 L1100.40,271.54 L1103.55,271.54 L1106.69,271.54 L1109.84,271.54 L1112.98,271.54 L1116.13,271.54 L1119.28,271.54 L1122.42,271.54 L1125.57,271.54 L1128.71,271.54 L1131.86,271.54 L1135.01,271.54 L1138.15,271.54 L1141.30,271.54 L1144.44,271.54 L1147.59,271.54 L1150.74,271.54 L1153.88,271.54 L1157.03,271.54 L1160.17,271.54 L1163.32,271.54 L1166.47,271.54 L1169.61,271.54 L1172.76,271.54 L1175.90,271.54 L1179.05,271.54 L1182.20,271.54 L1185.34,271.54 L1188.49,271.54 L1191.63,271.54 L1194.78,271.54 L1197.93,271.54 L1201.07,271.54 L1204.22,271.54 L1207.36,271.54 L1210.51,271.54 L1213.66,271.54 L1216.80,271.54 L1219.95,271.54 L1223.09,271.54 L1226.24,271.54 L1229.39,271.54 L1232.53,271.54 L1235.68,271.54 L1238.82,271.54 L1241.97,271.54 L1245.12,271.54 L1248.26,271.54 L1251.41,271.54 L1254.55,271.54 L1257.70,271.54 L1260.85,271.54 L1263.99,271.54 L1267.14,271.54 L1270.28,271.54 L1273.43,271.54 L1276.58,271.54 L1279.72,271.54 L1282.87,271.54 L1286.01,271.54 L1289.16,271.54 L1292.31,271.54 L1295.45,271.54 L1298.60,271.54 L1301.74,271.54 L1304.89,271.54 L1308.04,271.54 L1311.18,271.54 L1314.33,271.54 L1317.47,271.54 L1320.62,271.54 L1323.77,271.54 L1326.91,271.54 L1330.06,271.54 L1333.20,271.54 L1336.35,271.54 L1339.50,271.54 L1342.64,271.54 L1345.79,271.54 L1348.93,271.54 L1352.08,271.54 L1355.23,271.54 L1358.37,271.54 L1361.52,271.54 L1364.67,271.54 L1367.81,271.54 L1370.96,271.54 L1374.10,271.54 L1377.25,271.54 L1380.40,271.54 L1383.54,271.54 L1386.69,271.54 L1389.83,271.54 L1392.98,271.54 L1396.13,271.54 L1399.27,271.54 L1402.42,271.54 L1405.56,271.54 L1408.71,271.54 L1411.86,271.54 L1415.00,271.54 L1418.15,271.54 L1421.29,271.54 L1424.44,271.54 L1427.59,271.54 L1430.73,271.54 L1433.88,271.54 L1437.02,271.54 L1440.17,271.54 L1443.32,271.54 L1446.46,271.54 L1449.61,271.54 L1452.75,271.54 L1455.90,271.54 L1459.05,271.54 L1462.19,271.54 L1465.34,271.54 L1468.48,271.54"/>
<path d="M399.11,222.69 L400.13,222.69 L402.95,222.69 L405.77,222.69 L408.59,222.69 L411.41,222.69 L414.23,222.69 L417.05,222.69 L419.87,222.69 L422.69,222.69 L425.51,222.69 L428.33,222.69 L431.15,222.69 L433.97,222.69 L436.79,222.69 L439.61,222.69 L442.43,222.69 L445.26,222.69 L448.08,222.69 L450.90,222.69 L453.72,222.69 L456.54,222.69 L459.36,222.69 L462.18,222.69 L465.00,222.69 L467.82,222.69 L470.64,222.69 L473.46,222.69 L476.28,222.69 L479.10,222.69 L481.92,222.69 L484.74,222.69 L487.57,222.69 L490.39,222.69 L493.21,222.69 L496.03,222.69 L498.85,222.69 L501.67,222.69 L504.49,222.69 L507.31,222.69 L510.13,222.69 L512.95,222.69 L515.77,222.69 L518.59,222.69 L521.41,222.69 L524.23,222.69 L527.05,222.69 L529.87,222.69 L532.70,222.69 L535.52,222.69 L538.34,222.69 L541.16,222.69 L543.98,222.69 L546.80,222.69 L549.62,222.69 L552.44,222.69 L555.26,222.69 L558.08,222.69 L560.90,222.69 L563.72,222.69 L566.54,222.69 L569.36,222.69 L572.18,222.69 L575.01,222.69 L577.83,222.69 L580.65,222.69 L583.47,222.69 L586.29,222.69 L589.11,222.69 L591.93,222.69 L594.75,222.69 L597.57,222.69 L600.39,222.69 L603.21,222.69 L606.03,222.69 L608.85,222.69 L611.67,222.69 L614.49,222.69 L617.31,222.69 L620.14,222.69 L622.96,222.69 L625.78,222.69 L628.60,222.69 L631.42,222.69 L634.24,222.69 L637.06,222.69 L639.88,222.69 L642.70,222.69 L645.52,222.69 L648.34,222.69 L651.16,222.69 L653.98,222.69 L656.80,222.69 L659.62,222.69 L662.45,222.69 L665.27,222.69 L668.09,222.69 L670.91,222.69 L673.73,222.69 L676.55,222.69 L679.37,222.69 L682.19,222.69 L685.01,222.69 L687.83,222.69 L690.65,222.69 L693.47,222.69 L696.29,222.69 L699.11,222.69 L701.93,222.69 L704.75,222.69 L707.58,222.69 L710.40,222.69 L713.22,222.69 L716.04,222.69 L718.86,222.69 L721.68,222.69 L724.50,222.69 L727.32,222.69 L730.14,222.69 L732.96,222.69 L735.78,222.69 L738.60,222.69 L741.42,222.69 L744.24,222.69 L747.06,222.69 L749.89,222.69 L752.71,222.69 L755.53,222.69 L758.35,222.69 L761.17,222.69 L763.99,222.69 L766.81,222.69 L769.63,222.69 L772.45,222.69 L775.27,222.69 L778.09,222.69 L780.91,222.69 L783.73,222.69 L786.55,222.69 L789.37,222.69 L792.19,222.69 L795.02,222.69 L797.84,222.69 L800.66,222.69 L803.48,222.69 L806.30,222.69 L809.12,222.69 L811.94,222.69 L814.76,222.69 L817.58,222.69 L820.40,222.69 L823.22,222.69 L826.04,222.69 L828.86,222.69 L831.68,222.69 L834.50,222.69 L837.33,222.69 L840.15,222.69 L842.97,222.69 L845.79,222.69 L848.61,222.69 L851.43,222.69 L854.25,222.69 L857.07,222.69 L859.89,222.69 L862.71,222.69 L865.53,222.69 L868.35,222.69 L871.17,222.69 L873.99,222.69 L876.81,222.69 L879.63,222.69 L882.46,222.69 L885.28,222.69 L888.10,222.69 L890.92,222.69 L893.74,222.69 L896.56,222.69 L899.38,222.69 L902.20,222.69 L905.02,222.69 L907.84,222.69 L910.66,222.69 L913.48,222.69 L916.30,222.69 L919.12,222.69 L921.94,222.69 L924.77,222.69 L927.59,222.69 L930.41,222.69 L933.23,222.69 L936.05,222.69 L938.87,222.69 L941.69,222.69 L944.51,222.69 L947.33,222.69 L950.15,222.69 L952.97,222.69 L955.79,222.69 L958.61,222.69 L961.43,222.69 L964.25,222.69 L967.07,222.69 L969.90,222.69 L972.72,222.69 L975.54,222.69 L978.36,222.69 L981.18,222.69 L984.00,222.69 L986.82,222.69 L989.64,222.69 L992.46,222.69 L995.28,222.69 L998.10,222.69 L1000.92,222.69 L1003.74,222.69 L1006.56,222.69 L1009.38,222.69 L1012.21,222.69 L1015.03,222.69 L1017.85,222.69 L1020.67,222.69 L1023.49,222.69 L1026.31,222.69 L1029.13,222.69 L1031.95,222.69 L1034.77,222.69 L1037.59,222.69 L1040.41,222.69 L1043.23,222.69 L1046.05,222.69 L1048.87,222.69 L1051.69,222.69 L1054.51,222.69 L1057.34,222.69 L1060.16,222.69 L1062.98,222.69 L1065.80,222.69 L1068.62,222.69 L1071.44,222.69 L1074.26,222.69 L1077.08,222.69 L1079.90,222.69 L1082.72,222.69 L1085.54,222.69 L1088.36,222.69 L1091.18,222.69 L1094.00,222.69 L1096.82,222.69 L1099.65,222.69 L1102.47,222.69 L1105.29,222.69 L1108.11,222.69 L1110.93,222.69 L1113.75,222.69 L1116.57,222.69 L1119.39,222.69 L1122.21,222.69 L1125.03,222.69 L1127.85,222.69 L1130.67,222.69 L1133.49,222.69 L1136.31,222.69 L1139.13,222.69 L1141.95,222.69 L1144.78,222.69 L1147.60,222.69 L1150.42,222.69 L1153.24,222.69 L1156.06,222.69 L1158.88,222.69 L1161.70,222.69 L1164.52,222.69 L1167.34,222.69 L1170.16,222.69 L1172.98,222.69 L1175.80,222.69 L1178.62,222.69 L1181.44,222.69 L1184.26,222.69 L1187.09,222.69 L1189.91,222.69 L1192.73,222.69 L1195.55,222.69 L1198.37,222.69 L1201.19,222.69 L1204.01,222.69 L1206.83,222.69 L1209.65,222.69 L1212.47,222.69 L1215.29,222.69 L1218.11,222.69 L1220.93,222.69 L1223.75,222.69 L1226.57,222.69 L1229.39,222.69 L1232.22,222.69 L1235.04,222.69 L1237.86,222.69 L1240.68,222.69 L1243.50,222.69 L1246.32,222.69 L1249.14,222.69 L1251.96,222.69 L1254.78,222.69 L1257.60,222.69 L1260.42,222.69 L1263.24,222.69 L1266.06,222.69 L1268.88,222.69 L1271.70,222.69 L1274.53,222.69 L1277.35,222.69 L1280.17,222.69 L1282.99,222.69 L1285.81,222.69 L1288.63,222.69 L1291.45,222.69 L1294.27,222.69 L1297.09,222.69 L1299.91,222.69 L1302.73,222.69 L1305.55,222.69 L1308.37,222.69 L1311.19,222.69 L1314.01,222.69 L1316.83,222.69 L1319.66,222.69 L1322.48,222.69 L1325.30,222.69 L1328.12,222.69 L1330.94,222.69 L1333.76,222.69 L1336.58,222.69 L1339.40,222.69 L1342.22,222.69 L1345.04,222.69 L1347.86,222.69 L1350.68,222.69 L1353.50,222.69 L1356.32,222.69 L1359.14,222.69 L1361.97,222.69 L1364.79,222.69 L1367.61,222.69 L1370.43,222.69 L1373.25,222.69 L1376.07,222.69 L1378.89,222.69 L1381.71,222.69 L1384.53,222.69 L1387.35,222.69 L1390.17,222.69 L1392.99,222.69 L1395.81,222.69 L1398.63,222.69 L1401.45,222.69 L1404.27,222.69 L1407.10,222.69 L1409.92,222.69"/>
<path d="M491.43,173.83 L492.26,173.83 L494.56,173.83 L496.86,173.83 L499.17,173.83 L501.47,173.83 L503.77,173.83 L506.08,173.83 L508.38,173.83 L510.68,173.83 L512.99,173.83 L515.29,173.83 L517.59,173.83 L519.89,173.83 L522.20,173.83 L524.50,173.83 L526.80,173.83 L529.11,173.83 L531.41,173.83 L533.71,173.83 L536.02,173.83 L538.32,173.83 L540.62,173.83 L542.92,173.83 L545.23,173.83 L547.53,173.83 L549.83,173.83 L552.14,173.83 L554.44,173.83 L556.74,173.83 L559.05,173.83 L561.35,173.83 L563.65,173.83 L565.96,173.83 L568.26,173.83 L570.56,173.83 L572.86,173.83 L575.17,173.83 L577.47,173.83 L579.77,173.83 L582.08,173.83 L584.38,173.83 L586.68,173.83 L588.99,173.83 L591.29,173.83 L593.59,173.83 L595.89,173.83 L598.20,173.83 L600.50,173.83 L602.80,173.83 L605.11,173.83 L607.41,173.83 L609.71,173.83 L612.02,173.83 L614.32,173.83 L616.62,173.83 L618.93,173.83 L621.23,173.83 L623.53,173.83 L625.83,173.83 L628.14,173.83 L630.44,173.83 L632.74,173.83 L635.05,173.83 L637.35,173.83 L639.65,173.83 L641.96,173.83 L644.26,173.83 L646.56,173.83 L648.86,173.83 L651.17,173.83 L653.47,173.83 L655.77,173.83 L658.08,173.83 L660.38,173.83 L662.68,173.83 L664.99,173.83 L667.29,173.83 L669.59,173.83 L671.90,173.83 L674.20,173.83 L676.50,173.83 L678.80,173.83 L681.11,173.83 L683.41,173.83 L685.71,173.83 L688.02,173.83 L690.32,173.83 L692.62,173.83 L694.93,173.83 L697.23,173.83 L699.53,173.83 L701.83,173.83 L704.14,173.83 L706.44,173.83 L708.74,173.83 L711.05,173.83 L713.35,173.83 L715.65,173.83 L717.96,173.83 L720.26,173.83 L722.56,173.83 L724.87,173.83 L727.17,173.83 L729.47,173.83 L731.77,173.83 L734.08,173.83 L736.38,173.83 L738.68,173.83 L740.99,173.83 L743.29,173.83 L745.59,173.83 L747.90,173.83 L750.20,173.83 L752.50,173.83 L754.81,173.83 L757.11,173.83 L759.41,173.83 L761.71,173.83 L764.02,173.83 L766.32,173.83 L768.62,173.83 L770.93,173.83 L773.23,173.83 L775.53,173.83 L777.84,173.83 L780.14,173.83 L782.44,173.83 L784.74,173.83 L787.05,173.83 L789.35,173.83 L791.65,173.83 L793.96,173.83 L796.26,173.83 L798.56,173.83 L800.87,173.83 L803.17,173.83 L805.47,173.83 L807.78,173.83 L810.08,173.83 L812.38,173.83 L814.68,173.83 L816.99,173.83 L819.29,173.83 L821.59,173.83 L823.90,173.83 L826.20,173.83 L828.50,173.83 L830.81,173.83 L833.11,173.83 L835.41,173.83 L837.71,173.83 L840.02,173.83 L842.32,173.83 L844.62,173.83 L846.93,173.83 L849.23,173.83 L851.53,173.83 L853.84,173.83 L856.14,173.83 L858.44,173.83 L860.75,173.83 L863.05,173.83 L865.35,173.83 L867.65,173.83 L869.96,173.83 L872.26,173.83 L874.56,173.83 L876.87,173.83 L879.17,173.83 L881.47,173.83 L883.78,173.83 L886.08,173.83 L888.38,173.83 L890.68,173.83 L892.99,173.83 L895.29,173.83 L897.59,173.83 L899.90,173.83 L902.20,173.83 L904.50,173.83 L906.81,173.83 L909.11,173.83 L911.41,173.83 L913.72,173.83 L916.02,173.83 L918.32,173.83 L920.62,173.83 L922.93,173.83 L925.23,173.83 L927.53,173.83 L929.84,173.83 L932.14,173.83 L934.44,173.83 L936.75,173.83 L939.05,173.83 L941.35,173.83 L943.65,173.83 L945.96,173.83 L948.26,173.83 L950.56,173.83 L952.87,173.83 L955.17,173.83 L957.47,173.83 L959.78,173.83 L962.08,173.83 L964.38,173.83 L966.69,173.83 L968.99,173.83 L971.29,173.83 L973.59,173.83 L975.90,173.83 L978.20,173.83 L980.50,173.83 L982.81,173.83 L985.11,173.83 L987.41,173.83 L989.72,173.83 L992.02,173.83 L994.32,173.83 L996.62,173.83 L998.93,173.83 L1001.23,173.83 L1003.53,173.83 L1005.84,173.83 L1008.14,173.83 L1010.44,173.83 L1012.75,173.83 L1015.05,173.83 L1017.35,173.83 L1019.66,173.83 L1021.96,173.83 L1024.26,173.83 L1026.56,173.83 L1028.87,173.83 L1031.17,173.83 L1033.47,173.83 L1035.78,173.83 L1038.08,173.83 L1040.38,173.83 L1042.69,173.83 L1044.99,173.83 L1047.29,173.83 L1049.59,173.83 L1051.90,173.83 L1054.20,173.83 L1056.50,173.83 L1058.81,173.83 L1061.11,173.83 L1063.41,173.83 L1065.72,173.83 L1068.02,173.83 L1070.32,173.83 L1072.63,173.83 L1074.93,173.83 L1077.23,173.83 L1079.53,173.83 L1081.84,173.83 L1084.14,173.83 L1086.44,173.83 L1088.75,173.83 L1091.05,173.83 L1093.35,173.83 L1095.66,173.83 L1097.96,173.83 L1100.26,173.83 L1102.57,173.83 L1104.87,173.83 L1107.17,173.83 L1109.47,173.83 L1111.78,173.83 L1114.08,173.83 L1116.38,173.83 L1118.69,173.83 L1120.99,173.83 L1123.29,173.83 L1125.60,173.83 L1127.90,173.83 L1130.20,173.83 L1132.50,173.83 L1134.81,173.83 L1137.11,173.83 L1139.41,173.83 L1141.72,173.83 L1144.02,173.83 L1146.32,173.83 L1148.63,173.83 L1150.93,173.83 L1153.23,173.83 L1155.54,173.83 L1157.84,173.83 L1160.14,173.83 L1162.44,173.83 L1164.75,173.83 L1167.05,173.83 L1169.35,173.83 L1171.66,173.83 L1173.96,173.83 L1176.26,173.83 L1178.57,173.83 L1180.87,173.83 L1183.17,173.83 L1185.47,173.83 L1187.78,173.83 L1190.08,173.83 L1192.38,173.83 L1194.69,173.83 L1196.99,173.83 L1199.29,173.83 L1201.60,173.83 L1203.90,173.83 L1206.20,173.83 L1208.51,173.83 L1210.81,173.83 L1213.11,173.83 L1215.41,173.83 L1217.72,173.83 L1220.02,173.83 L1222.32,173.83 L1224.63,173.83 L1226.93,173.83 L1229.23,173.83 L1231.54,173.83 L1233.84,173.83 L1236.14,173.83 L1238.44,173.83 L1240.75,173.83 L1243.05,173.83 L1245.35,173.83 L1247.66,173.83 L1249.96,173.83 L1252.26,173.83 L1254.57,173.83 L1256.87,173.83 L1259.17,173.83 L1261.48,173.83 L1263.78,173.83 L1266.08,173.83 L1268.38,173.83 L1270.69,173.83 L1272.99,173.83 L1275.29,173.83 L1277.60,173.83 L1279.90,173.83 L1282.20,173.83 L1284.51,173.83 L1286.81,173.83 L1289.11,173.83 L1291.41,173.83 L1293.72,173.83 L1296.02,173.83 L1298.32,173.83 L1300.63,173.83 L1302.93,173.83 L1305.23,173.83 L1307.54,173.83 L1309.84,173.83 L1312.14,173.83 L1314.45,173.83 L1316.75,173.83"/>
<path d="M611.74,124.98 L612.33,124.98 L613.96,124.98 L615.58,124.98 L617.21,124.98 L618.84,124.98 L620.47,124.98 L622.10,124.98 L623.73,124.98 L625.36,124.98 L626.98,124.98 L628.61,124.98 L630.24,124.98 L631.87,124.98 L633.50,124.98 L635.13,124.98 L636.75,124.98 L638.38,124.98 L640.01,124.98 L641.64,124.98 L643.27,124.98 L644.90,124.98 L646.53,124.98 L648.15,124.98 L649.78,124.98 L651.41,124.98 L653.04,124.98 L654.67,124.98 L656.30,124.98 L657.92,124.98 L659.55,124.98 L661.18,124.98 L662.81,124.98 L664.44,124.98 L666.07,124.98 L667.70,124.98 L669.32,124.98 L670.95,124.98 L672.58,124.98 L674.21,124.98 L675.84,124.98 L677.47,124.98 L679.10,124.98 L680.72,124.98 L682.35,124.98 L683.98,124.98 L685.61,124.98 L687.24,124.98 L688.87,124.98 L690.50,124.98 L692.12,124.98 L693.75,124.98 L695.38,124.98 L697.01,124.98 L698.64,124.98 L700.27,124.98 L701.89,124.98 L703.52,124.98 L705.15,124.98 L706.78,124.98 L708.41,124.98 L710.04,124.98 L711.67,124.98 L713.29,124.98 L714.92,124.98 L716.55,124.98 L718.18,124.98 L719.81,124.98 L721.44,124.98 L723.07,124.98 L724.69,124.98 L726.32,124.98 L727.95,124.98 L729.58,124.98 L731.21,124.98 L732.84,124.98 L734.46,124.98 L736.09,124.98 L737.72,124.98 L739.35,124.98 L740.98,124.98 L742.61,124.98 L744.24,124.98 L745.86,124.98 L747.49,124.98 L749.12,124.98 L750.75,124.98 L752.38,124.98 L754.01,124.98 L755.63,124.98 L757.26,124.98 L758.89,124.98 L760.52,124.98 L762.15,124.98 L763.78,124.98 L765.41,124.98 L767.03,124.98 L768.66,124.98 L770.29,124.98 L771.92,124.98 L773.55,124.98 L775.18,124.98 L776.81,124.98 L778.43,124.98 L780.06,124.98 L781.69,124.98 L783.32,124.98 L784.95,124.98 L786.58,124.98 L788.21,124.98 L789.83,124.98 L791.46,124.98 L793.09,124.98 L794.72,124.98 L796.35,124.98 L797.98,124.98 L799.60,124.98 L801.23,124.98 L802.86,124.98 L804.49,124.98 L806.12,124.98 L807.75,124.98 L809.38,124.98 L811.00,124.98 L812.63,124.98 L814.26,124.98 L815.89,124.98 L817.52,124.98 L819.15,124.98 L820.78,124.98 L822.40,124.98 L824.03,124.98 L825.66,124.98 L827.29,124.98 L828.92,124.98 L830.55,124.98 L832.17,124.98 L833.80,124.98 L835.43,124.98 L837.06,124.98 L838.69,124.98 L840.32,124.98 L841.95,124.98 L843.57,124.98 L845.20,124.98 L846.83,124.98 L848.46,124.98 L850.09,124.98 L851.72,124.98 L853.35,124.98 L854.97,124.98 L856.60,124.98 L858.23,124.98 L859.86,124.98 L861.49,124.98 L863.12,124.98 L864.74,124.98 L866.37,124.98 L868.00,124.98 L869.63,124.98 L871.26,124.98 L872.89,124.98 L874.52,124.98 L876.14,124.98 L877.77,124.98 L879.40,124.98 L881.03,124.98 L882.66,124.98 L884.29,124.98 L885.92,124.98 L887.54,124.98 L889.17,124.98 L890.80,124.98 L892.43,124.98 L894.06,124.98 L895.69,124.98 L897.31,124.98 L898.94,124.98 L900.57,124.98 L902.20,124.98 L903.83,124.98 L905.46,124.98 L907.09,124.98 L908.71,124.98 L910.34,124.98 L911.97,124.98 L913.60,124.98 L915.23,124.98 L916.86,124.98 L918.49,124.98 L920.11,124.98 L921.74,124.98 L923.37,124.98 L925.00,124.98 L926.63,124.98 L928.26,124.98 L929.88,124.98 L931.51,124.98 L933.14,124.98 L934.77,124.98 L936.40,124.98 L938.03,124.98 L939.66,124.98 L941.28,124.98 L942.91,124.98 L944.54,124.98 L946.17,124.98 L947.80,124.98 L949.43,124.98 L951.06,124.98 L952.68,124.98 L954.31,124.98 L955.94,124.98 L957.57,124.98 L959.20,124.98 L960.83,124.98 L962.45,124.98 L964.08,124.98 L965.71,124.98 L967.34,124.98 L968.97,124.98 L970.60,124.98 L972.23,124.98 L973.85,124.98 L975.48,124.98 L977.11,124.98 L978.74,124.98 L980.37,124.98 L982.00,124.98 L983.62,124.98 L985.25,124.98 L986.88,124.98 L988.51,124.98 L990.14,124.98 L991.77,124.98 L993.40,124.98 L995.02,124.98 L996.65,124.98 L998.28,124.98 L999.91,124.98 L1001.54,124.98 L1003.17,124.98 L1004.80,124.98 L1006.42,124.98 L1008.05,124.98 L1009.68,124.98 L1011.31,124.98 L1012.94,124.98 L1014.57,124.98 L1016.20,124.98 L1017.82,124.98 L1019.45,124.98 L1021.08,124.98 L1022.71,124.98 L1024.34,124.98 L1025.97,124.98 L1027.59,124.98 L1029.22,124.98 L1030.85,124.98 L1032.48,124.98 L1034.11,124.98 L1035.74,124.98 L1037.37,124.98 L1038.99,124.98 L1040.62,124.98 L1042.25,124.98 L1043.88,124.98 L1045.51,124.98 L1047.14,124.98 L1048.77,124.98 L1050.39,124.98 L1052.02,124.98 L1053.65,124.98 L1055.28,124.98 L1056.91,124.98 L1058.54,124.98 L1060.16,124.98 L1061.79,124.98 L1063.42,124.98 L1065.05,124.98 L1066.68,124.98 L1068.31,124.98 L1069.94,124.98 L1071.56,124.98 L1073.19,124.98 L1074.82,124.98 L1076.45,124.98 L1078.08,124.98 L1079.71,124.98 L1081.34,124.98 L1082.96,124.98 L1084.59,124.98 L1086.22,124.98 L1087.85,124.98 L1089.48,124.98 L1091.11,124.98 L1092.73,124.98 L1094.36,124.98 L1095.99,124.98 L1097.62,124.98 L1099.25,124.98 L1100.88,124.98 L1102.51,124.98 L1104.13,124.98 L1105.76,124.98 L1107.39,124.98 L1109.02,124.98 L1110.65,124.98 L1112.28,124.98 L1113.91,124.98 L1115.53,124.98 L1117.16,124.98 L1118.79,124.98 L1120.42,124.98 L1122.05,124.98 L1123.68,124.98 L1125.30,124.98 L1126.93,124.98 L1128.56,124.98 L1130.19,124.98 L1131.82,124.98 L1133.45,124.98 L1135.08,124.98 L1136.70,124.98 L1138.33,124.98 L1139.96,124.98 L1141.59,124.98 L1143.22,124.98 L1144.85,124.98 L1146.48,124.98 L1148.10,124.98 L1149.73,124.98 L1151.36,124.98 L1152.99,124.98 L1154.62,124.98 L1156.25,124.98 L1157.87,124.98 L1159.50,124.98 L1161.13,124.98 L1162.76,124.98 L1164.39,124.98 L1166.02,124.98 L1167.65,124.98 L1169.27,124.98 L1170.90,124.98 L1172.53,124.98 L1174.16,124.98 L1175.79,124.98 L1177.42,124.98 L1179.05,124.98 L1180.67,124.98 L1182.30,124.98 L1183.93,124.98 L1185.56,124.98 L1187.19,124.98 L1188.82,124.98 L1190.44,124.98 L1192.07,124.98 L1193.70,124.98 L1195.33,124.98"/>
<path d="M751.85,76.12 L752.15,76.12 L752.99,76.12 L753.84,76.12 L754.68,76.12 L755.52,76.12 L756.37,76.12 L757.21,76.12 L758.05,76.12 L758.89,76.12 L759.74,76.12 L760.58,76.12 L761.42,76.12 L762.27,76.12 L763.11,76.12 L763.95,76.12 L764.80,76.12 L765.64,76.12 L766.48,76.12 L767.32,76.12 L768.17,76.12 L769.01,76.12 L769.85,76.12 L770.70,76.12 L771.54,76.12 L772.38,76.12 L773.23,76.12 L774.07,76.12 L774.91,76.12 L775.75,76.12 L776.60,76.12 L777.44,76.12 L778.28,76.12 L779.13,76.12 L779.97,76.12 L780.81,76.12 L781.65,76.12 L782.50,76.12 L783.34,76.12 L784.18,76.12 L785.03,76.12 L785.87,76.12 L786.71,76.12 L787.56,76.12 L788.40,76.12 L789.24,76.12 L790.08,76.12 L790.93,76.12 L791.77,76.12 L792.61,76.12 L793.46,76.12 L794.30,76.12 L795.14,76.12 L795.99,76.12 L796.83,76.12 L797.67,76.12 L798.51,76.12 L799.36,76.12 L800.20,76.12 L801.04,76.12 L801.89,76.12 L802.73,76.12 L803.57,76.12 L804.42,76.12 L805.26,76.12 L806.10,76.12 L806.94,76.12 L807.79,76.12 L808.63,76.12 L809.47,76.12 L810.32,76.12 L811.16,76.12 L812.00,76.12 L812.84,76.12 L813.69,76.12 L814.53,76.12 L815.37,76.12 L816.22,76.12 L817.06,76.12 L817.90,76.12 L818.75,76.12 L819.59,76.12 L820.43,76.12 L821.27,76.12 L822.12,76.12 L822.96,76.12 L823.80,76.12 L824.65,76.12 L825.49,76.12 L826.33,76.12 L827.18,76.12 L828.02,76.12 L828.86,76.12 L829.70,76.12 L830.55,76.12 L831.39,76.12 L832.23,76.12 L833.08,76.12 L833.92,76.12 L834.76,76.12 L835.61,76.12 L836.45,76.12 L837.29,76.12 L838.13,76.12 L838.98,76.12 L839.82,76.12 L840.66,76.12 L841.51,76.12 L842.35,76.12 L843.19,76.12 L844.03,76.12 L844.88,76.12 L845.72,76.12 L846.56,76.12 L847.41,76.12 L848.25,76.12 L849.09,76.12 L849.94,76.12 L850.78,76.12 L851.62,76.12 L852.46,76.12 L853.31,76.12 L854.15,76.12 L854.99,76.12 L855.84,76.12 L856.68,76.12 L857.52,76.12 L858.37,76.12 L859.21,76.12 L860.05,76.12 L860.89,76.12 L861.74,76.12 L862.58,76.12 L863.42,76.12 L864.27,76.12 L865.11,76.12 L865.95,76.12 L866.80,76.12 L867.64,76.12 L868.48,76.12 L869.32,76.12 L870.17,76.12 L871.01,76.12 L871.85,76.12 L872.70,76.12 L873.54,76.12 L874.38,76.12 L875.22,76.12 L876.07,76.12 L876.91,76.12 L877.75,76.12 L878.60,76.12 L879.44,76.12 L880.28,76.12 L881.13,76.12 L881.97,76.12 L882.81,76.12 L883.65,76.12 L884.50,76.12 L885.34,76.12 L886.18,76.12 L887.03,76.12 L887.87,76.12 L888.71,76.12 L889.56,76.12 L890.40,76.12 L891.24,76.12 L892.08,76.12 L892.93,76.12 L893.77,76.12 L894.61,76.12 L895.46,76.12 L896.30,76.12 L897.14,76.12 L897.99,76.12 L898.83,76.12 L899.67,76.12 L900.51,76.12 L901.36,76.12 L902.20,76.12 L903.04,76.12 L903.89,76.12 L904.73,76.12 L905.57,76.12 L906.41,76.12 L907.26,76.12 L908.10,76.12 L908.94,76.12 L909.79,76.12 L910.63,76.12 L911.47,76.12 L912.32,76.12 L913.16,76.12 L914.00,76.12 L914.84,76.12 L915.69,76.12 L916.53,76.12 L917.37,76.12 L918.22,76.12 L919.06,76.12 L919.90,76.12 L920.75,76.12 L921.59,76.12 L922.43,76.12 L923.27,76.12 L924.12,76.12 L924.96,76.12 L925.80,76.12 L926.65,76.12 L927.49,76.12 L928.33,76.12 L929.18,76.12 L930.02,76.12 L930.86,76.12 L931.70,76.12 L932.55,76.12 L933.39,76.12 L934.23,76.12 L935.08,76.12 L935.92,76.12 L936.76,76.12 L937.60,76.12 L938.45,76.12 L939.29,76.12 L940.13,76.12 L940.98,76.12 L941.82,76.12 L942.66,76.12 L943.51,76.12 L944.35,76.12 L945.19,76.12 L946.03,76.12 L946.88,76.12 L947.72,76.12 L948.56,76.12 L949.41,76.12 L950.25,76.12 L951.09,76.12 L951.94,76.12 L952.78,76.12 L953.62,76.12 L954.46,76.12 L955.31,76.12 L956.15,76.12 L956.99,76.12 L957.84,76.12 L958.68,76.12 L959.52,76.12 L960.37,76.12 L961.21,76.12 L962.05,76.12 L962.89,76.12 L963.74,76.12 L964.58,76.12 L965.42,76.12 L966.27,76.12 L967.11,76.12 L967.95,76.12 L968.79,76.12 L969.64,76.12 L970.48,76.12 L971.32,76.12 L972.17,76.12 L973.01,76.12 L973.85,76.12 L974.70,76.12 L975.54,76.12 L976.38,76.12 L977.22,76.12 L978.07,76.12 L978.91,76.12 L979.75,76.12 L980.60,76.12 L981.44,76.12 L982.28,76.12 L983.13,76.12 L983.97,76.12 L984.81,76.12 L985.65,76.12 L986.50,76.12 L987.34,76.12 L988.18,76.12 L989.03,76.12 L989.87,76.12 L990.71,76.12 L991.56,76.12 L992.40,76.12 L993.24,76.12 L994.08,76.12 L994.93,76.12 L995.77,76.12 L996.61,76.12 L997.46,76.12 L998.30,76.12 L999.14,76.12 L999.98,76.12 L1000.83,76.12 L1001.67,76.12 L1002.51,76.12 L1003.36,76.12 L1004.20,76.12 L1005.04,76.12 L1005.89,76.12 L1006.73,76.12 L1007.57,76.12 L1008.41,76.12 L1009.26,76.12 L1010.10,76.12 L1010.94,76.12 L1011.79,76.12 L1012.63,76.12 L1013.47,76.12 L1014.32,76.12 L1015.16,76.12 L1016.00,76.12 L1016.84,76.12 L1017.69,76.12 L1018.53,76.12 L1019.37,76.12 L1020.22,76.12 L1021.06,76.12 L1021.90,76.12 L1022.75,76.12 L1023.59,76.12 L1024.43,76.12 L1025.27,76.12 L1026.12,76.12 L1026.96,76.12 L1027.80,76.12 L1028.65,76.12 L1029.49,76.12 L1030.33,76.12 L1031.17,76.12 L1032.02,76.12 L1032.86,76.12 L1033.70,76.12 L1034.55,76.12 L1035.39,76.12 L1036.23,76.12 L1037.08,76.12 L1037.92,76.12 L1038.76,76.12 L1039.60,76.12 L1040.45,76.12 L1041.29,76.12 L1042.13,76.12 L1042.98,76.12 L1043.82,76.12 L1044.66,76.12 L1045.51,76.12 L1046.35,76.12 L1047.19,76.12 L1048.03,76.12 L1048.88,76.12 L1049.72,76.12 L1050.56,76.12 L1051.41,76.12 L1052.25,76.12 L1053.09,76.12 L1053.94,76.12"/>
</g>
<g font-family="'DejaVu Sans','Liberation Sans',sans-serif">
<text transform="translate(903.3,25.4) scale(0.85,1)" text-anchor="middle" font-size="11.11" fill="#858585">+90<tspan dx="2.1" dy="-3.4" font-size="7.8">°</tspan></text>
<text transform="translate(903.3,123.1) scale(0.85,1)" text-anchor="middle" font-size="11.11" fill="#858585">+60<tspan dx="2.1" dy="-3.4" font-size="7.8">°</tspan></text>
<text transform="translate(903.3,220.8) scale(0.85,1)" text-anchor="middle" font-size="11.11" fill="#858585">+30<tspan dx="2.1" dy="-3.4" font-size="7.8">°</tspan></text>
<text transform="translate(903.3,330.2) scale(0.85,1)" text-anchor="middle" font-size="11.11" fill="#858585">+0<tspan dx="2.1" dy="-3.4" font-size="7.8">°</tspan></text>
<text transform="translate(903.3,427.9) scale(0.85,1)" text-anchor="middle" font-size="11.11" fill="#858585">−30<tspan dx="2.1" dy="-3.4" font-size="7.8">°</tspan></text>
<text transform="translate(903.3,525.6) scale(0.85,1)" text-anchor="middle" font-size="11.11" fill="#858585">−60<tspan dx="2.1" dy="-3.4" font-size="7.8">°</tspan></text>
<text transform="translate(903.3,624.0) scale(0.85,1)" text-anchor="middle" font-size="11.11" fill="#858585">−90<tspan dx="2.1" dy="-3.4" font-size="7.8">°</tspan></text>
<text transform="translate(317.0,330.2) scale(0.85,1)" text-anchor="middle" font-size="11.11" fill="#858585">+180<tspan dx="2.1" dy="-3.4" font-size="7.8">°</tspan></text>
<text transform="translate(414.8,330.2) scale(0.85,1)" text-anchor="middle" font-size="11.11" fill="#858585">+150<tspan dx="2.1" dy="-3.4" font-size="7.8">°</tspan></text>
<text transform="translate(512.5,330.2) scale(0.85,1)" text-anchor="middle" font-size="11.11" fill="#858585">+120<tspan dx="2.1" dy="-3.4" font-size="7.8">°</tspan></text>
<text transform="translate(610.2,330.2) scale(0.85,1)" text-anchor="middle" font-size="11.11" fill="#858585">+90<tspan dx="2.1" dy="-3.4" font-size="7.8">°</tspan></text>
<text transform="translate(707.9,330.2) scale(0.85,1)" text-anchor="middle" font-size="11.11" fill="#858585">+60<tspan dx="2.1" dy="-3.4" font-size="7.8">°</tspan></text>
<text transform="translate(805.6,330.2) scale(0.85,1)" text-anchor="middle" font-size="11.11" fill="#858585">+30<tspan dx="2.1" dy="-3.4" font-size="7.8">°</tspan></text>
<text transform="translate(903.3,330.2) scale(0.85,1)" text-anchor="middle" font-size="11.11" fill="#858585">+0<tspan dx="2.1" dy="-3.4" font-size="7.8">°</tspan></text>
<text transform="translate(1001.0,330.2) scale(0.85,1)" text-anchor="middle" font-size="11.11" fill="#858585">+330<tspan dx="2.1" dy="-3.4" font-size="7.8">°</tspan></text>
<text transform="translate(1098.7,330.2) scale(0.85,1)" text-anchor="middle" font-size="11.11" fill="#858585">+300<tspan dx="2.1" dy="-3.4" font-size="7.8">°</tspan></text>
<text transform="translate(1196.4,330.2) scale(0.85,1)" text-anchor="middle" font-size="11.11" fill="#858585">+270<tspan dx="2.1" dy="-3.4" font-size="7.8">°</tspan></text>
<text transform="translate(1294.1,330.2) scale(0.85,1)" text-anchor="middle" font-size="11.11" fill="#858585">+240<tspan dx="2.1" dy="-3.4" font-size="7.8">°</tspan></text>
<text transform="translate(1391.8,330.2) scale(0.85,1)" text-anchor="middle" font-size="11.11" fill="#858585">+210<tspan dx="2.1" dy="-3.4" font-size="7.8">°</tspan></text>
<text transform="translate(1489.6,330.2) scale(0.85,1)" text-anchor="middle" font-size="11.11" fill="#858585">+180<tspan dx="2.1" dy="-3.4" font-size="7.8">°</tspan></text>
</g>
<g fill="none">
<path d="M814.00,413.00 L814.94,411.27 L815.88,409.54 L816.83,407.80 L817.78,406.06 L818.74,404.31 L819.71,402.56 L820.68,400.80 L821.66,399.04 L822.65,397.28 L823.64,395.51 L824.64,393.74 L825.65,391.96 L826.66,390.18 L827.68,388.39 L828.70,386.61 L829.73,384.82 L830.77,383.02 L831.82,381.22 L832.86,379.42 L833.92,377.62 L834.98,375.82 L836.05,374.01 L837.12,372.20 L838.20,370.38 L839.29,368.57 L840.38,366.75 L841.48,364.93 L842.58,363.11 L843.69,361.28 L844.80,359.46 L845.92,357.63 L847.04,355.80 L848.17,353.97 L849.31,352.14 L850.45,350.31 L851.59,348.47 L852.74,346.64 L853.89,344.80 L855.05,342.96 L856.22,341.12 L857.38,339.28 L858.56,337.44 L859.73,335.60 L860.91,333.76 L862.10,331.91 L863.29,330.07 L864.48,328.23 L865.67,326.38 L866.87,324.54 L868.08,322.70 L869.28,320.85 L870.49,319.01 L871.70,317.16 L872.92,315.32 L874.14,313.47 L875.36,311.63 L876.58,309.79 L877.81,307.94 L879.04,306.10 L880.27,304.26 L881.50,302.42 L882.74,300.58 L883.97,298.74 L885.21,296.90 L886.45,295.06 L887.69,293.23 L888.94,291.39 L890.18,289.56 L891.43,287.72 L892.67,285.89 L893.92,284.06 L895.17,282.23 L896.42,280.41 L897.67,278.58 L898.92,276.76 L900.17,274.94 L901.42,273.12 L902.67,271.30 L903.92,269.49 L905.17,267.68 L906.42,265.87 L907.67,264.06 L908.92,262.26 L910.17,260.46 L911.41,258.66 L912.66,256.86 L913.91,255.07 L915.15,253.28 L916.40,251.49 L917.64,249.71 L918.88,247.93 L920.12,246.16 L921.36,244.39 L922.60,242.62 L923.83,240.86 L925.06,239.10 L926.30,237.34 L927.53,235.59 L928.76,233.85 L929.98,232.11 L931.21,230.37 L932.43,228.64 L933.65,226.92 L934.87,225.20 L936.08,223.49 L937.30,221.78 L938.51,220.08 L939.72,218.38 L940.92,216.70 L942.13,215.02 L943.33,213.34 L944.53,211.67 L945.73,210.01 L946.92,208.36 L948.11,206.72 L949.31,205.08 L950.49,203.45 L951.68,201.83 L952.87,200.22 L954.05,198.62 L955.23,197.03 L956.41,195.45 L957.59,193.88 L958.76,192.31 L959.94,190.76 L961.11,189.22 L962.29,187.70 L963.46,186.18 L964.63,184.68 L965.80,183.18 L966.98,181.70 L968.15,180.24 L969.32,178.79 L970.49,177.35 L971.67,175.92 L972.84,174.52 L974.02,173.12 L975.20,171.75 L976.38,170.39 L977.57,169.04 L978.76,167.71 L979.95,166.41 L981.15,165.12 L982.35,163.84 L983.56,162.59 L984.77,161.36 L985.99,160.15 L987.22,158.96 L988.46,157.79 L989.71,156.65 L990.96,155.52 L992.23,154.43 L993.51,153.35 L994.80,152.30 L996.10,151.28 L997.42,150.28 L998.75,149.31 L1000.10,148.37 L1001.47,147.45 L1002.85,146.57 L1004.25,145.71 L1005.68,144.88 L1007.12,144.09 L1008.59,143.32 L1010.08,142.59 L1011.60,141.89 L1013.14,141.23 L1014.72,140.60 L1016.32,140.00 L1017.94,139.44 L1019.61,138.91 L1021.30,138.42 L1023.03,137.97 L1024.79,137.56 L1026.59,137.18 L1028.42,136.84 L1030.30,136.53 L1032.21,136.27 L1034.17,136.05 L1036.17,135.86 L1038.21,135.72 L1040.29,135.61 L1042.42,135.54 L1044.59,135.52 L1046.81,135.53 L1049.08,135.58 L1051.39,135.67 L1053.76,135.81 L1056.17,135.98 L1058.63,136.19 L1061.14,136.44 L1063.70,136.73 L1066.31,137.05 L1068.97,137.42 L1071.67,137.82 L1074.43,138.26 L1077.24,138.74 L1080.10,139.25 L1083.00,139.80" stroke="#3a3a3a" stroke-width="1.39" stroke-dasharray="1.39 2.29"/>
<path d="M1083.00,139.80 L1096.50,143.30" stroke="#7a7a7a" stroke-width="1.0"/>
<circle cx="1096.5" cy="143.3" r="0.9" fill="#8a8a8a"/>
<path d="M603.50,268.80 L603.91,267.75 L604.32,266.70 L604.75,265.65 L605.19,264.60 L605.63,263.55 L606.09,262.50 L606.55,261.45 L607.02,260.40 L607.51,259.35 L608.00,258.30 L608.50,257.25 L609.01,256.20 L609.53,255.16 L610.06,254.11 L610.60,253.06 L611.15,252.01 L611.70,250.96 L612.27,249.91 L612.84,248.86 L613.43,247.81 L614.02,246.76 L614.62,245.71 L615.24,244.66 L615.86,243.61 L616.49,242.56 L617.13,241.51 L617.77,240.46 L618.43,239.41 L619.10,238.36 L619.77,237.32 L620.45,236.27 L621.15,235.22 L621.85,234.17 L622.56,233.12 L623.28,232.07 L624.00,231.02 L624.74,229.97 L625.49,228.92 L626.24,227.87 L627.00,226.82 L627.77,225.77 L628.55,224.73 L629.34,223.68 L630.14,222.63 L630.95,221.58 L631.76,220.53 L632.58,219.48 L633.42,218.43 L634.26,217.38 L635.10,216.33 L635.96,215.28 L636.83,214.24 L637.70,213.19 L638.58,212.14 L639.47,211.09 L640.37,210.04 L641.28,208.99 L642.19,207.94 L643.12,206.89 L644.05,205.85 L644.99,204.80 L645.93,203.75 L646.89,202.70 L647.85,201.65 L648.82,200.60 L649.80,199.55 L650.79,198.51 L651.79,197.46 L652.79,196.41 L653.80,195.36 L654.82,194.31 L655.85,193.26 L656.88,192.22 L657.92,191.17 L658.97,190.12 L660.03,189.07 L661.10,188.02 L662.17,186.98 L663.25,185.93 L664.34,184.88 L665.43,183.83 L666.53,182.78 L667.64,181.74 L668.76,180.69 L669.89,179.64 L671.02,178.59 L672.16,177.55 L673.30,176.50 L674.46,175.45 L675.62,174.40 L676.78,173.36 L677.96,172.31 L679.14,171.26 L680.33,170.21 L681.52,169.17 L682.73,168.12 L683.93,167.07 L685.15,166.02 L686.37,164.98 L687.60,163.93 L688.84,162.88 L690.08,161.84 L691.33,160.79 L692.59,159.74 L693.85,158.70 L695.12,157.65 L696.39,156.60 L697.67,155.56 L698.96,154.51 L700.26,153.47 L701.56,152.42 L702.86,151.37 L704.18,150.33 L705.49,149.28 L706.82,148.24 L708.15,147.19 L709.49,146.15 L710.83,145.10 L712.18,144.05 L713.53,143.01 L714.89,141.96 L716.26,140.92 L717.63,139.87 L719.01,138.83 L720.39,137.79 L721.78,136.74 L723.17,135.70 L724.57,134.65 L725.97,133.61 L727.38,132.56 L728.80,131.52 L730.22,130.48 L731.64,129.43 L733.07,128.39 L734.51,127.35 L735.95,126.30 L737.39,125.26 L738.84,124.22 L740.30,123.18 L741.76,122.13 L743.22,121.09 L744.69,120.05 L746.17,119.01 L747.64,117.97 L749.13,116.93 L750.61,115.89 L752.10,114.85 L753.60,113.81 L755.10,112.77 L756.60,111.73 L758.11,110.69 L759.62,109.65 L761.14,108.61 L762.66,107.57 L764.18,106.53 L765.71,105.49 L767.24,104.46 L768.77,103.42 L770.31,102.38 L771.85,101.35 L773.40,100.31 L774.94,99.27 L776.49,98.24 L778.05,97.21 L779.60,96.17 L781.16,95.14 L782.73,94.11 L784.29,93.07 L785.86,92.04 L787.43,91.01 L789.00,89.98 L790.58,88.95 L792.15,87.92 L793.73,86.89 L795.31,85.87 L796.89,84.84 L798.48,83.81 L800.06,82.79 L801.65,81.77 L803.23,80.74 L804.82,79.72 L806.41,78.70 L808.00,77.68 L809.59,76.67 L811.18,75.65 L812.77,74.64 L814.36,73.62 L815.95,72.61 L817.54,71.60 L819.12,70.60 L820.71,69.59 L822.29,68.59 L823.87,67.59 L825.45,66.59 L827.02,65.60 L828.59,64.61 L830.15,63.62 L831.72,62.63 L833.27,61.65 L834.82,60.68 L836.36,59.71 L837.89,58.74 L839.41,57.78 L840.92,56.83 L842.42,55.88 L843.90,54.94 L845.37,54.01 L846.82,53.08 L848.25,52.17 L849.66,51.27 L851.04,50.38 L852.39,49.51 L853.71,48.65 L854.98,47.81 L856.21,46.99 L857.39,46.19 L858.51,45.42 L859.56,44.68 L860.52,43.97 L861.40,43.30 L862.16,42.68 L862.80,42.10 L863.30,41.57 L863.64,41.11 L863.79,40.71 L863.73,40.38 L863.45,40.13 L862.92,39.96M941.31,39.88 L940.28,39.89 L939.51,39.98 L938.99,40.16 L938.70,40.42 L938.63,40.76 L938.75,41.17 L939.04,41.65 L939.48,42.18 L940.06,42.77 L940.75,43.40 L941.54,44.08 L942.41,44.79 L943.36,45.54 L944.37,46.31 L945.44,47.11 L946.56,47.93 L947.72,48.78 L948.91,49.64 L950.14,50.51 L951.39,51.40 L952.67,52.31 L953.97,53.22 L955.29,54.14 L956.62,55.08 L957.97,56.02 L959.33,56.97 L960.71,57.92 L962.09,58.88 L963.48,59.85 L964.88,60.82 L966.29,61.80 L967.70,62.78 L969.12,63.77 L970.54,64.75 L971.97,65.75 L973.40,66.74 L974.84,67.74 L976.27,68.74 L977.71,69.74 L979.15,70.75 L980.59,71.75 L982.04,72.76 L983.48,73.77 L984.92,74.79 L986.37,75.80 L987.81,76.82 L989.26,77.84 L990.70,78.85 L992.15,79.87 L993.59,80.90 L995.03,81.92 L996.47,82.94 L997.91,83.97 L999.35,84.99 L1000.79,86.02 L1002.23,87.05 L1003.66,88.07 L1005.09,89.10 L1006.52,90.13 L1007.95,91.16 L1009.38,92.19 L1010.80,93.23 L1012.22,94.26 L1013.64,95.29 L1015.06,96.33 L1016.47,97.36 L1017.88,98.39 L1019.29,99.43 L1020.70,100.46 L1022.10,101.50" stroke="#22a884" stroke-width="1.39" stroke-dasharray="1.39 2.29"/>
<path d="M1022.10,101.50 L1056.00,126.80" stroke="#22a884" stroke-width="1.5"/>
<circle cx="1056.1" cy="126.9" r="1.05" fill="#f0553a"/>
<path d="M579.19,269.24 L578.67,270.50 L578.22,271.75 L577.87,272.99 L577.59,274.22 L577.40,275.43 L577.29,276.62 L577.27,277.80 L577.33,278.94 L577.47,280.06 L577.69,281.15 L577.99,282.21 L578.36,283.22 L578.82,284.20 L579.34,285.14 L579.94,286.04 L580.60,286.88 L581.32,287.68 L582.11,288.43 L582.95,289.12 L583.85,289.77 L584.80,290.35 L585.80,290.88 L586.84,291.35 L587.93,291.76 L589.05,292.11 L590.20,292.39 L591.38,292.61 L592.59,292.77 L593.82,292.87 L595.07,292.90 L596.34,292.87 L597.61,292.77 L598.90,292.61 L600.19,292.39 L601.49,292.11 L602.79,291.76 L604.08,291.35 L605.36,290.88 L606.64,290.35 L607.91,289.77 L609.16,289.12 L610.39,288.43 L611.61,287.68 L612.80,286.88 L613.98,286.04 L615.12,285.14 L616.24,284.20 L617.33,283.22 L618.38,282.21 L619.41,281.15 L620.40,280.06 L621.35,278.94 L622.26,277.80 L623.13,276.62 L623.96,275.43 L624.74,274.22 L625.48,272.99 L626.17,271.75 L626.82,270.50 L627.41,269.24 L627.95,267.98 L628.44,266.73 L628.87,265.47 L629.24,264.23 L629.56,262.99 L629.82,261.77 L630.02,260.57 L630.16,259.39 L630.24,258.24 L630.25,257.11 L630.20,256.02 L630.09,254.96 L629.91,253.93 L629.66,252.95 L629.35,252.01 L628.97,251.12 L628.52,250.27 L628.00,249.48 L627.42,248.74 L626.77,248.06 L626.06,247.43 L625.28,246.87 L624.44,246.37 L623.53,245.93 L622.57,245.55 L621.54,245.25 L620.46,245.01 L619.33,244.84 L618.14,244.73 L616.91,244.70 L615.62,244.73 L614.30,244.84 L612.94,245.01 L611.55,245.25 L610.12,245.55 L608.67,245.93 L607.20,246.37 L605.72,246.87 L604.22,247.43 L602.72,248.06 L601.22,248.74 L599.72,249.48 L598.23,250.27 L596.76,251.12 L595.30,252.01 L593.88,252.95 L592.48,253.93 L591.12,254.96 L589.80,256.02 L588.53,257.11 L587.30,258.24 L586.14,259.39 L585.03,260.57 L583.98,261.77 L583.00,262.99 L582.09,264.23 L581.25,265.47 L580.49,266.73 L579.80,267.98 L579.19,269.24Z" stroke="#22a884" stroke-width="2.08"/>
</g>
<path d="M601.0,268.9H606.0M603.5,266.4V271.4" stroke="#f00" stroke-width="1.2"/>
<text x="603.5" y="271.3" text-anchor="middle" font-family="'DejaVu Sans','Liberation Sans',sans-serif" font-size="10.4" fill="#fff">ORI</text>
<g font-family="'DejaVu Sans Mono','Liberation Mono',monospace" font-size="13.89" fill="#fff" style="white-space:pre">
<text x="316.1" y="29.5" letter-spacing="0.017">UK004M</text>
<text x="316.1" y="42.6" letter-spacing="0.017">Beg: 20251021 21:47:28 (sol = 208.40°)</text>
<text x="316.1" y="56.7" letter-spacing="0.017">End: 20251021 23:05:10 (sol = 208.45°)</text>
<text x="314.9" y="69.2" letter-spacing="0.017">--------------------------------------</text>
<text x="316.1" y="81.7" letter-spacing="0.017">...: 1</text>
<text x="316.1" y="95.0" letter-spacing="0.017">ORI: 1</text>
</g>
<g font-family="'DejaVu Sans','Liberation Sans',sans-serif">
<g clip-path="url(#cb)">
<text transform="translate(148.8,696.6) rotate(-90) scale(0.966,1)" font-size="27.78" fill="#505050">APR</text>
<text transform="translate(294.6,701.7) rotate(-90) scale(0.973,1)" font-size="27.78" fill="#505050">MAY</text>
<text transform="translate(435.9,688.2) rotate(-90) scale(0.945,1)" font-size="27.78" fill="#505050">JUN</text>
<text transform="translate(577.1,683.2) rotate(-90) scale(0.950,1)" font-size="27.78" fill="#505050">JUL</text>
<text transform="translate(723.9,701.6) rotate(-90) scale(0.964,1)" font-size="27.78" fill="#505050">AUG</text>
<text transform="translate(871.5,694.6) rotate(-90) scale(0.975,1)" font-size="27.78" fill="#505050">SEP</text>
<text transform="translate(1017.4,699.9) rotate(-90) scale(0.951,1)" font-size="27.78" fill="#505050">OCT</text>
<text transform="translate(1170.2,705.0) rotate(-90) scale(0.971,1)" font-size="27.78" fill="#505050">NOV</text>
<text transform="translate(1319.6,701.0) rotate(-90) scale(0.963,1)" font-size="27.78" fill="#505050">DEC</text>
<text transform="translate(1469.0,683.8) rotate(-90) scale(0.950,1)" font-size="27.78" fill="#505050">JAN</text>
<text transform="translate(1628.2,696.1) rotate(-90) scale(0.968,1)" font-size="27.78" fill="#505050">FEB</text>
<text transform="translate(1765.8,705.6) rotate(-90) scale(0.965,1)" font-size="27.78" fill="#505050">MAR</text>
<path d="M1042.4,842.5V641.5" stroke="#f00" stroke-width="1.5" stroke-dasharray="5.14 2.22" fill="none"/>
<path d="M106.1,834.0H130.0" stroke="#bddf26" stroke-width="4.17"/>
<path d="M165.0,834.0H345.0" stroke="#bddf26" stroke-width="4.17"/>
<path d="M366.1,834.0H624.9" stroke="#bddf26" stroke-width="4.17"/>
<path d="M636.1,834.0H787.0" stroke="#bddf26" stroke-width="4.17"/>
<path d="M806.9,834.0H899.9" stroke="#bddf26" stroke-width="4.17"/>
<path d="M919.9,834.0H972.9" stroke="#bddf26" stroke-width="4.17"/>
<path d="M983.9,834.0H1066.0" stroke="#bddf26" stroke-width="4.17"/>
<path d="M1081.9,834.0H1204.0" stroke="#bddf26" stroke-width="4.17"/>
<path d="M1243.9,834.0H1326.0" stroke="#bddf26" stroke-width="4.17"/>
<path d="M1337.1,834.0H1356.1" stroke="#bddf26" stroke-width="4.17"/>
<path d="M1380.8,834.0H1443.9" stroke="#bddf26" stroke-width="4.17"/>
<path d="M1459.0,834.0H1512.0" stroke="#bddf26" stroke-width="4.17"/>
<path d="M1523.0,834.0H1547.0" stroke="#bddf26" stroke-width="4.17"/>
<path d="M1723.9,834.0H1747.9" stroke="#bddf26" stroke-width="4.17"/>
<path d="M1758.0,834.0H1781.9" stroke="#bddf26" stroke-width="4.17"/>
<path d="M165.0,818.0H189.0" stroke="#81d34d" stroke-width="4.17"/>
<path d="M224.0,818.0H287.1" stroke="#81d34d" stroke-width="4.17"/>
<path d="M312.1,818.0H340.9" stroke="#81d34d" stroke-width="4.17"/>
<path d="M366.1,818.0H492.9" stroke="#81d34d" stroke-width="4.17"/>
<path d="M508.0,818.0H653.9" stroke="#81d34d" stroke-width="4.17"/>
<path d="M704.0,818.0H737.8" stroke="#81d34d" stroke-width="4.17"/>
<path d="M773.0,818.0H845.9" stroke="#81d34d" stroke-width="4.17"/>
<path d="M870.9,818.0H988.0" stroke="#81d34d" stroke-width="4.17"/>
<path d="M1003.1,818.0H1016.8" stroke="#81d34d" stroke-width="4.17"/>
<path d="M1062.0,818.0H1213.0" stroke="#81d34d" stroke-width="4.17"/>
<path d="M1243.9,818.0H1267.0" stroke="#81d34d" stroke-width="4.17"/>
<path d="M1293.0,818.0H1315.9" stroke="#81d34d" stroke-width="4.17"/>
<path d="M1342.0,818.0H1365.0" stroke="#81d34d" stroke-width="4.17"/>
<path d="M1386.0,818.0H1429.0" stroke="#81d34d" stroke-width="4.17"/>
<path d="M1459.0,818.0H1483.0" stroke="#81d34d" stroke-width="4.17"/>
<path d="M1548.1,818.0H1571.0" stroke="#81d34d" stroke-width="4.17"/>
<path d="M165.0,802.0H189.0" stroke="#4ec36b" stroke-width="4.17"/>
<path d="M258.1,802.0H487.9" stroke="#4ec36b" stroke-width="4.17"/>
<path d="M508.0,802.0H615.0" stroke="#4ec36b" stroke-width="4.17"/>
<path d="M626.0,802.0H717.9" stroke="#4ec36b" stroke-width="4.17"/>
<path d="M728.9,802.0H826.0" stroke="#4ec36b" stroke-width="4.17"/>
<path d="M949.1,802.0H1150.0" stroke="#4ec36b" stroke-width="4.17"/>
<path d="M1160.1,802.0H1247.8" stroke="#4ec36b" stroke-width="4.17"/>
<path d="M1258.1,802.0H1443.9" stroke="#4ec36b" stroke-width="4.17"/>
<path d="M1459.0,802.0H1483.0" stroke="#4ec36b" stroke-width="4.17"/>
<path d="M1553.1,802.0H1576.0" stroke="#4ec36b" stroke-width="4.17"/>
<path d="M194.0,785.0H218.3" stroke="#2ab07f" stroke-width="4.17"/>
<path d="M321.9,785.0H506.8" stroke="#2ab07f" stroke-width="4.17"/>
<path d="M518.1,785.0H541.8" stroke="#2ab07f" stroke-width="4.17"/>
<path d="M556.9,785.0H683.9" stroke="#2ab07f" stroke-width="4.17"/>
<path d="M806.9,785.0H830.9" stroke="#2ab07f" stroke-width="4.17"/>
<path d="M954.0,785.0H972.9" stroke="#2ab07f" stroke-width="4.17"/>
<path d="M988.9,785.0H1125.1" stroke="#2ab07f" stroke-width="4.17"/>
<path d="M1155.1,785.0H1217.9" stroke="#2ab07f" stroke-width="4.17"/>
<path d="M1243.9,785.0H1267.0" stroke="#2ab07f" stroke-width="4.17"/>
<path d="M1317.0,785.0H1341.0" stroke="#2ab07f" stroke-width="4.17"/>
<path d="M1395.9,785.0H1419.0" stroke="#2ab07f" stroke-width="4.17"/>
<path d="M1464.0,785.0H1650.0" stroke="#2ab07f" stroke-width="4.17"/>
<path d="M340.9,769.0H369.9" stroke="#1e9b8a" stroke-width="4.17"/>
<path d="M410.0,769.0H447.9" stroke="#1e9b8a" stroke-width="4.17"/>
<path d="M469.1,769.0H492.9" stroke="#1e9b8a" stroke-width="4.17"/>
<path d="M528.1,769.0H545.9" stroke="#1e9b8a" stroke-width="4.17"/>
<path d="M562.0,769.0H590.8" stroke="#1e9b8a" stroke-width="4.17"/>
<path d="M616.0,769.0H648.9" stroke="#1e9b8a" stroke-width="4.17"/>
<path d="M959.0,769.0H987.8" stroke="#1e9b8a" stroke-width="4.17"/>
<path d="M1062.0,769.0H1086.0" stroke="#1e9b8a" stroke-width="4.17"/>
<path d="M1100.9,769.0H1124.9" stroke="#1e9b8a" stroke-width="4.17"/>
<path d="M1160.1,769.0H1193.9" stroke="#1e9b8a" stroke-width="4.17"/>
<path d="M1248.9,769.0H1272.0" stroke="#1e9b8a" stroke-width="4.17"/>
<path d="M1425.1,769.0H1512.0" stroke="#1e9b8a" stroke-width="4.17"/>
<path d="M420.0,752.0H444.0" stroke="#25858e" stroke-width="4.17"/>
<path d="M533.1,752.0H556.0" stroke="#25858e" stroke-width="4.17"/>
<path d="M567.0,752.0H590.8" stroke="#25858e" stroke-width="4.17"/>
<path d="M621.0,752.0H742.9" stroke="#25858e" stroke-width="4.17"/>
<path d="M969.0,752.0H1135.0" stroke="#25858e" stroke-width="4.17"/>
<path d="M1185.0,752.0H1346.0" stroke="#25858e" stroke-width="4.17"/>
<path d="M1469.0,752.0H1493.0" stroke="#25858e" stroke-width="4.17"/>
<path d="M430.0,736.0H452.9" stroke="#2d708e" stroke-width="4.17"/>
<path d="M577.0,736.0H733.0" stroke="#2d708e" stroke-width="4.17"/>
<path d="M994.0,736.0H1105.0" stroke="#2d708e" stroke-width="4.17"/>
<path d="M1116.0,736.0H1222.9" stroke="#2d708e" stroke-width="4.17"/>
<path d="M1262.9,736.0H1291.9" stroke="#2d708e" stroke-width="4.17"/>
<path d="M1489.1,736.0H1512.0" stroke="#2d708e" stroke-width="4.17"/>
<path d="M592.1,720.0H615.0" stroke="#375a8c" stroke-width="4.17"/>
<path d="M655.1,720.0H771.9" stroke="#375a8c" stroke-width="4.17"/>
<path d="M1071.9,720.0H1243.0" stroke="#375a8c" stroke-width="4.17"/>
<path d="M1262.9,720.0H1286.9" stroke="#375a8c" stroke-width="4.17"/>
<path d="M596.0,703.0H733.0" stroke="#424086" stroke-width="4.17"/>
<path d="M1092.0,703.0H1120.1" stroke="#424086" stroke-width="4.17"/>
<path d="M1199.9,703.0H1222.9" stroke="#424086" stroke-width="4.17"/>
<path d="M1272.9,703.0H1326.0" stroke="#424086" stroke-width="4.17"/>
<path d="M1111.0,687.0H1135.0" stroke="#482475" stroke-width="4.17"/>
<path d="M75.0,842.5V641.5" stroke="#fff" stroke-opacity="0.4" stroke-width="2.083" stroke-dasharray="2.083 3.437" fill="none"/>
<path d="M219.0,842.5V641.5" stroke="#fff" stroke-opacity="0.4" stroke-width="2.083" stroke-dasharray="2.083 3.437" fill="none"/>
<path d="M364.9,842.5V641.5" stroke="#fff" stroke-opacity="0.4" stroke-width="2.083" stroke-dasharray="2.083 3.437" fill="none"/>
<path d="M505.9,842.5V641.5" stroke="#fff" stroke-opacity="0.4" stroke-width="2.083" stroke-dasharray="2.083 3.437" fill="none"/>
<path d="M651.2,842.5V641.5" stroke="#fff" stroke-opacity="0.4" stroke-width="2.083" stroke-dasharray="2.083 3.437" fill="none"/>
<path d="M796.8,842.5V641.5" stroke="#fff" stroke-opacity="0.4" stroke-width="2.083" stroke-dasharray="2.083 3.437" fill="none"/>
<path d="M940.0,842.5V641.5" stroke="#fff" stroke-opacity="0.4" stroke-width="2.083" stroke-dasharray="2.083 3.437" fill="none"/>
<path d="M1091.1,842.5V641.5" stroke="#fff" stroke-opacity="0.4" stroke-width="2.083" stroke-dasharray="2.083 3.437" fill="none"/>
<path d="M1239.1,842.5V641.5" stroke="#fff" stroke-opacity="0.4" stroke-width="2.083" stroke-dasharray="2.083 3.437" fill="none"/>
<path d="M1393.8,842.5V641.5" stroke="#fff" stroke-opacity="0.4" stroke-width="2.083" stroke-dasharray="2.083 3.437" fill="none"/>
<path d="M1548.1,842.5V641.5" stroke="#fff" stroke-opacity="0.4" stroke-width="2.083" stroke-dasharray="2.083 3.437" fill="none"/>
<path d="M1687.1,842.5V641.5" stroke="#fff" stroke-opacity="0.4" stroke-width="2.083" stroke-dasharray="2.083 3.437" fill="none"/>
<path d="M113.95,834.0H121.85M117.9,830.15V838.05M241.05,834.0H248.95M245.0,830.15V838.05M510.85,834.0H518.75M514.8,830.15V838.05M706.65,834.0H714.55M710.6,830.15V838.05M833.95,834.0H841.85M837.9,830.15V838.05M961.85,834.0H969.75M965.8,830.15V838.05M986.75,834.0H994.65M990.7,830.15V838.05M1116.65,834.0H1124.55M1120.6,830.15V838.05M1295.95,834.0H1303.85M1299.9,830.15V838.05M1341.85,834.0H1349.75M1345.8,830.15V838.05M1412.95,834.0H1420.85M1416.9,830.15V838.05M1481.75,834.0H1489.65M1485.7,830.15V838.05M1530.95,834.0H1538.85M1534.9,830.15V838.05M1731.85,834.0H1739.75M1735.8,830.15V838.05M1765.85,834.0H1773.75M1769.8,830.15V838.05M172.95,818.0H180.85M176.9,814.15V822.05M255.95,818.0H263.85M259.9,814.15V822.05M323.95,818.0H331.85M327.9,814.15V822.05M437.75,818.0H445.65M441.7,814.15V822.05M598.95,818.0H606.85M602.9,814.15V822.05M716.95,818.0H724.85M720.9,814.15V822.05M793.75,818.0H801.65M797.7,814.15V822.05M939.65,818.0H947.55M943.6,814.15V822.05M1005.95,818.0H1013.85M1009.9,814.15V822.05M1152.75,818.0H1160.65M1156.7,814.15V822.05M1250.95,818.0H1258.85M1254.9,814.15V822.05M1300.05,818.0H1307.95M1304.0,814.15V822.05M1349.85,818.0H1357.75M1353.8,814.15V822.05M1402.85,818.0H1410.75M1406.8,814.15V822.05M1466.95,818.0H1474.85M1470.9,814.15V822.05M1554.95,818.0H1562.85M1558.9,814.15V822.05M174.75,802.0H182.65M178.7,798.15V806.05M378.85,802.0H386.75M382.8,798.15V806.05M544.95,802.0H552.85M548.9,798.15V806.05M682.85,802.0H690.75M686.8,798.15V806.05M741.85,802.0H749.75M745.8,798.15V806.05M1074.75,802.0H1082.65M1078.7,798.15V806.05M1216.85,802.0H1224.75M1220.8,798.15V806.05M1304.85,802.0H1312.75M1308.8,798.15V806.05M1466.95,802.0H1474.85M1470.9,798.15V806.05M1559.95,802.0H1567.85M1563.9,798.15V806.05M201.95,785.0H209.85M205.9,781.15V789.05M400.95,785.0H408.85M404.9,781.15V789.05M525.95,785.0H533.85M529.9,781.15V789.05M638.85,785.0H646.75M642.8,781.15V789.05M814.85,785.0H822.75M818.8,781.15V789.05M959.65,785.0H967.55M963.6,781.15V789.05M1040.95,785.0H1048.85M1044.9,781.15V789.05M1187.75,785.0H1195.65M1191.7,781.15V789.05M1250.95,785.0H1258.85M1254.9,781.15V789.05M1324.95,785.0H1332.85M1328.9,781.15V789.05M1402.85,785.0H1410.75M1406.8,781.15V789.05M1545.95,785.0H1553.85M1549.9,781.15V789.05M355.95,769.0H363.85M359.9,765.15V773.05M426.85,769.0H434.75M430.8,765.15V773.05M476.85,769.0H484.75M480.8,765.15V773.05M535.85,769.0H543.75M539.8,765.15V773.05M570.85,769.0H578.75M574.8,765.15V773.05M631.05,769.0H638.95M635.0,765.15V773.05M973.95,769.0H981.85M977.9,765.15V773.05M1069.75,769.0H1077.65M1073.7,765.15V773.05M1108.85,769.0H1116.75M1112.8,765.15V773.05M1177.85,769.0H1185.75M1181.8,765.15V773.05M1255.95,769.0H1263.85M1259.9,765.15V773.05M1466.95,769.0H1474.85M1470.9,765.15V773.05M427.95,752.0H435.85M431.9,748.15V756.05M539.75,752.0H547.65M543.7,748.15V756.05M574.65,752.0H582.55M578.6,748.15V756.05M703.95,752.0H711.85M707.9,748.15V756.05M1094.85,752.0H1102.75M1098.8,748.15V756.05M1270.85,752.0H1278.75M1274.8,748.15V756.05M1476.95,752.0H1484.85M1480.9,748.15V756.05M437.75,736.0H445.65M441.7,732.15V740.05M630.85,736.0H638.75M634.8,732.15V740.05M1038.85,736.0H1046.75M1042.8,732.15V740.05M1167.85,736.0H1175.75M1171.8,732.15V740.05M1274.85,736.0H1282.75M1278.8,732.15V740.05M1496.85,736.0H1504.75M1500.8,732.15V740.05M598.85,720.0H606.75M602.8,716.15V724.05M726.85,720.0H734.75M730.8,716.15V724.05M1187.75,720.0H1195.65M1191.7,716.15V724.05M1270.85,720.0H1278.75M1274.8,716.15V724.05M687.75,703.0H695.65M691.7,699.15V707.05M1101.95,703.0H1109.85M1105.9,699.15V707.05M1206.85,703.0H1214.75M1210.8,699.15V707.05M1300.05,703.0H1307.95M1304.0,699.15V707.05M1118.85,687.0H1126.75M1122.8,683.15V691.05" stroke="#fff" stroke-width="2.08" fill="none"/>
<g font-size="10.6" fill="#fff">
<text x="106.9" y="831.6">KSE</text>
<text x="244.7" y="831.6">ETA</text>
<text x="484.0" y="831.6">NZC</text>
<text x="698.6" y="831.6">NDA</text>
<text x="844.1" y="831.6">SPE</text>
<text x="935.3" y="831.6">ARD</text>
<text x="1013.9" y="831.6">EGE</text>
<text x="1131.8" y="831.6">NTA</text>
<text x="1272.2" y="831.6">MON</text>
<text x="1332.5" y="831.6">URS</text>
<text x="1401.1" y="831.6">AHY</text>
<text x="1473.5" y="831.6">GUM</text>
<text x="1523.9" y="831.6">OHY</text>
<text x="1725.2" y="831.6">XHE</text>
<text x="1760.8" y="831.6">EVI</text>
<text x="166.2" y="815.4">AVB</text>
<text x="245.6" y="815.4">ELY</text>
<text x="312.1" y="815.4">CAM</text>
<text x="421.0" y="815.4">SSG</text>
<text x="567.7" y="815.4">PCA</text>
<text x="709.3" y="815.4">AUD</text>
<text x="798.3" y="815.4">AUR</text>
<text x="919.9" y="815.4">DSX</text>
<text x="999.2" y="815.4">OCU</text>
<text x="1126.9" y="815.4">OER</text>
<text x="1243.0" y="815.4">DKD</text>
<text x="1292.7" y="815.4">DSV</text>
<text x="1343.9" y="815.4">ALY</text>
<text x="1400.5" y="815.4">JLE</text>
<text x="1460.9" y="815.4">SCC</text>
<text x="1548.3" y="815.4">FEV</text>
<text x="166.8" y="799.4">LYR</text>
<text x="363.5" y="799.4">JMC</text>
<text x="551.2" y="799.4">JPE</text>
<text x="661.2" y="799.4">PAU</text>
<text x="764.6" y="799.4">NIA</text>
<text x="1039.9" y="799.4">STA</text>
<text x="1193.9" y="799.4">NOO</text>
<text x="1341.3" y="799.4">COM</text>
<text x="1458.9" y="799.4">NCC</text>
<text x="1553.7" y="799.4">FED</text>
<text x="197.0" y="782.6">HVI</text>
<text x="403.6" y="782.6">ARI</text>
<text x="519.2" y="782.6">SZC</text>
<text x="607.9" y="782.6">CAP</text>
<text x="806.9" y="782.6">NUE</text>
<text x="949.9" y="782.6">OCT</text>
<text x="1050.2" y="782.6">ORI</text>
<text x="1174.6" y="782.6">AMO</text>
<text x="1243.7" y="782.6">DPC</text>
<text x="1320.4" y="782.6">XVI</text>
<text x="1395.8" y="782.6">QUA</text>
<text x="1548.5" y="782.6">AAN</text>
<text x="343.2" y="766.4">TAH</text>
<text x="423.4" y="766.4">JEA</text>
<text x="475.2" y="766.4">JIP</text>
<text x="528.8" y="766.4">PPS</text>
<text x="568.0" y="766.4">ZCS</text>
<text x="620.7" y="766.4">GDR</text>
<text x="959.6" y="766.4">DRA</text>
<text x="1062.1" y="766.4">LUM</text>
<text x="1102.1" y="766.4">RPU</text>
<text x="1166.5" y="766.4">THA</text>
<text x="1248.9" y="766.4">PSU</text>
<text x="1460.4" y="766.4">XCB</text>
<text x="423.5" y="749.6">JRC</text>
<text x="533.3" y="749.6">CAN</text>
<text x="567.8" y="749.6">FAN</text>
<text x="670.7" y="749.6">PER</text>
<text x="1039.6" y="749.6">CTA</text>
<text x="1253.8" y="749.6">HYD</text>
<text x="1469.4" y="749.6">XUM</text>
<text x="429.9" y="732.8">COR</text>
<text x="646.7" y="732.8">SDA</text>
<text x="1040.1" y="732.8">LMI</text>
<text x="1156.0" y="732.8">LEO</text>
<text x="1263.7" y="732.8">EHY</text>
<text x="1489.7" y="732.8">ECV</text>
<text x="595.1" y="716.7">JXA</text>
<text x="704.9" y="716.7">KCG</text>
<text x="1145.2" y="716.7">AND</text>
<text x="1263.0" y="716.7">DAD</text>
<text x="657.9" y="700.7">ERI</text>
<text x="1098.0" y="700.7">SLD</text>
<text x="1200.1" y="700.7">ORS</text>
<text x="1288.2" y="700.7">GEM</text>
<text x="1111.0" y="684.1">KUM</text>
</g>
</g>
<rect x="20.5" y="641.5" width="1765.0" height="201.0" fill="none" stroke="#fff" stroke-width="1.11"/>
<path d="M20.50,842.5v5.4M265.50,842.5v5.4M510.50,842.5v5.4M755.50,842.5v5.4M1001.50,842.5v5.4M1246.50,842.5v5.4M1491.50,842.5v5.4M1736.50,842.5v5.4" stroke="#fff" stroke-width="1.11" fill="none"/>
<g font-size="13.89" fill="#fff">
<text x="15.8" y="861.9">0</text>
<text x="256.1" y="861.9">50</text>
<text x="496.6" y="861.9">100</text>
<text x="741.7" y="861.9">150</text>
<text x="987.1" y="861.9">200</text>
<text x="1232.3" y="861.9">250</text>
<text x="1477.4" y="861.9">300</text>
<text x="1722.5" y="861.9">350</text>
<text x="902.6" y="881.9" text-anchor="middle">Solar longitude (deg)</text>
</g>
</g>
</svg>
</body></html>
